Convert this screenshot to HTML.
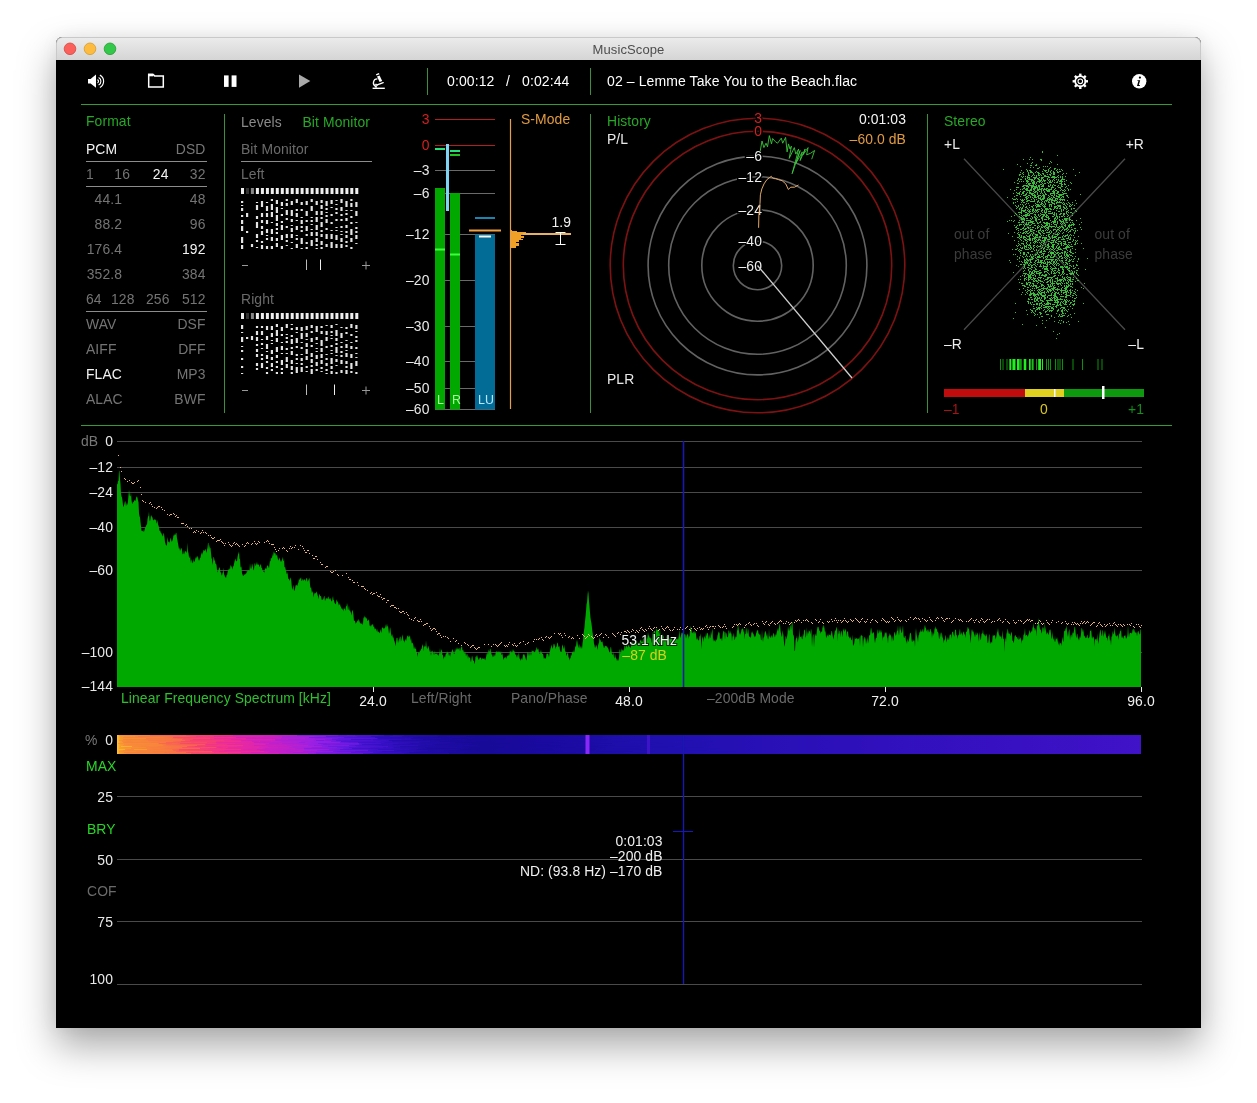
<!DOCTYPE html>
<html><head><meta charset="utf-8"><title>MusicScope</title>
<style>
html,body{margin:0;padding:0;width:1257px;height:1103px;overflow:hidden;background:#fff;}
#win{position:absolute;left:56px;top:37px;width:1145px;height:991px;background:#000;border-radius:6px 6px 0 0;box-shadow:0 18px 38px rgba(0,0,0,0.34), 0 0 18px rgba(0,0,0,0.05);}
#tb{position:absolute;left:0;top:0;width:1143px;height:22px;border:1px solid #c9c9c9;border-bottom:0;border-radius:6px 6px 0 0;background:linear-gradient(#ebebeb,#d5d5d5);}
svg{position:absolute;left:0;top:0;font-family:"Liberation Sans", sans-serif;will-change:transform;}
text{letter-spacing:0.1px;}
</style></head><body>
<div id="win"><div id="tb"></div></div>
<svg width="1257" height="1103" viewBox="0 0 1257 1103">
<text x="628.5" y="54" fill="#4d4d4d" font-size="13" text-anchor="middle" >MusicScope</text>
<circle cx="70" cy="48.8" r="5.8" fill="#fc605b" stroke="#d2463f" stroke-width="0.8"/>
<circle cx="90" cy="48.8" r="5.8" fill="#fdbc40" stroke="#d49a2c" stroke-width="0.8"/>
<circle cx="110" cy="48.8" r="5.8" fill="#34c84a" stroke="#249a30" stroke-width="0.8"/>
<path d="M88 79h2.6l5.4-4.4v13.2l-5.4-4.4h-2.6z" fill="#fff"/>
<path d="M97.49 79.62A1.9 1.9 0 0 1 97.49 82.98M98.62 77.50A4.3 4.3 0 0 1 98.62 85.10M99.89 75.12A7.0 7.0 0 0 1 99.89 87.48" fill="none" stroke="#fff" stroke-width="1.15"/>
<path d="M148.7 87.1V74.4h4.4l1.5 1.5h8.7v11.2z" fill="none" stroke="#fff" stroke-width="1.5"/>
<rect x="148" y="73.7" width="5.2" height="2.6" fill="#fff" />
<rect x="224" y="75.4" width="4.6" height="11.5" fill="#fff" />
<rect x="231.6" y="75.4" width="4.9" height="11.5" fill="#fff" />
<path d="M299 74.4L310.3 81.1L299 87.8z" fill="#a9a9a9"/>
<rect x="372.6" y="87.6" width="12.2" height="1.4" fill="#fff" />
<path d="M377.4 78.9A3.9 3.9 0 0 0 375.6 86.3L376.3 87.8" fill="none" stroke="#fff" stroke-width="1.3"/>
<circle cx="376" cy="85.3" r="1.15" fill="none" stroke="#fff" stroke-width="1"/>
<path d="M376.6 85.1L383.2 82.6" fill="none" stroke="#fff" stroke-width="1.3" stroke-linecap="round"/>
<path d="M377 76.6L379.6 75.4L382.2 80.9L379.6 82z" fill="#fff"/>
<path d="M375.9 74.3L378.9 73L379.5 74.3L376.5 75.6z" fill="#fff"/>
<line x1="427.5" y1="68" x2="427.5" y2="95" stroke="#3d8f3d" stroke-width="1" />
<line x1="590.5" y1="68" x2="590.5" y2="95" stroke="#3d8f3d" stroke-width="1" />
<text x="447" y="86" fill="#fff" font-size="14" text-anchor="start" >0:00:12</text>
<text x="506" y="86" fill="#fff" font-size="14" text-anchor="start" >/</text>
<text x="522" y="86" fill="#fff" font-size="14" text-anchor="start" >0:02:44</text>
<text x="607" y="86" fill="#fff" font-size="14" text-anchor="start" >02 – Lemme Take You to the Beach.flac</text>
<g><rect x="1079.1" y="73.6" width="2.4" height="3.4" fill="#fff" transform="rotate(0 1080.3 81.3)"/><rect x="1079.1" y="73.6" width="2.4" height="3.4" fill="#fff" transform="rotate(45 1080.3 81.3)"/><rect x="1079.1" y="73.6" width="2.4" height="3.4" fill="#fff" transform="rotate(90 1080.3 81.3)"/><rect x="1079.1" y="73.6" width="2.4" height="3.4" fill="#fff" transform="rotate(135 1080.3 81.3)"/><rect x="1079.1" y="73.6" width="2.4" height="3.4" fill="#fff" transform="rotate(180 1080.3 81.3)"/><rect x="1079.1" y="73.6" width="2.4" height="3.4" fill="#fff" transform="rotate(225 1080.3 81.3)"/><rect x="1079.1" y="73.6" width="2.4" height="3.4" fill="#fff" transform="rotate(270 1080.3 81.3)"/><rect x="1079.1" y="73.6" width="2.4" height="3.4" fill="#fff" transform="rotate(315 1080.3 81.3)"/><circle cx="1080.3" cy="81.3" r="5.1" fill="none" stroke="#fff" stroke-width="1.7"/><circle cx="1080.3" cy="81.3" r="2.3" fill="none" stroke="#fff" stroke-width="1.1"/></g>
<circle cx="1139.2" cy="81.3" r="7.2" fill="#fff"/>
<circle cx="1139.9" cy="77.6" r="1.1" fill="#000"/>
<path d="M1137.6 80.2h2.6l-1.4 4.8h1.2l-0.3 0.9h-2.7l1.4-4.8h-1.1z" fill="#000"/>
<line x1="81" y1="104.5" x2="1172" y2="104.5" stroke="#369a36" stroke-width="1.2" />
<line x1="81" y1="425.5" x2="1172" y2="425.5" stroke="#369a36" stroke-width="1.2" />
<text x="86" y="126" fill="#27a827" font-size="13.9" text-anchor="start" >Format</text>
<text x="86" y="154" fill="#f2f2f2" font-size="13.9" text-anchor="start" >PCM</text>
<text x="205.5" y="154" fill="#777" font-size="13.9" text-anchor="end" >DSD</text>
<line x1="86" y1="161.5" x2="207" y2="161.5" stroke="#8c8c8c" stroke-width="1" />
<text x="86" y="179" fill="#747474" font-size="13.9" text-anchor="start" >1</text>
<text x="130" y="179" fill="#747474" font-size="13.9" text-anchor="end" >16</text>
<text x="168.5" y="179" fill="#f2f2f2" font-size="13.9" text-anchor="end" >24</text>
<text x="205.5" y="179" fill="#747474" font-size="13.9" text-anchor="end" >32</text>
<line x1="86" y1="186.5" x2="207" y2="186.5" stroke="#8c8c8c" stroke-width="1" />
<text x="122" y="204" fill="#747474" font-size="13.9" text-anchor="end" >44.1</text>
<text x="205.5" y="204" fill="#747474" font-size="13.9" text-anchor="end" >48</text>
<text x="122" y="229" fill="#747474" font-size="13.9" text-anchor="end" >88.2</text>
<text x="205.5" y="229" fill="#747474" font-size="13.9" text-anchor="end" >96</text>
<text x="122" y="254" fill="#747474" font-size="13.9" text-anchor="end" >176.4</text>
<text x="205.5" y="254" fill="#f2f2f2" font-size="13.9" text-anchor="end" >192</text>
<text x="122" y="279" fill="#747474" font-size="13.9" text-anchor="end" >352.8</text>
<text x="205.5" y="279" fill="#747474" font-size="13.9" text-anchor="end" >384</text>
<text x="86" y="304" fill="#747474" font-size="13.9" text-anchor="start" >64</text>
<text x="134.5" y="304" fill="#747474" font-size="13.9" text-anchor="end" >128</text>
<text x="169.5" y="304" fill="#747474" font-size="13.9" text-anchor="end" >256</text>
<text x="205.5" y="304" fill="#747474" font-size="13.9" text-anchor="end" >512</text>
<line x1="86" y1="311.5" x2="207" y2="311.5" stroke="#8c8c8c" stroke-width="1" />
<text x="86" y="329" fill="#747474" font-size="13.9" text-anchor="start" >WAV</text>
<text x="205.5" y="329" fill="#747474" font-size="13.9" text-anchor="end" >DSF</text>
<text x="86" y="354" fill="#747474" font-size="13.9" text-anchor="start" >AIFF</text>
<text x="205.5" y="354" fill="#747474" font-size="13.9" text-anchor="end" >DFF</text>
<text x="86" y="379" fill="#f2f2f2" font-size="13.9" text-anchor="start" >FLAC</text>
<text x="205.5" y="379" fill="#747474" font-size="13.9" text-anchor="end" >MP3</text>
<text x="86" y="404" fill="#747474" font-size="13.9" text-anchor="start" >ALAC</text>
<text x="205.5" y="404" fill="#747474" font-size="13.9" text-anchor="end" >BWF</text>
<line x1="224.5" y1="114" x2="224.5" y2="413" stroke="#3d8f3d" stroke-width="1" />
<line x1="590.5" y1="114" x2="590.5" y2="413" stroke="#3d8f3d" stroke-width="1" />
<line x1="927.5" y1="114" x2="927.5" y2="413" stroke="#3d8f3d" stroke-width="1" />
<text x="241" y="127" fill="#8a8a8a" font-size="13.9" text-anchor="start" >Levels</text>
<text x="302.5" y="127" fill="#27a827" font-size="13.9" text-anchor="start" >Bit Monitor</text>
<text x="241" y="154" fill="#6a6a6a" font-size="13.9" text-anchor="start" >Bit Monitor</text>
<line x1="241" y1="161.5" x2="372" y2="161.5" stroke="#8c8c8c" stroke-width="1" />
<text x="241" y="179" fill="#6a6a6a" font-size="13.9" text-anchor="start" >Left</text>
<text x="241" y="304" fill="#6a6a6a" font-size="13.9" text-anchor="start" >Right</text>
<rect x="246.0" y="188" width="3" height="6" fill="#333"/>
<rect x="250.9" y="188" width="3" height="6" fill="#888"/>
<path d="M241.0 188h3v6h-3zM255.9 188h3v6h-3zM260.9 188h3v6h-3zM265.9 188h3v6h-3zM270.8 188h3v6h-3zM275.8 188h3v6h-3zM280.8 188h3v6h-3zM285.7 188h3v6h-3zM290.7 188h3v6h-3zM295.7 188h3v6h-3zM300.6 188h3v6h-3zM305.6 188h3v6h-3zM310.6 188h3v6h-3zM315.6 188h3v6h-3zM320.5 188h3v6h-3zM325.5 188h3v6h-3zM330.5 188h3v6h-3zM335.4 188h3v6h-3zM340.4 188h3v6h-3zM345.4 188h3v6h-3zM350.3 188h3v6h-3zM355.3 188h3v6h-3z" fill="#eee"/>
<path d="M241.0 201h2.2v2h-2.2zM241.0 205h2.2v1h-2.2zM241.0 208h2.2v3h-2.2zM241.0 215h2.2v2h-2.2zM241.0 220h2.2v4h-2.2zM241.0 226h2.2v5h-2.2zM241.0 237h2.2v6h-2.2zM241.0 245h2.2v4h-2.2zM246.0 213h2.2v4h-2.2zM246.0 231h2.2v2h-2.2zM250.9 244h2.2v3h-2.2zM255.9 202h2.2v1h-2.2zM255.9 205h2.2v5h-2.2zM255.9 216h2.2v3h-2.2zM255.9 222h2.2v6h-2.2zM255.9 234h2.2v4h-2.2zM255.9 240h2.2v2h-2.2zM255.9 247h2.2v1h-2.2zM260.9 201h2.2v6h-2.2zM260.9 213h2.2v4h-2.2zM260.9 220h2.2v3h-2.2zM260.9 226h2.2v3h-2.2zM260.9 231h2.2v4h-2.2zM260.9 241h2.2v2h-2.2zM260.9 245h2.2v4h-2.2zM265.9 202h2.2v1h-2.2zM265.9 206h2.2v5h-2.2zM265.9 213h2.2v4h-2.2zM265.9 220h2.2v4h-2.2zM265.9 229h2.2v4h-2.2zM265.9 235h2.2v1h-2.2zM265.9 238h2.2v2h-2.2zM265.9 246h2.2v3h-2.2zM270.8 199h2.2v2h-2.2zM270.8 204h2.2v6h-2.2zM270.8 212h2.2v5h-2.2zM270.8 222h2.2v1h-2.2zM270.8 229h2.2v5h-2.2zM270.8 237h2.2v4h-2.2zM270.8 246h2.2v3h-2.2zM275.8 200h2.2v4h-2.2zM275.8 207h2.2v6h-2.2zM275.8 215h2.2v6h-2.2zM275.8 223h2.2v3h-2.2zM275.8 228h2.2v2h-2.2zM275.8 232h2.2v2h-2.2zM275.8 238h2.2v3h-2.2zM275.8 243h2.2v4h-2.2zM280.8 202h2.2v4h-2.2zM280.8 208h2.2v1h-2.2zM280.8 214h2.2v2h-2.2zM280.8 221h2.2v2h-2.2zM280.8 225h2.2v5h-2.2zM280.8 235h2.2v5h-2.2zM280.8 246h2.2v3h-2.2zM285.7 199h2.2v2h-2.2zM285.7 203h2.2v3h-2.2zM285.7 210h2.2v5h-2.2zM285.7 218h2.2v2h-2.2zM285.7 226h2.2v2h-2.2zM285.7 234h2.2v4h-2.2zM285.7 240h2.2v2h-2.2zM285.7 245h2.2v1h-2.2zM290.7 201h2.2v4h-2.2zM290.7 210h2.2v6h-2.2zM290.7 219h2.2v3h-2.2zM290.7 225h2.2v1h-2.2zM290.7 228h2.2v4h-2.2zM290.7 234h2.2v4h-2.2zM290.7 242h2.2v1h-2.2zM290.7 248h2.2v1h-2.2zM295.7 199h2.2v4h-2.2zM295.7 209h2.2v2h-2.2zM295.7 213h2.2v4h-2.2zM295.7 220h2.2v1h-2.2zM295.7 226h2.2v4h-2.2zM295.7 235h2.2v1h-2.2zM295.7 238h2.2v2h-2.2zM295.7 244h2.2v4h-2.2zM300.6 202h2.2v3h-2.2zM300.6 209h2.2v2h-2.2zM300.6 217h2.2v1h-2.2zM300.6 220h2.2v4h-2.2zM300.6 226h2.2v2h-2.2zM300.6 230h2.2v2h-2.2zM300.6 238h2.2v6h-2.2zM300.6 248h2.2v1h-2.2zM305.6 201h2.2v4h-2.2zM305.6 211h2.2v5h-2.2zM305.6 220h2.2v2h-2.2zM305.6 226h2.2v5h-2.2zM305.6 234h2.2v2h-2.2zM305.6 242h2.2v2h-2.2zM305.6 247h2.2v2h-2.2zM310.6 199h2.2v3h-2.2zM310.6 206h2.2v5h-2.2zM310.6 217h2.2v1h-2.2zM310.6 220h2.2v2h-2.2zM310.6 224h2.2v1h-2.2zM310.6 229h2.2v1h-2.2zM310.6 232h2.2v4h-2.2zM310.6 240h2.2v6h-2.2zM315.6 201h2.2v4h-2.2zM315.6 211h2.2v4h-2.2zM315.6 217h2.2v5h-2.2zM315.6 225h2.2v5h-2.2zM315.6 232h2.2v4h-2.2zM315.6 238h2.2v4h-2.2zM315.6 244h2.2v2h-2.2zM315.6 248h2.2v1h-2.2zM320.5 200h2.2v3h-2.2zM320.5 205h2.2v4h-2.2zM320.5 211h2.2v4h-2.2zM320.5 217h2.2v2h-2.2zM320.5 222h2.2v5h-2.2zM320.5 230h2.2v2h-2.2zM320.5 234h2.2v3h-2.2zM320.5 241h2.2v4h-2.2zM320.5 247h2.2v2h-2.2zM325.5 201h2.2v5h-2.2zM325.5 208h2.2v2h-2.2zM325.5 212h2.2v1h-2.2zM325.5 215h2.2v2h-2.2zM325.5 219h2.2v4h-2.2zM325.5 228h2.2v2h-2.2zM325.5 234h2.2v5h-2.2zM325.5 244h2.2v3h-2.2zM330.5 200h2.2v4h-2.2zM330.5 207h2.2v1h-2.2zM330.5 214h2.2v2h-2.2zM330.5 222h2.2v2h-2.2zM330.5 230h2.2v1h-2.2zM330.5 234h2.2v5h-2.2zM330.5 242h2.2v6h-2.2zM335.4 200h2.2v1h-2.2zM335.4 204h2.2v1h-2.2zM335.4 208h2.2v2h-2.2zM335.4 212h2.2v2h-2.2zM335.4 219h2.2v2h-2.2zM335.4 227h2.2v1h-2.2zM335.4 230h2.2v1h-2.2zM335.4 235h2.2v5h-2.2zM335.4 244h2.2v4h-2.2zM340.4 199h2.2v4h-2.2zM340.4 207h2.2v4h-2.2zM340.4 214h2.2v2h-2.2zM340.4 219h2.2v2h-2.2zM340.4 226h2.2v2h-2.2zM340.4 231h2.2v1h-2.2zM340.4 234h2.2v1h-2.2zM340.4 238h2.2v4h-2.2zM340.4 244h2.2v4h-2.2zM345.4 201h2.2v6h-2.2zM345.4 210h2.2v1h-2.2zM345.4 213h2.2v2h-2.2zM345.4 218h2.2v3h-2.2zM345.4 225h2.2v3h-2.2zM345.4 231h2.2v2h-2.2zM345.4 235h2.2v3h-2.2zM345.4 241h2.2v2h-2.2zM345.4 245h2.2v2h-2.2zM350.3 199h2.2v2h-2.2zM350.3 203h2.2v4h-2.2zM350.3 210h2.2v1h-2.2zM350.3 216h2.2v2h-2.2zM350.3 222h2.2v2h-2.2zM350.3 229h2.2v6h-2.2zM350.3 238h2.2v4h-2.2zM350.3 247h2.2v2h-2.2zM355.3 202h2.2v5h-2.2zM355.3 211h2.2v5h-2.2zM355.3 222h2.2v1h-2.2zM355.3 227h2.2v2h-2.2zM355.3 231h2.2v2h-2.2zM355.3 235h2.2v4h-2.2zM355.3 243h2.2v1h-2.2z" fill="#e4e4e4"/>
<rect x="246.0" y="313" width="3" height="6" fill="#333"/>
<rect x="250.9" y="313" width="3" height="6" fill="#888"/>
<path d="M241.0 313h3v6h-3zM255.9 313h3v6h-3zM260.9 313h3v6h-3zM265.9 313h3v6h-3zM270.8 313h3v6h-3zM275.8 313h3v6h-3zM280.8 313h3v6h-3zM285.7 313h3v6h-3zM290.7 313h3v6h-3zM295.7 313h3v6h-3zM300.6 313h3v6h-3zM305.6 313h3v6h-3zM310.6 313h3v6h-3zM315.6 313h3v6h-3zM320.5 313h3v6h-3zM325.5 313h3v6h-3zM330.5 313h3v6h-3zM335.4 313h3v6h-3zM340.4 313h3v6h-3zM345.4 313h3v6h-3zM350.3 313h3v6h-3zM355.3 313h3v6h-3z" fill="#eee"/>
<path d="M241.0 325h2.2v4h-2.2zM241.0 332h2.2v1h-2.2zM241.0 337h2.2v5h-2.2zM241.0 346h2.2v1h-2.2zM241.0 350h2.2v2h-2.2zM241.0 358h2.2v2h-2.2zM241.0 366h2.2v2h-2.2zM241.0 373h2.2v1h-2.2zM246.0 337h2.2v2h-2.2zM250.9 336h2.2v4h-2.2zM255.9 326h2.2v2h-2.2zM255.9 331h2.2v4h-2.2zM255.9 337h2.2v4h-2.2zM255.9 344h2.2v2h-2.2zM255.9 349h2.2v3h-2.2zM255.9 354h2.2v3h-2.2zM255.9 363h2.2v3h-2.2zM255.9 368h2.2v2h-2.2zM260.9 326h2.2v2h-2.2zM260.9 331h2.2v4h-2.2zM260.9 339h2.2v1h-2.2zM260.9 343h2.2v2h-2.2zM260.9 348h2.2v1h-2.2zM260.9 354h2.2v2h-2.2zM260.9 358h2.2v2h-2.2zM260.9 363h2.2v5h-2.2zM265.9 326h2.2v4h-2.2zM265.9 336h2.2v4h-2.2zM265.9 344h2.2v5h-2.2zM265.9 351h2.2v1h-2.2zM265.9 355h2.2v4h-2.2zM265.9 361h2.2v2h-2.2zM265.9 367h2.2v2h-2.2zM265.9 372h2.2v2h-2.2zM270.8 326h2.2v4h-2.2zM270.8 333h2.2v4h-2.2zM270.8 340h2.2v1h-2.2zM270.8 343h2.2v1h-2.2zM270.8 350h2.2v4h-2.2zM270.8 357h2.2v3h-2.2zM270.8 363h2.2v4h-2.2zM270.8 369h2.2v2h-2.2zM275.8 324h2.2v3h-2.2zM275.8 330h2.2v6h-2.2zM275.8 338h2.2v4h-2.2zM275.8 347h2.2v5h-2.2zM275.8 355h2.2v3h-2.2zM275.8 361h2.2v2h-2.2zM275.8 366h2.2v2h-2.2zM275.8 372h2.2v2h-2.2zM280.8 327h2.2v4h-2.2zM280.8 334h2.2v2h-2.2zM280.8 342h2.2v1h-2.2zM280.8 346h2.2v4h-2.2zM280.8 353h2.2v1h-2.2zM280.8 360h2.2v5h-2.2zM280.8 368h2.2v2h-2.2zM280.8 372h2.2v2h-2.2zM285.7 324h2.2v4h-2.2zM285.7 334h2.2v1h-2.2zM285.7 337h2.2v2h-2.2zM285.7 341h2.2v2h-2.2zM285.7 348h2.2v2h-2.2zM285.7 353h2.2v1h-2.2zM285.7 357h2.2v5h-2.2zM285.7 364h2.2v4h-2.2zM290.7 324h2.2v1h-2.2zM290.7 328h2.2v2h-2.2zM290.7 335h2.2v2h-2.2zM290.7 339h2.2v5h-2.2zM290.7 347h2.2v2h-2.2zM290.7 351h2.2v4h-2.2zM290.7 360h2.2v4h-2.2zM290.7 366h2.2v4h-2.2zM290.7 372h2.2v2h-2.2zM295.7 327h2.2v3h-2.2zM295.7 332h2.2v1h-2.2zM295.7 338h2.2v5h-2.2zM295.7 346h2.2v2h-2.2zM295.7 354h2.2v2h-2.2zM295.7 358h2.2v2h-2.2zM295.7 363h2.2v1h-2.2zM295.7 367h2.2v6h-2.2zM300.6 327h2.2v4h-2.2zM300.6 333h2.2v6h-2.2zM300.6 342h2.2v1h-2.2zM300.6 347h2.2v2h-2.2zM300.6 354h2.2v1h-2.2zM300.6 358h2.2v3h-2.2zM300.6 363h2.2v2h-2.2zM300.6 367h2.2v5h-2.2zM305.6 326h2.2v4h-2.2zM305.6 333h2.2v4h-2.2zM305.6 339h2.2v1h-2.2zM305.6 343h2.2v4h-2.2zM305.6 349h2.2v5h-2.2zM305.6 356h2.2v4h-2.2zM305.6 366h2.2v2h-2.2zM305.6 371h2.2v1h-2.2zM310.6 325h2.2v3h-2.2zM310.6 331h2.2v2h-2.2zM310.6 338h2.2v4h-2.2zM310.6 345h2.2v2h-2.2zM310.6 353h2.2v4h-2.2zM310.6 359h2.2v4h-2.2zM310.6 365h2.2v2h-2.2zM310.6 369h2.2v5h-2.2zM315.6 326h2.2v6h-2.2zM315.6 337h2.2v3h-2.2zM315.6 343h2.2v1h-2.2zM315.6 348h2.2v1h-2.2zM315.6 351h2.2v1h-2.2zM315.6 355h2.2v4h-2.2zM315.6 362h2.2v4h-2.2zM315.6 369h2.2v2h-2.2zM320.5 326h2.2v2h-2.2zM320.5 331h2.2v3h-2.2zM320.5 340h2.2v6h-2.2zM320.5 348h2.2v4h-2.2zM320.5 354h2.2v4h-2.2zM320.5 360h2.2v4h-2.2zM320.5 367h2.2v2h-2.2zM320.5 371h2.2v1h-2.2zM325.5 325h2.2v1h-2.2zM325.5 331h2.2v4h-2.2zM325.5 337h2.2v4h-2.2zM325.5 346h2.2v2h-2.2zM325.5 354h2.2v1h-2.2zM325.5 358h2.2v2h-2.2zM325.5 363h2.2v3h-2.2zM325.5 369h2.2v2h-2.2zM325.5 373h2.2v1h-2.2zM330.5 325h2.2v3h-2.2zM330.5 331h2.2v2h-2.2zM330.5 335h2.2v1h-2.2zM330.5 338h2.2v1h-2.2zM330.5 345h2.2v2h-2.2zM330.5 350h2.2v1h-2.2zM330.5 353h2.2v1h-2.2zM330.5 358h2.2v6h-2.2zM330.5 366h2.2v3h-2.2zM330.5 371h2.2v3h-2.2zM335.4 324h2.2v1h-2.2zM335.4 330h2.2v6h-2.2zM335.4 338h2.2v3h-2.2zM335.4 343h2.2v2h-2.2zM335.4 347h2.2v6h-2.2zM335.4 355h2.2v1h-2.2zM335.4 359h2.2v3h-2.2zM335.4 365h2.2v1h-2.2zM335.4 372h2.2v2h-2.2zM340.4 327h2.2v1h-2.2zM340.4 333h2.2v5h-2.2zM340.4 342h2.2v1h-2.2zM340.4 346h2.2v2h-2.2zM340.4 351h2.2v2h-2.2zM340.4 355h2.2v2h-2.2zM340.4 360h2.2v4h-2.2zM340.4 370h2.2v3h-2.2zM345.4 327h2.2v2h-2.2zM345.4 332h2.2v2h-2.2zM345.4 340h2.2v1h-2.2zM345.4 344h2.2v4h-2.2zM345.4 350h2.2v1h-2.2zM345.4 353h2.2v4h-2.2zM345.4 361h2.2v3h-2.2zM345.4 366h2.2v2h-2.2zM345.4 370h2.2v4h-2.2zM350.3 324h2.2v4h-2.2zM350.3 334h2.2v2h-2.2zM350.3 342h2.2v1h-2.2zM350.3 346h2.2v3h-2.2zM350.3 354h2.2v4h-2.2zM350.3 363h2.2v6h-2.2zM350.3 371h2.2v2h-2.2zM355.3 325h2.2v4h-2.2zM355.3 331h2.2v1h-2.2zM355.3 336h2.2v2h-2.2zM355.3 340h2.2v2h-2.2zM355.3 347h2.2v2h-2.2zM355.3 353h2.2v1h-2.2zM355.3 357h2.2v1h-2.2zM355.3 361h2.2v5h-2.2zM355.3 372h2.2v2h-2.2z" fill="#e4e4e4"/>
<line x1="242" y1="265.5" x2="248" y2="265.5" stroke="#999" stroke-width="1" />
<line x1="362" y1="265.5" x2="370" y2="265.5" stroke="#999" stroke-width="1" />
<line x1="366" y1="261.5" x2="366" y2="269.5" stroke="#999" stroke-width="1" />
<line x1="306.5" y1="259.5" x2="306.5" y2="270" stroke="#bbb" stroke-width="1" />
<line x1="320.5" y1="259.5" x2="320.5" y2="270" stroke="#eee" stroke-width="1" />
<line x1="242" y1="390.5" x2="248" y2="390.5" stroke="#999" stroke-width="1" />
<line x1="362" y1="390.5" x2="370" y2="390.5" stroke="#999" stroke-width="1" />
<line x1="366" y1="386.5" x2="366" y2="394.5" stroke="#999" stroke-width="1" />
<line x1="306.5" y1="384.5" x2="306.5" y2="395" stroke="#bbb" stroke-width="1" />
<line x1="334.5" y1="384.5" x2="334.5" y2="395" stroke="#eee" stroke-width="1" />
<text x="429.5" y="124" fill="#d42020" font-size="13.9" text-anchor="end" >3</text>
<line x1="435" y1="119.5" x2="495" y2="119.5" stroke="#b02020" stroke-width="1" />
<text x="429.5" y="150" fill="#d42020" font-size="13.9" text-anchor="end" >0</text>
<line x1="435" y1="145.5" x2="495" y2="145.5" stroke="#b02020" stroke-width="1" />
<line x1="435" y1="170.5" x2="495" y2="170.5" stroke="#6a6a6a" stroke-width="1" />
<text x="429.5" y="175.0" fill="#e8e8e8" font-size="13.9" text-anchor="end" >–3</text>
<line x1="435" y1="193.5" x2="495" y2="193.5" stroke="#6a6a6a" stroke-width="1" />
<text x="429.5" y="198.0" fill="#e8e8e8" font-size="13.9" text-anchor="end" >–6</text>
<line x1="435" y1="234.5" x2="495" y2="234.5" stroke="#6a6a6a" stroke-width="1" />
<text x="429.5" y="239.0" fill="#e8e8e8" font-size="13.9" text-anchor="end" >–12</text>
<line x1="435" y1="280.5" x2="495" y2="280.5" stroke="#6a6a6a" stroke-width="1" />
<text x="429.5" y="285.0" fill="#e8e8e8" font-size="13.9" text-anchor="end" >–20</text>
<line x1="435" y1="326.5" x2="495" y2="326.5" stroke="#6a6a6a" stroke-width="1" />
<text x="429.5" y="331.0" fill="#e8e8e8" font-size="13.9" text-anchor="end" >–30</text>
<line x1="435" y1="361.5" x2="495" y2="361.5" stroke="#6a6a6a" stroke-width="1" />
<text x="429.5" y="366.0" fill="#e8e8e8" font-size="13.9" text-anchor="end" >–40</text>
<line x1="435" y1="388.5" x2="495" y2="388.5" stroke="#6a6a6a" stroke-width="1" />
<text x="429.5" y="393.0" fill="#e8e8e8" font-size="13.9" text-anchor="end" >–50</text>
<line x1="435" y1="409.5" x2="495" y2="409.5" stroke="#6a6a6a" stroke-width="1" />
<text x="429.5" y="414.0" fill="#e8e8e8" font-size="13.9" text-anchor="end" >–60</text>
<rect x="435" y="188" width="10" height="221.5" fill="#00a800" />
<rect x="450" y="193" width="10" height="216.5" fill="#00a800" />
<rect x="475" y="234.5" width="20" height="175" fill="#036c96" />
<rect x="446" y="144" width="3" height="67" fill="#7fd4f4" />
<rect x="435" y="148" width="10" height="2" fill="#26e07a" />
<rect x="450" y="150" width="10" height="2" fill="#26e07a" />
<rect x="450" y="154" width="10" height="2" fill="#1fc21f" />
<rect x="435" y="248.5" width="10" height="2" fill="#3cff3c" />
<rect x="450" y="253.5" width="10" height="2" fill="#3cff3c" />
<rect x="475" y="217" width="20" height="2" fill="#1a85b0" />
<rect x="469" y="229.5" width="32" height="2" fill="#f0a040" />
<rect x="479" y="235.5" width="12" height="2" fill="#f4f4f4" />
<text x="437" y="404" fill="#a6ff9a" font-size="12.4" text-anchor="start" >L</text>
<text x="452" y="404" fill="#a6ff9a" font-size="12.4" text-anchor="start" >R</text>
<text x="478" y="404" fill="#b8e8ff" font-size="12.4" text-anchor="start" >LU</text>
<line x1="510.5" y1="119" x2="510.5" y2="409" stroke="#e0a050" stroke-width="1.2" />
<text x="521" y="124" fill="#e09a40" font-size="13.9" text-anchor="start" >S-Mode</text>
<rect x="511" y="233" width="60" height="2" fill="#e8b064" />
<path d="M511 230h1v1h-1zM511 231h6v1h-6zM511 232h15v1h-15zM511 233h12v1h-12zM511 234h12v1h-12zM511 235h10v1h-10zM511 236h13v1h-13zM511 237h13v1h-13zM511 238h10v1h-10zM511 239h12v1h-12zM511 240h8v1h-8zM511 241h8v1h-8zM511 242h5v1h-5zM511 243h8v1h-8zM511 244h8v1h-8zM511 245h8v1h-8zM511 246h5v1h-5zM511 247h5v1h-5z" fill="#f0a026"/>
<text x="571" y="227" fill="#f0f0f0" font-size="13.9" text-anchor="end" >1.9</text>
<path d="M555.5 232.5h10M555.5 244.5h10M560.5 232.5v12" stroke="#fff" stroke-width="1" fill="none"/>
<circle cx="757.5" cy="265.5" r="24.2" fill="none" stroke="#626262" stroke-width="1.6"/>
<circle cx="757.5" cy="265.5" r="55.7" fill="none" stroke="#626262" stroke-width="1.6"/>
<circle cx="757.5" cy="265.5" r="88.8" fill="none" stroke="#626262" stroke-width="1.6"/>
<circle cx="757.5" cy="265.5" r="109.4" fill="none" stroke="#626262" stroke-width="1.6"/>
<circle cx="757.5" cy="265.5" r="134.2" fill="none" stroke="#7e1212" stroke-width="1.6"/>
<circle cx="757.5" cy="265.5" r="147.3" fill="none" stroke="#7e1212" stroke-width="1.6"/>
<text x="762" y="123.19999999999999" fill="#d42020" font-size="13.9" text-anchor="end" stroke="#000" stroke-width="3" paint-order="stroke">3</text>
<text x="762" y="136.3" fill="#d42020" font-size="13.9" text-anchor="end" stroke="#000" stroke-width="3" paint-order="stroke">0</text>
<text x="762" y="161.1" fill="#eee" font-size="13.9" text-anchor="end" stroke="#000" stroke-width="3" paint-order="stroke">–6</text>
<text x="762" y="181.7" fill="#eee" font-size="13.9" text-anchor="end" stroke="#000" stroke-width="3" paint-order="stroke">–12</text>
<text x="762" y="214.8" fill="#eee" font-size="13.9" text-anchor="end" stroke="#000" stroke-width="3" paint-order="stroke">–24</text>
<text x="762" y="246.3" fill="#eee" font-size="13.9" text-anchor="end" stroke="#000" stroke-width="3" paint-order="stroke">–40</text>
<text x="762" y="270.5" fill="#eee" font-size="13.9" text-anchor="end" stroke="#000" stroke-width="3" paint-order="stroke">–60</text>
<line x1="757.5" y1="265.5" x2="852" y2="378" stroke="#d0d0d0" stroke-width="1.3" />
<text x="607" y="126" fill="#27a827" font-size="13.9" text-anchor="start" >History</text>
<text x="607" y="144" fill="#e8e8e8" font-size="13.9" text-anchor="start" >P/L</text>
<text x="607" y="384" fill="#e8e8e8" font-size="13.9" text-anchor="start" >PLR</text>
<text x="906" y="124" fill="#f4f4f4" font-size="13.9" text-anchor="end" >0:01:03</text>
<text x="906" y="144" fill="#e09a40" font-size="13.9" text-anchor="end" >–60.0 dB</text>
<polyline points="760.2,151.2 762.0,141.0 763.9,147.6 766.0,143.2 767.5,146.8 769.3,135.6 771.5,143.9 772.6,138.5 775.5,141.8 777.6,143.2 781.3,138.1 782.7,143.2 785.6,137.4 787.1,151.9 788.5,143.9 790.0,149.0 791.4,146.1 789.2,158.4 794.3,147.6 795.8,154.1 798.7,149.0 792.1,173.7 800.1,150.5 795.8,163.5 802.3,151.9 800.1,160.6 805.2,149.0 803.0,154.8 808.1,147.6 806.6,154.8 810.3,153.4 814.6,150.5 811.7,159.2" fill="none" stroke="#3cc63c" stroke-width="0.9"/>
<polyline points="758.6,227.8 758.9,215.1 760,203.5 760.4,194.8 761.8,189 764,183.9 766.9,179.6 771.3,176.3 772.7,178.1 775.6,178.5 778.5,179.6 782.1,180.7 785.8,183.9 788.3,189.4 790.8,187.2 794.5,187.2 798.5,185" fill="none" stroke="#e4a868" stroke-width="1"/>
<text x="944" y="126" fill="#27a827" font-size="13.9" text-anchor="start" >Stereo</text>
<text x="944" y="149" fill="#eee" font-size="13.9" text-anchor="start" >+L</text>
<text x="1144" y="149" fill="#eee" font-size="13.9" text-anchor="end" >+R</text>
<text x="944" y="349" fill="#eee" font-size="13.9" text-anchor="start" >–R</text>
<text x="1144" y="349" fill="#eee" font-size="13.9" text-anchor="end" >–L</text>
<line x1="964" y1="158.7" x2="1125" y2="329.8" stroke="#4a4a4a" stroke-width="1.3" />
<line x1="1125" y1="158.7" x2="964" y2="329.8" stroke="#4a4a4a" stroke-width="1.3" />
<text x="954" y="239" fill="#3c3c3c" font-size="13.9" text-anchor="start" >out of</text>
<text x="954" y="259" fill="#3c3c3c" font-size="13.9" text-anchor="start" >phase</text>
<text x="1094.5" y="239" fill="#3c3c3c" font-size="13.9" text-anchor="start" >out of</text>
<text x="1094.5" y="259" fill="#3c3c3c" font-size="13.9" text-anchor="start" >phase</text>
<path d="M1039 222h1v1h-1zM1045 239h1v1h-1zM1035 260h1v1h-1zM1016 187h1v1h-1zM1054 317h1v1h-1zM1022 200h1v1h-1zM1042 198h1v1h-1zM1049 237h1v1h-1zM1030 238h1v1h-1zM1058 322h1v1h-1zM1025 216h1v1h-1zM1046 269h1v1h-1zM1039 305h1v1h-1zM1046 282h1v1h-1zM1028 174h1v1h-1zM1060 176h1v1h-1zM1024 188h1v1h-1zM1051 286h1v1h-1zM1048 197h1v1h-1zM1033 184h1v1h-1zM1062 309h1v1h-1zM1054 191h1v1h-1zM1031 189h1v1h-1zM1030 277h1v1h-1zM1044 180h1v1h-1zM1046 209h1v1h-1zM1026 254h1v1h-1zM1034 300h1v1h-1zM1070 278h1v1h-1zM1028 290h1v1h-1zM1050 181h1v1h-1zM1028 211h1v1h-1zM1028 195h1v1h-1zM1030 254h1v1h-1zM1041 300h1v1h-1zM1039 237h1v1h-1zM1071 255h1v1h-1zM1049 303h1v1h-1zM1062 192h1v1h-1zM1055 270h1v1h-1zM1070 238h1v1h-1zM1054 172h1v1h-1zM1063 271h1v1h-1zM1056 215h1v1h-1zM1042 232h1v1h-1zM1056 253h1v1h-1zM1045 170h1v1h-1zM1056 265h1v1h-1zM1058 234h1v1h-1zM1029 170h1v1h-1zM1070 260h1v1h-1zM1054 212h1v1h-1zM1059 206h1v1h-1zM1053 237h1v1h-1zM1064 189h1v1h-1zM1044 288h1v1h-1zM1056 179h1v1h-1zM1030 275h1v1h-1zM1043 233h1v1h-1zM1066 253h1v1h-1zM1033 306h1v1h-1zM1055 302h1v1h-1zM1024 215h1v1h-1zM1033 246h1v1h-1zM1042 199h1v1h-1zM1066 253h1v1h-1zM1035 269h1v1h-1zM1031 163h1v1h-1zM1050 204h1v1h-1zM1059 257h1v1h-1zM1064 310h1v1h-1zM1061 181h1v1h-1zM1056 213h1v1h-1zM1038 295h1v1h-1zM1054 276h1v1h-1zM1063 214h1v1h-1zM1066 248h1v1h-1zM1048 289h1v1h-1zM1016 249h1v1h-1zM1038 294h1v1h-1zM1023 219h1v1h-1zM1049 241h1v1h-1zM1030 289h1v1h-1zM1053 197h1v1h-1zM1049 249h1v1h-1zM1069 206h1v1h-1zM1037 209h1v1h-1zM1052 253h1v1h-1zM1051 271h1v1h-1zM1040 230h1v1h-1zM1046 275h1v1h-1zM1048 309h1v1h-1zM1061 179h1v1h-1zM1055 236h1v1h-1zM1037 308h1v1h-1zM1040 199h1v1h-1zM1056 219h1v1h-1zM1029 184h1v1h-1zM1043 240h1v1h-1zM1056 247h1v1h-1zM1051 249h1v1h-1zM1070 292h1v1h-1zM1072 295h1v1h-1zM1025 214h1v1h-1zM1020 204h1v1h-1zM1033 278h1v1h-1zM1028 227h1v1h-1zM1024 280h1v1h-1zM1052 242h1v1h-1zM1021 200h1v1h-1zM1026 240h1v1h-1zM1075 200h1v1h-1zM1070 303h1v1h-1zM1040 236h1v1h-1zM1021 236h1v1h-1zM1044 271h1v1h-1zM1032 271h1v1h-1zM1064 255h1v1h-1zM1039 275h1v1h-1zM1063 238h1v1h-1zM1056 216h1v1h-1zM1073 274h1v1h-1zM1036 269h1v1h-1zM1049 277h1v1h-1zM1050 167h1v1h-1zM1033 212h1v1h-1zM1039 257h1v1h-1zM1056 305h1v1h-1zM1060 316h1v1h-1zM1029 205h1v1h-1zM1069 227h1v1h-1zM1049 232h1v1h-1zM1028 303h1v1h-1zM1070 255h1v1h-1zM1043 190h1v1h-1zM1047 270h1v1h-1zM1032 240h1v1h-1zM1058 258h1v1h-1zM1020 217h1v1h-1zM1057 193h1v1h-1zM1073 293h1v1h-1zM1039 187h1v1h-1zM1072 308h1v1h-1zM1067 256h1v1h-1zM1049 262h1v1h-1zM1026 206h1v1h-1zM1028 230h1v1h-1zM1051 243h1v1h-1zM1042 320h1v1h-1zM1044 195h1v1h-1zM1054 220h1v1h-1zM1024 247h1v1h-1zM1064 219h1v1h-1zM1040 181h1v1h-1zM1028 264h1v1h-1zM1043 180h1v1h-1zM1036 219h1v1h-1zM1028 277h1v1h-1zM1029 277h1v1h-1zM1045 230h1v1h-1zM1050 268h1v1h-1zM1040 281h1v1h-1zM1023 186h1v1h-1zM1035 241h1v1h-1zM1058 283h1v1h-1zM1056 179h1v1h-1zM1059 214h1v1h-1zM1053 229h1v1h-1zM1045 312h1v1h-1zM1047 282h1v1h-1zM1043 305h1v1h-1zM1041 218h1v1h-1zM1041 188h1v1h-1zM1061 285h1v1h-1zM1051 294h1v1h-1zM1050 233h1v1h-1zM1065 291h1v1h-1zM1064 191h1v1h-1zM1050 181h1v1h-1zM1065 262h1v1h-1zM1033 245h1v1h-1zM1048 303h1v1h-1zM1035 268h1v1h-1zM1057 281h1v1h-1zM1050 299h1v1h-1zM1035 242h1v1h-1zM1078 236h1v1h-1zM1043 226h1v1h-1zM1034 214h1v1h-1zM1023 181h1v1h-1zM1058 172h1v1h-1zM1032 179h1v1h-1zM1024 202h1v1h-1zM1058 196h1v1h-1zM1040 204h1v1h-1zM1030 218h1v1h-1zM1030 254h1v1h-1zM1035 188h1v1h-1zM1073 240h1v1h-1zM1047 263h1v1h-1zM1045 226h1v1h-1zM1034 196h1v1h-1zM1072 284h1v1h-1zM1057 205h1v1h-1zM1047 176h1v1h-1zM1031 181h1v1h-1zM1051 224h1v1h-1zM1052 288h1v1h-1zM1044 309h1v1h-1zM1064 244h1v1h-1zM1035 214h1v1h-1zM1052 235h1v1h-1zM1064 181h1v1h-1zM1043 287h1v1h-1zM1051 271h1v1h-1zM1029 183h1v1h-1zM1053 256h1v1h-1zM1056 210h1v1h-1zM1041 210h1v1h-1zM1040 294h1v1h-1zM1032 290h1v1h-1zM1040 265h1v1h-1zM1035 286h1v1h-1zM1025 197h1v1h-1zM1058 293h1v1h-1zM1037 281h1v1h-1zM1057 235h1v1h-1zM1049 311h1v1h-1zM1050 171h1v1h-1zM1057 181h1v1h-1zM1060 284h1v1h-1zM1048 292h1v1h-1zM1031 187h1v1h-1zM1069 273h1v1h-1zM1035 260h1v1h-1zM1067 250h1v1h-1zM1070 219h1v1h-1zM1043 196h1v1h-1zM1083 248h1v1h-1zM1064 283h1v1h-1zM1046 215h1v1h-1zM1034 290h1v1h-1zM1071 183h1v1h-1zM1066 260h1v1h-1zM1014 215h1v1h-1zM1038 196h1v1h-1zM1038 254h1v1h-1zM1026 246h1v1h-1zM1061 274h1v1h-1zM1059 230h1v1h-1zM1069 277h1v1h-1zM1043 292h1v1h-1zM1046 256h1v1h-1zM1019 236h1v1h-1zM1050 280h1v1h-1zM1031 274h1v1h-1zM1039 182h1v1h-1zM1027 176h1v1h-1zM1023 210h1v1h-1zM1063 307h1v1h-1zM1056 231h1v1h-1zM1062 253h1v1h-1zM1020 174h1v1h-1zM1025 204h1v1h-1zM1040 299h1v1h-1zM1069 254h1v1h-1zM1067 200h1v1h-1zM1073 239h1v1h-1zM1051 300h1v1h-1zM1081 243h1v1h-1zM1059 197h1v1h-1zM1038 186h1v1h-1zM1031 304h1v1h-1zM1025 274h1v1h-1zM1034 199h1v1h-1zM1063 197h1v1h-1zM1042 217h1v1h-1zM1060 199h1v1h-1zM1067 208h1v1h-1zM1019 225h1v1h-1zM1067 254h1v1h-1zM1038 181h1v1h-1zM1063 206h1v1h-1zM1061 316h1v1h-1zM1025 231h1v1h-1zM1052 245h1v1h-1zM1066 274h1v1h-1zM1027 252h1v1h-1zM1041 284h1v1h-1zM1055 234h1v1h-1zM1047 200h1v1h-1zM1060 249h1v1h-1zM1026 254h1v1h-1zM1039 167h1v1h-1zM1063 209h1v1h-1zM1029 240h1v1h-1zM1035 191h1v1h-1zM1051 253h1v1h-1zM1029 185h1v1h-1zM1048 189h1v1h-1zM1032 175h1v1h-1zM1061 314h1v1h-1zM1063 313h1v1h-1zM1036 177h1v1h-1zM1026 224h1v1h-1zM1052 186h1v1h-1zM1035 203h1v1h-1zM1035 241h1v1h-1zM1046 307h1v1h-1zM1060 267h1v1h-1zM1042 281h1v1h-1zM1058 229h1v1h-1zM1048 199h1v1h-1zM1044 195h1v1h-1zM1056 196h1v1h-1zM1034 293h1v1h-1zM1024 265h1v1h-1zM1067 196h1v1h-1zM1034 270h1v1h-1zM1065 296h1v1h-1zM1046 303h1v1h-1zM1052 187h1v1h-1zM1033 249h1v1h-1zM1027 181h1v1h-1zM1027 208h1v1h-1zM1063 269h1v1h-1zM1056 193h1v1h-1zM1035 219h1v1h-1zM1022 210h1v1h-1zM1048 169h1v1h-1zM1073 305h1v1h-1zM1060 198h1v1h-1zM1037 293h1v1h-1zM1040 229h1v1h-1zM1026 212h1v1h-1zM1054 224h1v1h-1zM1042 209h1v1h-1zM1041 184h1v1h-1zM1042 275h1v1h-1zM1042 178h1v1h-1zM1033 248h1v1h-1zM1050 167h1v1h-1zM1040 206h1v1h-1zM1051 263h1v1h-1zM1050 304h1v1h-1zM1065 224h1v1h-1zM1033 284h1v1h-1zM1036 185h1v1h-1zM1043 310h1v1h-1zM1050 266h1v1h-1zM1058 227h1v1h-1zM1061 242h1v1h-1zM1069 304h1v1h-1zM1048 213h1v1h-1zM1053 308h1v1h-1zM1032 234h1v1h-1zM1034 272h1v1h-1zM1029 220h1v1h-1zM1051 182h1v1h-1zM1043 177h1v1h-1zM1015 202h1v1h-1zM1037 196h1v1h-1zM1045 271h1v1h-1zM1054 218h1v1h-1zM1056 242h1v1h-1zM1042 288h1v1h-1zM1024 265h1v1h-1zM1025 268h1v1h-1zM1044 260h1v1h-1zM1059 304h1v1h-1zM1054 192h1v1h-1zM1037 314h1v1h-1zM1036 241h1v1h-1zM1041 286h1v1h-1zM1030 259h1v1h-1zM1026 258h1v1h-1zM1037 206h1v1h-1zM1022 243h1v1h-1zM1039 255h1v1h-1zM1032 197h1v1h-1zM1037 190h1v1h-1zM1068 185h1v1h-1zM1036 204h1v1h-1zM1052 282h1v1h-1zM1069 260h1v1h-1zM1064 299h1v1h-1zM1032 273h1v1h-1zM1056 193h1v1h-1zM1029 214h1v1h-1zM1062 313h1v1h-1zM1060 281h1v1h-1zM1019 289h1v1h-1zM1043 296h1v1h-1zM1041 306h1v1h-1zM1066 219h1v1h-1zM1030 218h1v1h-1zM1044 297h1v1h-1zM1057 277h1v1h-1zM1031 267h1v1h-1zM1045 219h1v1h-1zM1074 224h1v1h-1zM1054 204h1v1h-1zM1064 193h1v1h-1zM1031 194h1v1h-1zM1026 203h1v1h-1zM1036 185h1v1h-1zM1035 254h1v1h-1zM1050 266h1v1h-1zM1064 239h1v1h-1zM1045 259h1v1h-1zM1054 226h1v1h-1zM1045 251h1v1h-1zM1021 243h1v1h-1zM1036 246h1v1h-1zM1067 280h1v1h-1zM1030 196h1v1h-1zM1058 280h1v1h-1zM1023 264h1v1h-1zM1061 292h1v1h-1zM1026 223h1v1h-1zM1045 209h1v1h-1zM1064 277h1v1h-1zM1063 292h1v1h-1zM1033 286h1v1h-1zM1059 169h1v1h-1zM1062 190h1v1h-1zM1073 259h1v1h-1zM1047 191h1v1h-1zM1016 195h1v1h-1zM1038 215h1v1h-1zM1024 254h1v1h-1zM1028 265h1v1h-1zM1035 298h1v1h-1zM1039 307h1v1h-1zM1052 212h1v1h-1zM1039 233h1v1h-1zM1056 247h1v1h-1zM1060 200h1v1h-1zM1037 217h1v1h-1zM1059 294h1v1h-1zM1035 240h1v1h-1zM1056 238h1v1h-1zM1032 265h1v1h-1zM1047 296h1v1h-1zM1047 291h1v1h-1zM1035 187h1v1h-1zM1030 222h1v1h-1zM1055 298h1v1h-1zM1039 232h1v1h-1zM1067 252h1v1h-1zM1061 301h1v1h-1zM1046 271h1v1h-1zM1069 225h1v1h-1zM1039 198h1v1h-1zM1057 278h1v1h-1zM1061 258h1v1h-1zM1045 274h1v1h-1zM1051 182h1v1h-1zM1046 170h1v1h-1zM1039 188h1v1h-1zM1023 186h1v1h-1zM1038 240h1v1h-1zM1044 233h1v1h-1zM1026 238h1v1h-1zM1060 299h1v1h-1zM1064 219h1v1h-1zM1063 232h1v1h-1zM1048 273h1v1h-1zM1063 179h1v1h-1zM1042 262h1v1h-1zM1061 182h1v1h-1zM1064 208h1v1h-1zM1066 297h1v1h-1zM1038 223h1v1h-1zM1039 216h1v1h-1zM1064 229h1v1h-1zM1037 172h1v1h-1zM1036 207h1v1h-1zM1052 240h1v1h-1zM1032 159h1v1h-1zM1052 260h1v1h-1zM1055 220h1v1h-1zM1057 208h1v1h-1zM1034 182h1v1h-1zM1047 272h1v1h-1zM1068 210h1v1h-1zM1068 285h1v1h-1zM1061 280h1v1h-1zM1053 172h1v1h-1zM1063 274h1v1h-1zM1043 262h1v1h-1zM1026 279h1v1h-1zM1044 271h1v1h-1zM1036 231h1v1h-1zM1066 277h1v1h-1zM1026 261h1v1h-1zM1066 222h1v1h-1zM1061 194h1v1h-1zM1017 193h1v1h-1zM1073 225h1v1h-1zM1058 238h1v1h-1zM1043 186h1v1h-1zM1038 197h1v1h-1zM1050 248h1v1h-1zM1052 284h1v1h-1zM1045 304h1v1h-1zM1026 207h1v1h-1zM1048 183h1v1h-1zM1068 226h1v1h-1zM1039 292h1v1h-1zM1068 281h1v1h-1zM1038 173h1v1h-1zM1068 226h1v1h-1zM1041 292h1v1h-1zM1024 191h1v1h-1zM1066 267h1v1h-1zM1067 258h1v1h-1zM1027 218h1v1h-1zM1032 213h1v1h-1zM1045 212h1v1h-1zM1047 208h1v1h-1zM1072 300h1v1h-1zM1047 247h1v1h-1zM1032 272h1v1h-1zM1053 184h1v1h-1zM1055 198h1v1h-1zM1043 295h1v1h-1zM1066 206h1v1h-1zM1032 275h1v1h-1zM1045 263h1v1h-1zM1035 301h1v1h-1zM1041 160h1v1h-1zM1026 292h1v1h-1zM1043 248h1v1h-1zM1047 244h1v1h-1zM1052 245h1v1h-1zM1042 304h1v1h-1zM1060 214h1v1h-1zM1063 315h1v1h-1zM1047 166h1v1h-1zM1017 246h1v1h-1zM1024 245h1v1h-1zM1029 294h1v1h-1zM1048 284h1v1h-1zM1026 277h1v1h-1zM1044 293h1v1h-1zM1059 217h1v1h-1zM1033 201h1v1h-1zM1069 261h1v1h-1zM1044 198h1v1h-1zM1059 279h1v1h-1zM1062 203h1v1h-1zM1038 197h1v1h-1zM1044 268h1v1h-1zM1027 182h1v1h-1zM1037 235h1v1h-1zM1036 304h1v1h-1zM1060 283h1v1h-1zM1063 222h1v1h-1zM1045 238h1v1h-1zM1029 236h1v1h-1zM1059 211h1v1h-1zM1055 222h1v1h-1zM1060 305h1v1h-1zM1038 292h1v1h-1zM1071 227h1v1h-1zM1026 183h1v1h-1zM1047 215h1v1h-1zM1044 237h1v1h-1zM1036 307h1v1h-1zM1035 215h1v1h-1zM1038 190h1v1h-1zM1053 289h1v1h-1zM1071 286h1v1h-1zM1049 318h1v1h-1zM1054 180h1v1h-1zM1059 205h1v1h-1zM1024 237h1v1h-1zM1033 173h1v1h-1zM1057 253h1v1h-1zM1054 208h1v1h-1zM1034 223h1v1h-1zM1074 300h1v1h-1zM1075 298h1v1h-1zM1036 216h1v1h-1zM1044 261h1v1h-1zM1041 182h1v1h-1zM1037 247h1v1h-1zM1043 166h1v1h-1zM1047 257h1v1h-1zM1025 228h1v1h-1zM1035 242h1v1h-1zM1065 288h1v1h-1zM1073 235h1v1h-1zM1065 235h1v1h-1zM1032 239h1v1h-1zM1058 293h1v1h-1zM1058 270h1v1h-1zM1047 288h1v1h-1zM1044 206h1v1h-1zM1062 221h1v1h-1zM1056 300h1v1h-1zM1033 198h1v1h-1zM1059 194h1v1h-1zM1029 265h1v1h-1zM1059 294h1v1h-1zM1045 259h1v1h-1zM1027 224h1v1h-1zM1068 284h1v1h-1zM1035 263h1v1h-1zM1058 192h1v1h-1zM1030 229h1v1h-1zM1055 293h1v1h-1zM1048 216h1v1h-1zM1037 181h1v1h-1zM1055 275h1v1h-1zM1022 204h1v1h-1zM1049 206h1v1h-1zM1045 225h1v1h-1zM1061 310h1v1h-1zM1069 270h1v1h-1zM1076 297h1v1h-1zM1028 249h1v1h-1zM1051 188h1v1h-1zM1062 268h1v1h-1zM1028 264h1v1h-1zM1020 250h1v1h-1zM1045 180h1v1h-1zM1054 182h1v1h-1zM1046 222h1v1h-1zM1022 177h1v1h-1zM1040 240h1v1h-1zM1072 248h1v1h-1zM1071 235h1v1h-1zM1061 186h1v1h-1zM1070 237h1v1h-1zM1035 209h1v1h-1zM1036 216h1v1h-1zM1064 254h1v1h-1zM1044 223h1v1h-1zM1055 237h1v1h-1zM1028 223h1v1h-1zM1055 281h1v1h-1zM1058 229h1v1h-1zM1058 252h1v1h-1zM1036 164h1v1h-1zM1078 258h1v1h-1zM1047 200h1v1h-1zM1050 289h1v1h-1zM1046 271h1v1h-1zM1041 204h1v1h-1zM1051 316h1v1h-1zM1051 277h1v1h-1zM1053 241h1v1h-1zM1061 294h1v1h-1zM1048 235h1v1h-1zM1072 253h1v1h-1zM1032 221h1v1h-1zM1034 264h1v1h-1zM1023 205h1v1h-1zM1032 222h1v1h-1zM1035 297h1v1h-1zM1058 197h1v1h-1zM1020 199h1v1h-1zM1057 288h1v1h-1zM1039 262h1v1h-1zM1067 235h1v1h-1zM1023 237h1v1h-1zM1064 200h1v1h-1zM1063 213h1v1h-1zM1041 298h1v1h-1zM1076 273h1v1h-1zM1056 200h1v1h-1zM1054 177h1v1h-1zM1020 245h1v1h-1zM1065 229h1v1h-1zM1050 181h1v1h-1zM1058 194h1v1h-1zM1048 211h1v1h-1zM1036 218h1v1h-1zM1049 213h1v1h-1zM1048 217h1v1h-1zM1068 238h1v1h-1zM1042 253h1v1h-1zM1046 223h1v1h-1zM1066 235h1v1h-1zM1020 207h1v1h-1zM1031 279h1v1h-1zM1053 297h1v1h-1zM1052 269h1v1h-1zM1063 308h1v1h-1zM1054 182h1v1h-1zM1054 239h1v1h-1zM1045 327h1v1h-1zM1029 185h1v1h-1zM1060 256h1v1h-1zM1043 251h1v1h-1zM1045 295h1v1h-1zM1058 243h1v1h-1zM1036 175h1v1h-1zM1057 182h1v1h-1zM1037 256h1v1h-1zM1021 283h1v1h-1zM1028 177h1v1h-1zM1064 179h1v1h-1zM1035 215h1v1h-1zM1015 249h1v1h-1zM1037 242h1v1h-1zM1077 274h1v1h-1zM1061 202h1v1h-1zM1036 182h1v1h-1zM1047 284h1v1h-1zM1051 252h1v1h-1zM1043 173h1v1h-1zM1039 195h1v1h-1zM1072 222h1v1h-1zM1054 189h1v1h-1zM1062 250h1v1h-1zM1028 183h1v1h-1zM1055 241h1v1h-1zM1064 277h1v1h-1zM1022 193h1v1h-1zM1030 292h1v1h-1zM1020 279h1v1h-1zM1028 186h1v1h-1zM1025 197h1v1h-1zM1052 244h1v1h-1zM1023 237h1v1h-1zM1024 259h1v1h-1zM1049 290h1v1h-1zM1062 307h1v1h-1zM1011 220h1v1h-1zM1065 208h1v1h-1zM1041 272h1v1h-1zM1070 291h1v1h-1zM1051 278h1v1h-1zM1062 312h1v1h-1zM1062 316h1v1h-1zM1029 185h1v1h-1zM1041 288h1v1h-1zM1040 213h1v1h-1zM1044 296h1v1h-1zM1040 272h1v1h-1zM1019 249h1v1h-1zM1061 169h1v1h-1zM1036 269h1v1h-1zM1062 236h1v1h-1zM1038 227h1v1h-1zM1031 266h1v1h-1zM1054 285h1v1h-1zM1028 200h1v1h-1zM1070 265h1v1h-1zM1041 180h1v1h-1zM1062 283h1v1h-1zM1023 230h1v1h-1zM1022 207h1v1h-1zM1069 251h1v1h-1zM1062 226h1v1h-1zM1065 287h1v1h-1zM1062 271h1v1h-1zM1046 259h1v1h-1zM1041 202h1v1h-1zM1054 185h1v1h-1zM1046 311h1v1h-1zM1066 244h1v1h-1zM1040 233h1v1h-1zM1039 317h1v1h-1zM1046 268h1v1h-1zM1031 256h1v1h-1zM1016 226h1v1h-1zM1033 292h1v1h-1zM1056 296h1v1h-1zM1023 193h1v1h-1zM1064 300h1v1h-1zM1043 195h1v1h-1zM1028 298h1v1h-1zM1070 250h1v1h-1zM1063 199h1v1h-1zM1057 300h1v1h-1zM1049 298h1v1h-1zM1053 177h1v1h-1zM1026 201h1v1h-1zM1041 275h1v1h-1zM1023 268h1v1h-1zM1049 190h1v1h-1zM1032 257h1v1h-1zM1057 305h1v1h-1zM1048 247h1v1h-1zM1056 300h1v1h-1zM1054 219h1v1h-1zM1066 213h1v1h-1zM1052 269h1v1h-1zM1060 205h1v1h-1zM1037 298h1v1h-1zM1018 183h1v1h-1zM1060 207h1v1h-1zM1034 216h1v1h-1zM1025 229h1v1h-1zM1027 262h1v1h-1zM1051 197h1v1h-1zM1036 165h1v1h-1zM1060 171h1v1h-1zM1046 232h1v1h-1zM1043 190h1v1h-1zM1029 190h1v1h-1zM1066 299h1v1h-1zM1059 273h1v1h-1zM1047 269h1v1h-1zM1044 241h1v1h-1zM1030 283h1v1h-1zM1042 186h1v1h-1zM1034 225h1v1h-1zM1071 274h1v1h-1zM1054 169h1v1h-1zM1052 180h1v1h-1zM1033 258h1v1h-1zM1030 235h1v1h-1zM1051 193h1v1h-1zM1036 183h1v1h-1zM1017 201h1v1h-1zM1026 283h1v1h-1zM1063 190h1v1h-1zM1044 295h1v1h-1zM1051 199h1v1h-1zM1039 226h1v1h-1zM1030 231h1v1h-1zM1041 251h1v1h-1zM1041 224h1v1h-1zM1042 304h1v1h-1zM1052 221h1v1h-1zM1032 286h1v1h-1zM1047 174h1v1h-1zM1041 285h1v1h-1zM1043 278h1v1h-1zM1033 210h1v1h-1zM1068 292h1v1h-1zM1051 311h1v1h-1zM1049 287h1v1h-1zM1066 287h1v1h-1zM1039 290h1v1h-1zM1052 199h1v1h-1zM1061 290h1v1h-1zM1022 219h1v1h-1zM1047 223h1v1h-1zM1036 221h1v1h-1zM1023 236h1v1h-1zM1021 212h1v1h-1zM1040 251h1v1h-1zM1023 232h1v1h-1zM1039 274h1v1h-1zM1066 266h1v1h-1zM1042 295h1v1h-1zM1061 239h1v1h-1zM1057 301h1v1h-1zM1045 256h1v1h-1zM1048 227h1v1h-1zM1049 191h1v1h-1zM1029 215h1v1h-1zM1033 281h1v1h-1zM1017 180h1v1h-1zM1049 300h1v1h-1zM1074 228h1v1h-1zM1050 184h1v1h-1zM1044 183h1v1h-1zM1063 220h1v1h-1zM1037 300h1v1h-1zM1033 230h1v1h-1zM1036 309h1v1h-1zM1013 199h1v1h-1zM1071 205h1v1h-1zM1076 220h1v1h-1zM1063 262h1v1h-1zM1060 241h1v1h-1zM1067 214h1v1h-1zM1076 203h1v1h-1zM1056 307h1v1h-1zM1069 259h1v1h-1zM1061 290h1v1h-1zM1036 254h1v1h-1zM1035 261h1v1h-1zM1063 272h1v1h-1zM1047 279h1v1h-1zM1020 264h1v1h-1zM1033 227h1v1h-1zM1046 225h1v1h-1zM1047 179h1v1h-1zM1026 254h1v1h-1zM1072 273h1v1h-1zM1068 256h1v1h-1zM1027 291h1v1h-1zM1047 249h1v1h-1zM1053 233h1v1h-1zM1057 299h1v1h-1zM1047 297h1v1h-1zM1062 170h1v1h-1zM1029 225h1v1h-1zM1050 211h1v1h-1zM1068 232h1v1h-1zM1019 194h1v1h-1zM1042 217h1v1h-1zM1027 244h1v1h-1zM1066 218h1v1h-1zM1056 259h1v1h-1zM1062 186h1v1h-1zM1051 310h1v1h-1zM1072 256h1v1h-1zM1051 240h1v1h-1zM1028 179h1v1h-1zM1050 209h1v1h-1zM1066 310h1v1h-1zM1046 208h1v1h-1zM1031 193h1v1h-1zM1063 271h1v1h-1zM1037 188h1v1h-1zM1021 243h1v1h-1zM1023 253h1v1h-1zM1059 270h1v1h-1zM1036 246h1v1h-1zM1056 215h1v1h-1zM1070 222h1v1h-1zM1027 284h1v1h-1zM1051 202h1v1h-1zM1042 304h1v1h-1zM1040 198h1v1h-1zM1062 227h1v1h-1zM1053 247h1v1h-1zM1041 302h1v1h-1zM1029 272h1v1h-1zM1063 206h1v1h-1zM1071 252h1v1h-1zM1058 180h1v1h-1zM1030 225h1v1h-1zM1019 225h1v1h-1zM1065 252h1v1h-1zM1036 210h1v1h-1zM1051 290h1v1h-1zM1033 280h1v1h-1zM1046 194h1v1h-1zM1019 181h1v1h-1zM1059 199h1v1h-1zM1057 229h1v1h-1zM1036 303h1v1h-1zM1036 185h1v1h-1zM1024 185h1v1h-1zM1059 247h1v1h-1zM1044 189h1v1h-1zM1050 181h1v1h-1zM1061 249h1v1h-1zM1031 285h1v1h-1zM1038 261h1v1h-1zM1053 242h1v1h-1zM1054 299h1v1h-1zM1033 173h1v1h-1zM1040 189h1v1h-1zM1054 173h1v1h-1zM1029 284h1v1h-1zM1029 276h1v1h-1zM1023 238h1v1h-1zM1058 238h1v1h-1zM1038 289h1v1h-1zM1052 281h1v1h-1zM1060 180h1v1h-1zM1029 299h1v1h-1zM1034 238h1v1h-1zM1059 201h1v1h-1zM1054 294h1v1h-1zM1049 196h1v1h-1zM1055 206h1v1h-1zM1060 213h1v1h-1zM1030 227h1v1h-1zM1024 260h1v1h-1zM1064 257h1v1h-1zM1033 191h1v1h-1zM1062 307h1v1h-1zM1050 263h1v1h-1zM1034 211h1v1h-1zM1028 267h1v1h-1zM1057 171h1v1h-1zM1048 239h1v1h-1zM1031 259h1v1h-1zM1062 177h1v1h-1zM1039 206h1v1h-1zM1028 197h1v1h-1zM1024 211h1v1h-1zM1057 248h1v1h-1zM1036 250h1v1h-1zM1056 234h1v1h-1zM1049 261h1v1h-1zM1049 277h1v1h-1zM1069 273h1v1h-1zM1055 289h1v1h-1zM1050 226h1v1h-1zM1040 264h1v1h-1zM1047 268h1v1h-1zM1056 262h1v1h-1zM1051 255h1v1h-1zM1027 189h1v1h-1zM1042 300h1v1h-1zM1066 246h1v1h-1zM1039 185h1v1h-1zM1040 257h1v1h-1zM1046 235h1v1h-1zM1048 227h1v1h-1zM1031 224h1v1h-1zM1054 249h1v1h-1zM1033 238h1v1h-1zM1035 225h1v1h-1zM1065 247h1v1h-1zM1035 212h1v1h-1zM1049 205h1v1h-1zM1061 210h1v1h-1zM1049 226h1v1h-1zM1055 234h1v1h-1zM1023 185h1v1h-1zM1034 285h1v1h-1zM1027 241h1v1h-1zM1042 178h1v1h-1zM1048 300h1v1h-1zM1042 296h1v1h-1zM1051 249h1v1h-1zM1033 188h1v1h-1zM1032 257h1v1h-1zM1054 240h1v1h-1zM1024 253h1v1h-1zM1039 304h1v1h-1zM1021 181h1v1h-1zM1031 179h1v1h-1zM1058 275h1v1h-1zM1049 306h1v1h-1zM1029 275h1v1h-1zM1051 283h1v1h-1zM1062 192h1v1h-1zM1034 237h1v1h-1zM1029 273h1v1h-1zM1036 271h1v1h-1zM1064 241h1v1h-1zM1030 165h1v1h-1zM1039 273h1v1h-1zM1045 246h1v1h-1zM1048 278h1v1h-1zM1052 202h1v1h-1zM1034 279h1v1h-1zM1064 203h1v1h-1zM1060 305h1v1h-1zM1028 274h1v1h-1zM1023 205h1v1h-1zM1042 245h1v1h-1zM1045 200h1v1h-1zM1051 246h1v1h-1zM1053 252h1v1h-1zM1061 305h1v1h-1zM1025 263h1v1h-1zM1056 264h1v1h-1zM1037 252h1v1h-1zM1036 273h1v1h-1zM1061 226h1v1h-1zM1066 282h1v1h-1zM1037 226h1v1h-1zM1052 280h1v1h-1zM1044 227h1v1h-1zM1074 313h1v1h-1zM1068 282h1v1h-1zM1057 176h1v1h-1zM1047 288h1v1h-1zM1058 179h1v1h-1zM1029 210h1v1h-1zM1047 172h1v1h-1zM1047 239h1v1h-1zM1055 295h1v1h-1zM1021 264h1v1h-1zM1062 299h1v1h-1zM1030 264h1v1h-1zM1051 231h1v1h-1zM1023 192h1v1h-1zM1065 244h1v1h-1zM1066 253h1v1h-1zM1067 222h1v1h-1zM1036 271h1v1h-1zM1040 221h1v1h-1zM1057 191h1v1h-1zM1066 219h1v1h-1zM1061 291h1v1h-1zM1033 294h1v1h-1zM1023 218h1v1h-1zM1050 282h1v1h-1zM1055 287h1v1h-1zM1063 199h1v1h-1zM1074 233h1v1h-1zM1059 220h1v1h-1zM1061 307h1v1h-1zM1017 237h1v1h-1zM1032 180h1v1h-1zM1046 212h1v1h-1zM1062 279h1v1h-1zM1037 187h1v1h-1zM1042 274h1v1h-1zM1051 177h1v1h-1zM1030 179h1v1h-1zM1063 194h1v1h-1zM1040 246h1v1h-1zM1047 191h1v1h-1zM1054 176h1v1h-1zM1054 236h1v1h-1zM1021 211h1v1h-1zM1042 188h1v1h-1zM1031 294h1v1h-1zM1051 227h1v1h-1zM1041 217h1v1h-1zM1031 229h1v1h-1zM1078 275h1v1h-1zM1066 255h1v1h-1zM1023 217h1v1h-1zM1064 236h1v1h-1zM1028 282h1v1h-1zM1045 271h1v1h-1zM1030 239h1v1h-1zM1054 281h1v1h-1zM1069 285h1v1h-1zM1027 190h1v1h-1zM1022 210h1v1h-1zM1069 259h1v1h-1zM1055 217h1v1h-1zM1028 236h1v1h-1zM1039 180h1v1h-1zM1053 187h1v1h-1zM1038 257h1v1h-1zM1045 275h1v1h-1zM1027 287h1v1h-1zM1031 293h1v1h-1zM1040 280h1v1h-1zM1060 308h1v1h-1zM1068 277h1v1h-1zM1034 313h1v1h-1zM1056 268h1v1h-1zM1043 248h1v1h-1zM1066 262h1v1h-1zM1031 219h1v1h-1zM1054 168h1v1h-1zM1021 248h1v1h-1zM1036 260h1v1h-1zM1030 221h1v1h-1zM1049 181h1v1h-1zM1049 286h1v1h-1zM1016 214h1v1h-1zM1052 236h1v1h-1zM1050 253h1v1h-1zM1030 243h1v1h-1zM1059 233h1v1h-1zM1054 206h1v1h-1zM1053 191h1v1h-1zM1057 260h1v1h-1zM1030 220h1v1h-1zM1041 203h1v1h-1zM1039 303h1v1h-1zM1065 219h1v1h-1zM1039 230h1v1h-1zM1028 264h1v1h-1zM1068 236h1v1h-1zM1020 217h1v1h-1zM1051 187h1v1h-1zM1051 254h1v1h-1zM1028 275h1v1h-1zM1035 197h1v1h-1zM1040 314h1v1h-1zM1045 189h1v1h-1zM1029 248h1v1h-1zM1069 263h1v1h-1zM1060 177h1v1h-1zM1025 260h1v1h-1zM1048 246h1v1h-1zM1041 248h1v1h-1zM1049 280h1v1h-1zM1029 193h1v1h-1zM1036 300h1v1h-1zM1027 239h1v1h-1zM1029 245h1v1h-1zM1059 256h1v1h-1zM1030 297h1v1h-1zM1047 208h1v1h-1zM1026 249h1v1h-1zM1056 177h1v1h-1zM1064 315h1v1h-1zM1037 168h1v1h-1zM1040 180h1v1h-1zM1077 240h1v1h-1zM1057 243h1v1h-1zM1046 274h1v1h-1zM1054 193h1v1h-1zM1048 195h1v1h-1zM1054 297h1v1h-1zM1054 275h1v1h-1zM1032 234h1v1h-1zM1053 192h1v1h-1zM1054 264h1v1h-1zM1019 224h1v1h-1zM1054 270h1v1h-1zM1044 251h1v1h-1zM1059 314h1v1h-1zM1013 272h1v1h-1zM1072 202h1v1h-1zM1053 190h1v1h-1zM1020 264h1v1h-1zM1066 304h1v1h-1zM1067 208h1v1h-1zM1062 315h1v1h-1zM1031 304h1v1h-1zM1040 195h1v1h-1zM1062 200h1v1h-1zM1035 172h1v1h-1zM1066 246h1v1h-1zM1045 279h1v1h-1zM1057 305h1v1h-1zM1051 307h1v1h-1zM1023 273h1v1h-1zM1020 191h1v1h-1zM1039 181h1v1h-1zM1069 203h1v1h-1zM1053 263h1v1h-1zM1047 227h1v1h-1zM1047 302h1v1h-1zM1049 179h1v1h-1zM1025 233h1v1h-1zM1057 207h1v1h-1zM1033 277h1v1h-1zM1046 249h1v1h-1zM1029 239h1v1h-1zM1044 222h1v1h-1zM1064 203h1v1h-1zM1046 235h1v1h-1zM1026 199h1v1h-1zM1040 234h1v1h-1zM1030 197h1v1h-1zM1061 213h1v1h-1zM1044 298h1v1h-1zM1060 248h1v1h-1zM1039 179h1v1h-1zM1056 170h1v1h-1zM1062 199h1v1h-1zM1032 183h1v1h-1zM1039 308h1v1h-1zM1041 316h1v1h-1zM1053 171h1v1h-1zM1065 313h1v1h-1zM1073 261h1v1h-1zM1019 282h1v1h-1zM1058 299h1v1h-1zM1062 226h1v1h-1zM1035 228h1v1h-1zM1019 222h1v1h-1zM1030 309h1v1h-1zM1019 209h1v1h-1zM1037 228h1v1h-1zM1070 249h1v1h-1zM1063 207h1v1h-1zM1075 252h1v1h-1zM1029 200h1v1h-1zM1038 280h1v1h-1zM1062 219h1v1h-1zM1028 172h1v1h-1zM1047 182h1v1h-1zM1025 207h1v1h-1zM1068 270h1v1h-1zM1041 262h1v1h-1zM1068 202h1v1h-1zM1051 308h1v1h-1zM1050 279h1v1h-1zM1028 190h1v1h-1zM1058 177h1v1h-1zM1023 257h1v1h-1zM1045 262h1v1h-1zM1030 230h1v1h-1zM1049 280h1v1h-1zM1045 213h1v1h-1zM1045 266h1v1h-1zM1053 262h1v1h-1zM1049 255h1v1h-1zM1058 292h1v1h-1zM1051 205h1v1h-1zM1061 296h1v1h-1zM1075 289h1v1h-1zM1039 298h1v1h-1zM1050 182h1v1h-1zM1013 254h1v1h-1zM1067 204h1v1h-1zM1035 238h1v1h-1zM1060 280h1v1h-1zM1074 268h1v1h-1zM1064 219h1v1h-1zM1042 260h1v1h-1zM1057 208h1v1h-1zM1068 189h1v1h-1zM1028 276h1v1h-1zM1021 250h1v1h-1zM1044 191h1v1h-1zM1067 204h1v1h-1zM1039 312h1v1h-1zM1057 297h1v1h-1zM1042 316h1v1h-1zM1068 286h1v1h-1zM1039 280h1v1h-1zM1019 258h1v1h-1zM1040 240h1v1h-1zM1056 302h1v1h-1zM1048 307h1v1h-1zM1041 295h1v1h-1zM1044 196h1v1h-1zM1048 302h1v1h-1zM1055 281h1v1h-1zM1040 245h1v1h-1zM1024 273h1v1h-1zM1023 172h1v1h-1zM1031 290h1v1h-1zM1068 261h1v1h-1zM1016 208h1v1h-1zM1041 256h1v1h-1zM1043 230h1v1h-1zM1035 311h1v1h-1zM1052 277h1v1h-1zM1049 239h1v1h-1zM1037 287h1v1h-1zM1043 287h1v1h-1zM1024 232h1v1h-1zM1062 269h1v1h-1zM1041 175h1v1h-1zM1044 247h1v1h-1zM1029 285h1v1h-1zM1063 215h1v1h-1zM1057 304h1v1h-1zM1053 248h1v1h-1zM1049 264h1v1h-1zM1023 227h1v1h-1zM1054 222h1v1h-1zM1065 244h1v1h-1zM1026 245h1v1h-1zM1072 220h1v1h-1zM1059 247h1v1h-1zM1043 237h1v1h-1zM1047 264h1v1h-1zM1054 200h1v1h-1zM1045 306h1v1h-1zM1034 186h1v1h-1zM1057 252h1v1h-1zM1046 314h1v1h-1zM1067 247h1v1h-1zM1053 226h1v1h-1zM1020 212h1v1h-1zM1060 256h1v1h-1zM1028 252h1v1h-1zM1068 237h1v1h-1zM1043 275h1v1h-1zM1065 300h1v1h-1zM1048 259h1v1h-1zM1070 260h1v1h-1zM1060 290h1v1h-1zM1039 270h1v1h-1zM1037 264h1v1h-1zM1047 199h1v1h-1zM1040 262h1v1h-1zM1077 265h1v1h-1zM1043 307h1v1h-1zM1026 185h1v1h-1zM1046 249h1v1h-1zM1052 259h1v1h-1zM1030 278h1v1h-1zM1033 174h1v1h-1zM1054 304h1v1h-1zM1058 310h1v1h-1zM1069 220h1v1h-1zM1068 229h1v1h-1zM1042 185h1v1h-1zM1062 223h1v1h-1zM1048 177h1v1h-1zM1046 176h1v1h-1zM1047 222h1v1h-1zM1045 189h1v1h-1zM1072 271h1v1h-1zM1042 185h1v1h-1zM1043 204h1v1h-1zM1030 261h1v1h-1zM1063 245h1v1h-1zM1038 178h1v1h-1zM1030 291h1v1h-1zM1037 222h1v1h-1zM1055 292h1v1h-1zM1072 253h1v1h-1zM1037 297h1v1h-1zM1044 239h1v1h-1zM1057 239h1v1h-1zM1038 211h1v1h-1zM1071 220h1v1h-1zM1023 206h1v1h-1zM1054 268h1v1h-1zM1018 230h1v1h-1zM1059 187h1v1h-1zM1028 223h1v1h-1zM1034 241h1v1h-1zM1048 291h1v1h-1zM1017 187h1v1h-1zM1062 216h1v1h-1zM1073 268h1v1h-1zM1060 188h1v1h-1zM1050 242h1v1h-1zM1044 291h1v1h-1zM1036 296h1v1h-1zM1021 222h1v1h-1zM1036 237h1v1h-1zM1039 286h1v1h-1zM1045 288h1v1h-1zM1042 296h1v1h-1zM1037 234h1v1h-1zM1049 181h1v1h-1zM1030 189h1v1h-1zM1042 245h1v1h-1zM1066 302h1v1h-1zM1046 267h1v1h-1zM1059 241h1v1h-1zM1058 289h1v1h-1zM1071 281h1v1h-1zM1054 215h1v1h-1zM1042 247h1v1h-1zM1025 263h1v1h-1zM1067 276h1v1h-1zM1072 281h1v1h-1zM1021 194h1v1h-1zM1014 199h1v1h-1zM1056 250h1v1h-1zM1057 172h1v1h-1zM1069 295h1v1h-1zM1041 202h1v1h-1zM1032 187h1v1h-1zM1024 229h1v1h-1zM1045 256h1v1h-1zM1049 289h1v1h-1zM1043 243h1v1h-1zM1077 270h1v1h-1zM1051 273h1v1h-1zM1067 238h1v1h-1zM1035 255h1v1h-1zM1048 245h1v1h-1zM1032 279h1v1h-1zM1039 177h1v1h-1zM1071 225h1v1h-1zM1028 187h1v1h-1zM1027 256h1v1h-1zM1022 262h1v1h-1zM1041 275h1v1h-1zM1040 233h1v1h-1zM1053 288h1v1h-1zM1032 218h1v1h-1zM1063 321h1v1h-1zM1024 261h1v1h-1zM1058 269h1v1h-1zM1046 258h1v1h-1zM1027 178h1v1h-1zM1065 236h1v1h-1zM1053 214h1v1h-1zM1068 215h1v1h-1zM1052 308h1v1h-1zM1066 301h1v1h-1zM1055 168h1v1h-1zM1047 259h1v1h-1zM1023 241h1v1h-1zM1025 224h1v1h-1zM1036 207h1v1h-1zM1071 209h1v1h-1zM1032 310h1v1h-1zM1051 308h1v1h-1zM1053 174h1v1h-1zM1018 193h1v1h-1zM1064 207h1v1h-1zM1048 304h1v1h-1zM1024 219h1v1h-1zM1038 250h1v1h-1zM1040 245h1v1h-1zM1058 309h1v1h-1zM1055 278h1v1h-1zM1060 227h1v1h-1zM1070 252h1v1h-1zM1046 238h1v1h-1zM1063 238h1v1h-1zM1034 194h1v1h-1zM1048 202h1v1h-1zM1039 256h1v1h-1zM1041 179h1v1h-1zM1052 191h1v1h-1zM1043 198h1v1h-1zM1040 195h1v1h-1zM1047 308h1v1h-1zM1046 266h1v1h-1zM1064 285h1v1h-1zM1033 174h1v1h-1zM1057 196h1v1h-1zM1023 243h1v1h-1zM1029 191h1v1h-1zM1066 286h1v1h-1zM1042 195h1v1h-1zM1054 296h1v1h-1zM1057 233h1v1h-1zM1061 311h1v1h-1zM1029 268h1v1h-1zM1061 288h1v1h-1zM1037 188h1v1h-1zM1050 286h1v1h-1zM1024 246h1v1h-1zM1065 267h1v1h-1zM1047 190h1v1h-1zM1048 185h1v1h-1zM1025 246h1v1h-1zM1030 260h1v1h-1zM1036 272h1v1h-1zM1023 202h1v1h-1zM1048 189h1v1h-1zM1061 197h1v1h-1zM1055 252h1v1h-1zM1044 202h1v1h-1zM1061 258h1v1h-1zM1050 189h1v1h-1zM1028 287h1v1h-1zM1067 290h1v1h-1zM1033 295h1v1h-1zM1047 217h1v1h-1zM1049 181h1v1h-1zM1042 227h1v1h-1zM1029 271h1v1h-1zM1070 278h1v1h-1zM1035 236h1v1h-1zM1087 258h1v1h-1zM1059 260h1v1h-1zM1058 284h1v1h-1zM1046 210h1v1h-1zM1027 263h1v1h-1zM1047 232h1v1h-1zM1048 270h1v1h-1zM1055 248h1v1h-1zM1035 314h1v1h-1zM1026 243h1v1h-1zM1031 265h1v1h-1zM1038 301h1v1h-1zM1030 302h1v1h-1zM1062 236h1v1h-1zM1067 188h1v1h-1zM1024 188h1v1h-1zM1039 255h1v1h-1zM1045 306h1v1h-1zM1057 216h1v1h-1zM1061 221h1v1h-1zM1076 211h1v1h-1zM1065 258h1v1h-1zM1048 171h1v1h-1zM1027 200h1v1h-1zM1024 278h1v1h-1zM1065 176h1v1h-1zM1017 183h1v1h-1zM1066 295h1v1h-1zM1052 246h1v1h-1zM1044 197h1v1h-1zM1058 272h1v1h-1zM1024 248h1v1h-1zM1032 162h1v1h-1zM1037 204h1v1h-1zM1080 218h1v1h-1zM1045 311h1v1h-1zM1061 230h1v1h-1zM1044 205h1v1h-1zM1068 190h1v1h-1zM1055 199h1v1h-1zM1053 191h1v1h-1zM1050 220h1v1h-1zM1068 202h1v1h-1zM1026 198h1v1h-1zM1072 279h1v1h-1zM1061 199h1v1h-1zM1038 232h1v1h-1zM1068 295h1v1h-1zM1078 280h1v1h-1zM1054 219h1v1h-1zM1053 223h1v1h-1zM1057 218h1v1h-1zM1031 201h1v1h-1zM1066 186h1v1h-1zM1052 285h1v1h-1zM1061 224h1v1h-1zM1041 196h1v1h-1zM1035 192h1v1h-1zM1028 247h1v1h-1zM1038 186h1v1h-1zM1055 190h1v1h-1zM1044 175h1v1h-1zM1021 261h1v1h-1zM1044 211h1v1h-1zM1023 188h1v1h-1zM1031 269h1v1h-1zM1064 252h1v1h-1zM1032 207h1v1h-1zM1050 291h1v1h-1zM1038 204h1v1h-1zM1026 249h1v1h-1zM1064 225h1v1h-1zM1067 291h1v1h-1zM1057 186h1v1h-1zM1064 279h1v1h-1zM1063 262h1v1h-1zM1036 250h1v1h-1zM1069 235h1v1h-1zM1056 224h1v1h-1zM1053 259h1v1h-1zM1049 163h1v1h-1zM1081 287h1v1h-1zM1028 260h1v1h-1zM1034 189h1v1h-1zM1030 303h1v1h-1zM1065 300h1v1h-1zM1069 226h1v1h-1zM1069 226h1v1h-1zM1039 266h1v1h-1zM1043 184h1v1h-1zM1034 247h1v1h-1zM1034 199h1v1h-1zM1021 202h1v1h-1zM1023 211h1v1h-1zM1066 248h1v1h-1zM1056 230h1v1h-1zM1060 303h1v1h-1zM1029 178h1v1h-1zM1063 193h1v1h-1zM1048 232h1v1h-1zM1041 178h1v1h-1zM1057 310h1v1h-1zM1051 261h1v1h-1zM1056 313h1v1h-1zM1032 293h1v1h-1zM1041 199h1v1h-1zM1051 300h1v1h-1zM1019 212h1v1h-1zM1042 227h1v1h-1zM1031 188h1v1h-1zM1061 243h1v1h-1zM1054 244h1v1h-1zM1046 189h1v1h-1zM1048 177h1v1h-1zM1046 292h1v1h-1zM1027 263h1v1h-1zM1048 235h1v1h-1zM1062 307h1v1h-1zM1053 304h1v1h-1zM1038 230h1v1h-1zM1048 277h1v1h-1zM1053 276h1v1h-1zM1022 208h1v1h-1zM1063 248h1v1h-1zM1042 237h1v1h-1zM1028 213h1v1h-1zM1070 189h1v1h-1zM1058 202h1v1h-1zM1038 291h1v1h-1zM1068 309h1v1h-1zM1041 263h1v1h-1zM1069 277h1v1h-1zM1030 222h1v1h-1zM1073 253h1v1h-1zM1059 280h1v1h-1zM1038 287h1v1h-1zM1038 201h1v1h-1zM1044 271h1v1h-1zM1027 213h1v1h-1zM1051 294h1v1h-1zM1052 203h1v1h-1zM1052 181h1v1h-1zM1046 200h1v1h-1zM1032 222h1v1h-1zM1051 299h1v1h-1zM1023 215h1v1h-1zM1036 171h1v1h-1zM1055 263h1v1h-1zM1056 278h1v1h-1zM1052 259h1v1h-1zM1054 176h1v1h-1zM1069 217h1v1h-1zM1062 273h1v1h-1zM1054 288h1v1h-1zM1036 249h1v1h-1zM1041 313h1v1h-1zM1027 283h1v1h-1zM1053 265h1v1h-1zM1069 265h1v1h-1zM1070 182h1v1h-1zM1065 287h1v1h-1zM1072 290h1v1h-1zM1035 301h1v1h-1zM1066 286h1v1h-1zM1061 282h1v1h-1zM1038 307h1v1h-1zM1026 190h1v1h-1zM1046 269h1v1h-1zM1055 236h1v1h-1zM1036 304h1v1h-1zM1076 278h1v1h-1zM1050 185h1v1h-1zM1048 236h1v1h-1zM1036 187h1v1h-1zM1049 177h1v1h-1zM1034 294h1v1h-1zM1018 241h1v1h-1zM1029 268h1v1h-1zM1051 242h1v1h-1zM1056 278h1v1h-1zM1036 235h1v1h-1zM1062 268h1v1h-1zM1052 289h1v1h-1zM1024 285h1v1h-1zM1054 298h1v1h-1zM1059 219h1v1h-1zM1051 293h1v1h-1zM1070 296h1v1h-1zM1039 175h1v1h-1zM1061 266h1v1h-1zM1025 214h1v1h-1zM1044 215h1v1h-1zM1039 289h1v1h-1zM1071 246h1v1h-1zM1040 174h1v1h-1zM1048 302h1v1h-1zM1057 263h1v1h-1zM1041 199h1v1h-1zM1072 224h1v1h-1zM1075 292h1v1h-1zM1031 172h1v1h-1zM1026 273h1v1h-1zM1025 215h1v1h-1zM1037 240h1v1h-1zM1031 233h1v1h-1zM1063 173h1v1h-1zM1067 234h1v1h-1zM1039 277h1v1h-1zM1037 237h1v1h-1zM1026 247h1v1h-1zM1058 275h1v1h-1zM1061 209h1v1h-1zM1036 266h1v1h-1zM1039 297h1v1h-1zM1056 250h1v1h-1zM1041 210h1v1h-1zM1027 181h1v1h-1zM1049 189h1v1h-1zM1024 266h1v1h-1zM1047 247h1v1h-1zM1057 298h1v1h-1zM1041 159h1v1h-1zM1065 220h1v1h-1zM1048 284h1v1h-1zM1069 218h1v1h-1zM1036 211h1v1h-1zM1030 268h1v1h-1zM1055 300h1v1h-1zM1054 195h1v1h-1zM1033 283h1v1h-1zM1052 264h1v1h-1zM1048 300h1v1h-1zM1032 182h1v1h-1zM1065 289h1v1h-1zM1034 217h1v1h-1zM1022 228h1v1h-1zM1047 176h1v1h-1zM1032 288h1v1h-1zM1061 183h1v1h-1zM1034 200h1v1h-1zM1042 216h1v1h-1zM1055 185h1v1h-1zM1037 205h1v1h-1zM1063 301h1v1h-1zM1051 204h1v1h-1zM1047 179h1v1h-1zM1055 259h1v1h-1zM1036 239h1v1h-1zM1061 274h1v1h-1zM1044 201h1v1h-1zM1043 173h1v1h-1zM1065 300h1v1h-1zM1067 316h1v1h-1zM1066 212h1v1h-1zM1065 243h1v1h-1zM1035 237h1v1h-1zM1030 302h1v1h-1zM1034 267h1v1h-1zM1044 227h1v1h-1zM1031 188h1v1h-1zM1064 286h1v1h-1zM1027 224h1v1h-1zM1054 296h1v1h-1zM1055 190h1v1h-1zM1039 219h1v1h-1zM1070 284h1v1h-1zM1051 200h1v1h-1zM1033 236h1v1h-1zM1024 226h1v1h-1zM1046 216h1v1h-1zM1074 304h1v1h-1zM1050 238h1v1h-1zM1067 286h1v1h-1zM1040 184h1v1h-1zM1050 208h1v1h-1zM1025 286h1v1h-1zM1058 205h1v1h-1zM1021 235h1v1h-1zM1070 246h1v1h-1zM1054 174h1v1h-1zM1059 208h1v1h-1zM1013 221h1v1h-1zM1046 237h1v1h-1zM1030 213h1v1h-1zM1028 224h1v1h-1zM1037 252h1v1h-1zM1077 261h1v1h-1zM1045 193h1v1h-1zM1053 253h1v1h-1zM1038 282h1v1h-1zM1038 259h1v1h-1zM1024 267h1v1h-1zM1049 239h1v1h-1zM1036 288h1v1h-1zM1030 222h1v1h-1zM1035 188h1v1h-1zM1031 312h1v1h-1zM1051 295h1v1h-1zM1059 228h1v1h-1zM1066 293h1v1h-1zM1074 205h1v1h-1zM1035 310h1v1h-1zM1061 180h1v1h-1zM1030 190h1v1h-1zM1026 181h1v1h-1zM1048 314h1v1h-1zM1067 252h1v1h-1zM1074 304h1v1h-1zM1054 221h1v1h-1zM1033 177h1v1h-1zM1065 301h1v1h-1zM1052 212h1v1h-1zM1046 211h1v1h-1zM1023 228h1v1h-1zM1032 206h1v1h-1zM1065 303h1v1h-1zM1056 214h1v1h-1zM1033 223h1v1h-1zM1026 238h1v1h-1zM1069 242h1v1h-1zM1038 254h1v1h-1zM1054 177h1v1h-1zM1038 195h1v1h-1zM1030 276h1v1h-1zM1028 278h1v1h-1zM1030 249h1v1h-1zM1041 305h1v1h-1zM1072 215h1v1h-1zM1049 168h1v1h-1zM1021 217h1v1h-1zM1074 301h1v1h-1zM1029 195h1v1h-1zM1073 304h1v1h-1zM1052 249h1v1h-1zM1052 237h1v1h-1zM1069 279h1v1h-1zM1029 279h1v1h-1zM1052 304h1v1h-1zM1059 205h1v1h-1zM1047 304h1v1h-1zM1069 205h1v1h-1zM1041 290h1v1h-1zM1009 220h1v1h-1zM1025 278h1v1h-1zM1024 220h1v1h-1zM1029 240h1v1h-1zM1038 206h1v1h-1zM1026 193h1v1h-1zM1026 222h1v1h-1zM1077 243h1v1h-1zM1032 273h1v1h-1zM1065 304h1v1h-1zM1043 282h1v1h-1zM1044 253h1v1h-1zM1043 285h1v1h-1zM1038 205h1v1h-1zM1054 229h1v1h-1zM1027 189h1v1h-1zM1060 323h1v1h-1zM1045 295h1v1h-1zM1053 246h1v1h-1zM1053 295h1v1h-1zM1059 196h1v1h-1zM1071 273h1v1h-1zM1044 240h1v1h-1zM1026 190h1v1h-1zM1047 245h1v1h-1zM1062 296h1v1h-1zM1062 302h1v1h-1zM1050 277h1v1h-1zM1027 210h1v1h-1zM1056 247h1v1h-1zM1049 199h1v1h-1zM1036 303h1v1h-1zM1047 300h1v1h-1zM1047 262h1v1h-1zM1045 204h1v1h-1zM1017 195h1v1h-1zM1038 256h1v1h-1zM1055 293h1v1h-1zM1051 206h1v1h-1zM1028 220h1v1h-1zM1023 253h1v1h-1zM1061 252h1v1h-1zM1063 303h1v1h-1zM1036 246h1v1h-1zM1031 221h1v1h-1zM1053 179h1v1h-1zM1026 284h1v1h-1zM1028 265h1v1h-1zM1066 180h1v1h-1zM1060 194h1v1h-1zM1038 211h1v1h-1zM1043 262h1v1h-1zM1031 273h1v1h-1zM1062 176h1v1h-1zM1058 249h1v1h-1zM1052 298h1v1h-1zM1039 209h1v1h-1zM1035 295h1v1h-1zM1045 223h1v1h-1zM1058 301h1v1h-1zM1057 298h1v1h-1zM1045 171h1v1h-1zM1040 283h1v1h-1zM1040 197h1v1h-1zM1024 247h1v1h-1zM1048 306h1v1h-1zM1053 200h1v1h-1zM1048 285h1v1h-1zM1028 211h1v1h-1zM1019 234h1v1h-1zM1052 199h1v1h-1zM1029 192h1v1h-1zM1034 278h1v1h-1zM1052 281h1v1h-1zM1052 270h1v1h-1zM1045 244h1v1h-1zM1031 262h1v1h-1zM1028 267h1v1h-1zM1039 236h1v1h-1zM1044 212h1v1h-1zM1057 186h1v1h-1zM1052 213h1v1h-1zM1028 177h1v1h-1zM1068 261h1v1h-1zM1035 298h1v1h-1zM1052 177h1v1h-1zM1033 186h1v1h-1zM1060 266h1v1h-1zM1020 253h1v1h-1zM1031 193h1v1h-1zM1042 151h1v1h-1zM1024 195h1v1h-1zM1051 189h1v1h-1zM1059 201h1v1h-1zM1026 258h1v1h-1zM1041 231h1v1h-1zM1036 186h1v1h-1zM1046 289h1v1h-1zM1036 286h1v1h-1zM1066 220h1v1h-1zM1039 290h1v1h-1zM1047 308h1v1h-1zM1061 267h1v1h-1zM1029 263h1v1h-1zM1072 241h1v1h-1zM1048 180h1v1h-1zM1038 189h1v1h-1zM1048 218h1v1h-1zM1050 184h1v1h-1zM1052 176h1v1h-1zM1044 303h1v1h-1zM1050 282h1v1h-1zM1027 190h1v1h-1zM1049 251h1v1h-1zM1052 198h1v1h-1zM1062 260h1v1h-1zM1060 220h1v1h-1zM1028 270h1v1h-1zM1066 211h1v1h-1zM1051 260h1v1h-1zM1066 228h1v1h-1zM1030 246h1v1h-1zM1026 189h1v1h-1zM1038 225h1v1h-1zM1049 198h1v1h-1zM1028 203h1v1h-1zM1059 195h1v1h-1zM1064 278h1v1h-1zM1029 256h1v1h-1zM1018 266h1v1h-1zM1060 237h1v1h-1zM1024 199h1v1h-1zM1074 303h1v1h-1zM1044 272h1v1h-1zM1050 194h1v1h-1zM1028 239h1v1h-1zM1073 266h1v1h-1zM1035 219h1v1h-1zM1041 200h1v1h-1zM1054 283h1v1h-1zM1038 292h1v1h-1zM1031 201h1v1h-1zM1054 213h1v1h-1zM1075 228h1v1h-1zM1026 206h1v1h-1zM1035 301h1v1h-1zM1056 236h1v1h-1zM1059 249h1v1h-1zM1045 228h1v1h-1zM1026 235h1v1h-1zM1030 274h1v1h-1zM1060 202h1v1h-1zM1057 217h1v1h-1zM1064 199h1v1h-1zM1032 222h1v1h-1zM1066 292h1v1h-1zM1035 265h1v1h-1zM1062 196h1v1h-1zM1037 196h1v1h-1zM1040 260h1v1h-1zM1066 291h1v1h-1zM1071 302h1v1h-1zM1058 206h1v1h-1zM1036 235h1v1h-1zM1030 167h1v1h-1zM1040 293h1v1h-1zM1071 270h1v1h-1zM1045 216h1v1h-1zM1062 277h1v1h-1zM1051 295h1v1h-1zM1032 194h1v1h-1zM1036 182h1v1h-1zM1031 199h1v1h-1zM1063 241h1v1h-1zM1028 277h1v1h-1zM1055 301h1v1h-1zM1047 257h1v1h-1zM1050 281h1v1h-1zM1068 225h1v1h-1zM1059 202h1v1h-1zM1064 184h1v1h-1zM1041 179h1v1h-1zM1037 283h1v1h-1zM1066 207h1v1h-1zM1054 291h1v1h-1zM1035 294h1v1h-1zM1062 233h1v1h-1zM1061 209h1v1h-1zM1065 248h1v1h-1zM1051 209h1v1h-1zM1065 241h1v1h-1zM1053 287h1v1h-1zM1037 192h1v1h-1zM1047 290h1v1h-1zM1028 197h1v1h-1zM1045 244h1v1h-1zM1022 199h1v1h-1zM1023 159h1v1h-1zM1020 276h1v1h-1zM1076 241h1v1h-1zM1024 262h1v1h-1zM1034 304h1v1h-1zM1041 186h1v1h-1zM1054 272h1v1h-1zM1057 290h1v1h-1zM1034 267h1v1h-1zM1028 227h1v1h-1zM1067 246h1v1h-1zM1064 292h1v1h-1zM1056 202h1v1h-1zM1034 250h1v1h-1zM1024 195h1v1h-1zM1065 242h1v1h-1zM1033 304h1v1h-1zM1038 232h1v1h-1zM1058 206h1v1h-1zM1056 224h1v1h-1zM1070 222h1v1h-1zM1015 205h1v1h-1zM1036 254h1v1h-1zM1045 170h1v1h-1zM1067 283h1v1h-1zM1034 281h1v1h-1zM1041 294h1v1h-1zM1064 278h1v1h-1zM1033 223h1v1h-1zM1022 275h1v1h-1zM1071 235h1v1h-1zM1038 246h1v1h-1zM1029 238h1v1h-1zM1034 190h1v1h-1zM1069 247h1v1h-1zM1041 293h1v1h-1zM1032 193h1v1h-1zM1018 279h1v1h-1zM1063 292h1v1h-1zM1056 215h1v1h-1zM1035 187h1v1h-1zM1025 237h1v1h-1zM1014 196h1v1h-1zM1067 306h1v1h-1zM1073 293h1v1h-1zM1061 320h1v1h-1zM1055 224h1v1h-1zM1065 260h1v1h-1zM1042 301h1v1h-1zM1067 245h1v1h-1zM1034 300h1v1h-1zM1054 251h1v1h-1zM1061 279h1v1h-1zM1025 194h1v1h-1zM1033 210h1v1h-1zM1047 182h1v1h-1zM1067 287h1v1h-1zM1066 289h1v1h-1zM1022 189h1v1h-1zM1014 199h1v1h-1zM1066 263h1v1h-1zM1069 295h1v1h-1zM1031 216h1v1h-1zM1035 280h1v1h-1zM1025 263h1v1h-1zM1037 304h1v1h-1zM1025 273h1v1h-1zM1030 211h1v1h-1zM1023 174h1v1h-1zM1033 180h1v1h-1zM1049 274h1v1h-1zM1041 211h1v1h-1zM1049 300h1v1h-1zM1033 312h1v1h-1zM1048 300h1v1h-1zM1076 270h1v1h-1zM1023 271h1v1h-1zM1076 265h1v1h-1zM1049 236h1v1h-1zM1031 265h1v1h-1zM1070 273h1v1h-1zM1030 183h1v1h-1zM1040 273h1v1h-1zM1061 279h1v1h-1zM1046 300h1v1h-1zM1044 176h1v1h-1zM1022 292h1v1h-1zM1070 231h1v1h-1zM1021 176h1v1h-1zM1061 243h1v1h-1zM1039 239h1v1h-1zM1048 209h1v1h-1zM1058 263h1v1h-1zM1035 271h1v1h-1zM1045 257h1v1h-1zM1065 190h1v1h-1zM1067 276h1v1h-1zM1026 169h1v1h-1zM1050 171h1v1h-1zM1027 186h1v1h-1zM1044 251h1v1h-1zM1040 222h1v1h-1zM1045 268h1v1h-1zM1019 175h1v1h-1zM1017 225h1v1h-1zM1071 224h1v1h-1zM1036 176h1v1h-1zM1052 195h1v1h-1zM1027 215h1v1h-1zM1053 196h1v1h-1zM1045 240h1v1h-1zM1039 191h1v1h-1zM1062 181h1v1h-1zM1031 180h1v1h-1zM1054 249h1v1h-1zM1045 274h1v1h-1zM1057 271h1v1h-1zM1051 283h1v1h-1zM1032 235h1v1h-1zM1033 283h1v1h-1zM1041 242h1v1h-1zM1019 235h1v1h-1zM1066 262h1v1h-1zM1031 171h1v1h-1zM1061 256h1v1h-1zM1043 194h1v1h-1zM1029 290h1v1h-1zM1042 238h1v1h-1zM1018 206h1v1h-1zM1058 191h1v1h-1zM1013 193h1v1h-1zM1036 241h1v1h-1zM1045 276h1v1h-1zM1025 210h1v1h-1zM1042 212h1v1h-1zM1032 195h1v1h-1zM1065 193h1v1h-1zM1042 301h1v1h-1zM1023 191h1v1h-1zM1068 246h1v1h-1zM1030 271h1v1h-1zM1048 218h1v1h-1zM1062 258h1v1h-1zM1051 267h1v1h-1zM1043 235h1v1h-1zM1031 277h1v1h-1zM1036 299h1v1h-1zM1039 226h1v1h-1zM1070 219h1v1h-1zM1060 296h1v1h-1zM1016 189h1v1h-1zM1057 221h1v1h-1zM1042 290h1v1h-1zM1031 294h1v1h-1zM1075 242h1v1h-1zM1050 284h1v1h-1zM1043 230h1v1h-1zM1058 185h1v1h-1zM1053 209h1v1h-1zM1021 237h1v1h-1zM1038 223h1v1h-1zM1027 231h1v1h-1zM1064 290h1v1h-1zM1019 251h1v1h-1zM1051 224h1v1h-1zM1053 203h1v1h-1zM1031 188h1v1h-1zM1044 192h1v1h-1zM1065 236h1v1h-1zM1031 186h1v1h-1zM1045 176h1v1h-1zM1070 206h1v1h-1zM1062 257h1v1h-1zM1053 221h1v1h-1zM1034 245h1v1h-1zM1025 212h1v1h-1zM1019 194h1v1h-1zM1049 234h1v1h-1zM1025 179h1v1h-1zM1054 304h1v1h-1zM1036 250h1v1h-1zM1044 280h1v1h-1zM1038 200h1v1h-1zM1028 209h1v1h-1zM1039 280h1v1h-1zM1044 299h1v1h-1zM1063 270h1v1h-1zM1034 264h1v1h-1zM1032 223h1v1h-1zM1022 201h1v1h-1zM1075 240h1v1h-1zM1065 248h1v1h-1zM1040 237h1v1h-1zM1031 206h1v1h-1zM1019 244h1v1h-1zM1016 198h1v1h-1zM1030 201h1v1h-1zM1055 221h1v1h-1zM1055 200h1v1h-1zM1068 315h1v1h-1zM1027 214h1v1h-1zM1027 176h1v1h-1zM1028 181h1v1h-1zM1067 286h1v1h-1zM1060 195h1v1h-1zM1062 227h1v1h-1zM1054 300h1v1h-1zM1016 206h1v1h-1zM1023 222h1v1h-1zM1047 302h1v1h-1zM1051 201h1v1h-1zM1067 267h1v1h-1zM1061 301h1v1h-1zM1040 197h1v1h-1zM1018 205h1v1h-1zM1041 252h1v1h-1zM1045 294h1v1h-1zM1045 183h1v1h-1zM1078 268h1v1h-1zM1036 220h1v1h-1zM1060 221h1v1h-1zM1019 261h1v1h-1zM1033 195h1v1h-1zM1046 264h1v1h-1zM1036 258h1v1h-1zM1043 241h1v1h-1zM1068 242h1v1h-1zM1027 267h1v1h-1zM1026 216h1v1h-1zM1034 175h1v1h-1zM1033 233h1v1h-1zM1050 230h1v1h-1zM1019 192h1v1h-1zM1065 296h1v1h-1zM1055 207h1v1h-1zM1037 262h1v1h-1zM1068 301h1v1h-1zM1052 226h1v1h-1zM1046 264h1v1h-1zM1066 282h1v1h-1zM1045 189h1v1h-1zM1063 267h1v1h-1zM1021 224h1v1h-1zM1021 213h1v1h-1zM1035 186h1v1h-1zM1041 190h1v1h-1zM1042 268h1v1h-1zM1075 231h1v1h-1zM1021 215h1v1h-1zM1039 186h1v1h-1zM1044 214h1v1h-1zM1039 293h1v1h-1zM1015 199h1v1h-1zM1024 270h1v1h-1zM1057 304h1v1h-1zM1033 183h1v1h-1zM1054 302h1v1h-1zM1055 254h1v1h-1zM1027 314h1v1h-1zM1025 239h1v1h-1zM1066 285h1v1h-1zM1028 280h1v1h-1zM1031 222h1v1h-1zM1056 190h1v1h-1zM1047 247h1v1h-1zM1064 208h1v1h-1zM1023 285h1v1h-1zM1036 183h1v1h-1zM1054 200h1v1h-1zM1055 229h1v1h-1zM1052 279h1v1h-1zM1037 273h1v1h-1zM1027 201h1v1h-1zM1048 223h1v1h-1zM1041 191h1v1h-1zM1042 292h1v1h-1zM1020 196h1v1h-1zM1025 229h1v1h-1zM1046 201h1v1h-1zM1028 303h1v1h-1zM1058 265h1v1h-1zM1031 299h1v1h-1zM1053 273h1v1h-1zM1065 264h1v1h-1zM1052 270h1v1h-1zM1042 201h1v1h-1zM1074 298h1v1h-1zM1041 260h1v1h-1zM1028 174h1v1h-1zM1065 304h1v1h-1zM1056 272h1v1h-1zM1062 290h1v1h-1zM1024 187h1v1h-1zM1022 247h1v1h-1zM1054 321h1v1h-1zM1051 315h1v1h-1zM1033 189h1v1h-1zM1066 173h1v1h-1zM1058 237h1v1h-1zM1059 171h1v1h-1zM1037 257h1v1h-1zM1038 250h1v1h-1zM1049 200h1v1h-1zM1033 256h1v1h-1zM1067 258h1v1h-1zM1050 194h1v1h-1zM1053 309h1v1h-1zM1058 239h1v1h-1zM1072 272h1v1h-1zM1029 236h1v1h-1zM1075 256h1v1h-1zM1054 207h1v1h-1zM1037 293h1v1h-1zM1060 183h1v1h-1zM1038 198h1v1h-1zM1060 190h1v1h-1zM1033 242h1v1h-1zM1047 270h1v1h-1zM1048 195h1v1h-1zM1054 214h1v1h-1zM1042 285h1v1h-1zM1022 186h1v1h-1zM1048 281h1v1h-1zM1050 175h1v1h-1zM1046 282h1v1h-1zM1052 259h1v1h-1zM1038 175h1v1h-1zM1026 218h1v1h-1zM1032 251h1v1h-1zM1064 204h1v1h-1zM1056 292h1v1h-1zM1026 247h1v1h-1zM1054 213h1v1h-1zM1045 206h1v1h-1zM1063 322h1v1h-1zM1062 296h1v1h-1zM1070 290h1v1h-1zM1037 201h1v1h-1zM1067 216h1v1h-1zM1051 162h1v1h-1zM1027 171h1v1h-1zM1026 310h1v1h-1zM1030 170h1v1h-1zM1029 282h1v1h-1zM1075 249h1v1h-1zM1054 178h1v1h-1zM1061 222h1v1h-1zM1020 172h1v1h-1zM1063 207h1v1h-1zM1035 260h1v1h-1zM1058 286h1v1h-1zM1022 228h1v1h-1zM1029 179h1v1h-1zM1033 236h1v1h-1zM1044 219h1v1h-1zM1053 273h1v1h-1zM1034 181h1v1h-1zM1038 181h1v1h-1zM1023 233h1v1h-1zM1030 193h1v1h-1zM1030 185h1v1h-1zM1067 266h1v1h-1zM1026 255h1v1h-1zM1042 219h1v1h-1zM1057 164h1v1h-1zM1024 252h1v1h-1zM1053 286h1v1h-1zM1074 208h1v1h-1zM1033 232h1v1h-1zM1066 288h1v1h-1zM1069 224h1v1h-1zM1056 198h1v1h-1zM1036 199h1v1h-1zM1070 291h1v1h-1zM1043 179h1v1h-1zM1024 275h1v1h-1zM1048 176h1v1h-1zM1034 211h1v1h-1zM1066 195h1v1h-1zM1058 232h1v1h-1zM1029 232h1v1h-1zM1064 183h1v1h-1zM1041 250h1v1h-1zM1041 192h1v1h-1zM1066 292h1v1h-1zM1043 287h1v1h-1zM1069 267h1v1h-1zM1064 304h1v1h-1zM1071 317h1v1h-1zM1055 221h1v1h-1zM1066 229h1v1h-1zM1038 179h1v1h-1zM1024 210h1v1h-1zM1047 174h1v1h-1zM1044 286h1v1h-1zM1040 289h1v1h-1zM1057 207h1v1h-1zM1059 226h1v1h-1zM1065 309h1v1h-1zM1034 181h1v1h-1zM1037 226h1v1h-1zM1024 247h1v1h-1zM1068 197h1v1h-1zM1020 239h1v1h-1zM1028 200h1v1h-1zM1065 290h1v1h-1zM1029 272h1v1h-1zM1064 248h1v1h-1zM1073 279h1v1h-1zM1045 237h1v1h-1zM1072 256h1v1h-1zM1026 214h1v1h-1zM1030 192h1v1h-1zM1052 252h1v1h-1zM1043 266h1v1h-1zM1040 314h1v1h-1zM1052 300h1v1h-1zM1043 189h1v1h-1zM1057 192h1v1h-1zM1037 223h1v1h-1zM1038 308h1v1h-1zM1048 303h1v1h-1zM1051 170h1v1h-1zM1070 281h1v1h-1zM1020 229h1v1h-1zM1007 197h1v1h-1zM1019 193h1v1h-1zM1036 218h1v1h-1zM1033 264h1v1h-1zM1052 307h1v1h-1zM1065 302h1v1h-1zM1064 230h1v1h-1zM1038 262h1v1h-1zM1070 239h1v1h-1zM1054 224h1v1h-1zM1047 277h1v1h-1zM1038 308h1v1h-1zM1048 180h1v1h-1zM1020 237h1v1h-1zM1043 255h1v1h-1zM1064 288h1v1h-1zM1016 229h1v1h-1zM1022 216h1v1h-1zM1053 221h1v1h-1zM1055 294h1v1h-1zM1047 314h1v1h-1zM1057 284h1v1h-1zM1027 170h1v1h-1zM1014 182h1v1h-1zM1052 246h1v1h-1zM1052 292h1v1h-1zM1043 199h1v1h-1zM1046 306h1v1h-1zM1043 190h1v1h-1zM1031 297h1v1h-1zM1070 306h1v1h-1zM1073 224h1v1h-1zM1042 173h1v1h-1zM1047 228h1v1h-1zM1029 282h1v1h-1zM1032 229h1v1h-1zM1067 300h1v1h-1zM1060 198h1v1h-1zM1051 202h1v1h-1zM1060 275h1v1h-1zM1047 259h1v1h-1zM1046 190h1v1h-1zM1041 227h1v1h-1zM1028 236h1v1h-1zM1066 231h1v1h-1zM1066 294h1v1h-1zM1020 255h1v1h-1zM1044 196h1v1h-1zM1023 288h1v1h-1zM1055 296h1v1h-1zM1055 306h1v1h-1zM1042 171h1v1h-1zM1070 234h1v1h-1zM1044 170h1v1h-1zM1022 222h1v1h-1zM1067 278h1v1h-1zM1027 227h1v1h-1zM1065 251h1v1h-1zM1027 241h1v1h-1zM1044 207h1v1h-1zM1028 175h1v1h-1zM1049 232h1v1h-1zM1028 228h1v1h-1zM1036 191h1v1h-1zM1042 205h1v1h-1zM1034 262h1v1h-1zM1035 286h1v1h-1zM1047 249h1v1h-1zM1030 242h1v1h-1zM1063 293h1v1h-1zM1032 172h1v1h-1zM1036 281h1v1h-1zM1043 267h1v1h-1zM1069 261h1v1h-1zM1027 201h1v1h-1zM1014 232h1v1h-1zM1032 227h1v1h-1zM1056 206h1v1h-1zM1059 199h1v1h-1zM1069 280h1v1h-1zM1044 248h1v1h-1zM1057 289h1v1h-1zM1052 283h1v1h-1zM1035 178h1v1h-1zM1069 295h1v1h-1zM1021 179h1v1h-1zM1073 279h1v1h-1zM1048 176h1v1h-1zM1058 270h1v1h-1zM1041 294h1v1h-1zM1070 293h1v1h-1zM1052 216h1v1h-1zM1066 193h1v1h-1zM1039 205h1v1h-1zM1023 228h1v1h-1zM1034 230h1v1h-1zM1030 295h1v1h-1zM1064 218h1v1h-1zM1046 229h1v1h-1zM1073 230h1v1h-1zM1037 259h1v1h-1zM1043 301h1v1h-1zM1013 203h1v1h-1zM1045 203h1v1h-1zM1029 211h1v1h-1zM1059 315h1v1h-1zM1028 302h1v1h-1zM1039 189h1v1h-1zM1044 269h1v1h-1zM1043 265h1v1h-1zM1067 274h1v1h-1zM1038 289h1v1h-1zM1038 279h1v1h-1zM1020 224h1v1h-1zM1015 213h1v1h-1zM1065 280h1v1h-1zM1038 174h1v1h-1zM1030 283h1v1h-1zM1029 175h1v1h-1zM1032 240h1v1h-1zM1057 202h1v1h-1zM1027 233h1v1h-1zM1045 194h1v1h-1zM1050 172h1v1h-1zM1054 300h1v1h-1zM1068 247h1v1h-1zM1027 198h1v1h-1zM1067 269h1v1h-1zM1034 271h1v1h-1zM1063 243h1v1h-1zM1074 244h1v1h-1zM1028 184h1v1h-1zM1041 297h1v1h-1zM1067 276h1v1h-1zM1032 238h1v1h-1zM1017 228h1v1h-1zM1060 302h1v1h-1zM1024 218h1v1h-1zM1035 298h1v1h-1zM1057 234h1v1h-1zM1041 303h1v1h-1zM1049 225h1v1h-1zM1049 295h1v1h-1zM1039 242h1v1h-1zM1034 201h1v1h-1zM1032 223h1v1h-1zM1061 245h1v1h-1zM1057 302h1v1h-1zM1056 208h1v1h-1zM1014 220h1v1h-1zM1019 216h1v1h-1zM1058 255h1v1h-1zM1039 309h1v1h-1zM1071 208h1v1h-1zM1069 285h1v1h-1zM1067 240h1v1h-1zM1060 171h1v1h-1zM1054 244h1v1h-1zM1034 183h1v1h-1zM1061 226h1v1h-1zM1073 277h1v1h-1zM1026 194h1v1h-1zM1050 211h1v1h-1zM1060 181h1v1h-1zM1052 292h1v1h-1zM1043 179h1v1h-1zM1029 295h1v1h-1zM1065 187h1v1h-1zM1052 185h1v1h-1zM1018 237h1v1h-1zM1049 246h1v1h-1zM1067 283h1v1h-1zM1036 239h1v1h-1zM1058 247h1v1h-1zM1061 211h1v1h-1zM1017 259h1v1h-1zM1038 219h1v1h-1zM1035 220h1v1h-1zM1066 247h1v1h-1zM1038 219h1v1h-1zM1053 290h1v1h-1zM1057 279h1v1h-1zM1047 301h1v1h-1zM1031 213h1v1h-1zM1063 221h1v1h-1zM1060 267h1v1h-1zM1033 167h1v1h-1zM1040 303h1v1h-1zM1066 263h1v1h-1zM1056 240h1v1h-1zM1068 210h1v1h-1zM1060 206h1v1h-1zM1070 289h1v1h-1zM1025 290h1v1h-1zM1026 259h1v1h-1zM1063 220h1v1h-1zM1046 258h1v1h-1zM1062 239h1v1h-1zM1021 240h1v1h-1zM1044 180h1v1h-1zM1061 184h1v1h-1zM1060 267h1v1h-1zM1066 283h1v1h-1zM1069 231h1v1h-1zM1037 227h1v1h-1zM1022 189h1v1h-1zM1045 176h1v1h-1zM1012 249h1v1h-1zM1025 209h1v1h-1zM1036 294h1v1h-1zM1023 254h1v1h-1zM1043 231h1v1h-1zM1029 159h1v1h-1zM1025 240h1v1h-1zM1037 253h1v1h-1zM1073 223h1v1h-1zM1072 297h1v1h-1zM1060 298h1v1h-1zM1046 303h1v1h-1zM1020 179h1v1h-1zM1044 237h1v1h-1zM1058 175h1v1h-1zM1037 278h1v1h-1zM1064 307h1v1h-1zM1027 293h1v1h-1zM1042 284h1v1h-1zM1061 260h1v1h-1zM1041 277h1v1h-1zM1034 175h1v1h-1zM1019 234h1v1h-1zM1028 233h1v1h-1zM1066 213h1v1h-1zM1054 203h1v1h-1zM1031 248h1v1h-1zM1050 300h1v1h-1zM1060 279h1v1h-1zM1027 220h1v1h-1zM1073 265h1v1h-1zM1074 291h1v1h-1zM1031 247h1v1h-1zM1035 255h1v1h-1zM1047 256h1v1h-1zM1020 247h1v1h-1zM1041 196h1v1h-1zM1044 292h1v1h-1zM1025 178h1v1h-1zM1046 219h1v1h-1zM1070 255h1v1h-1zM1037 290h1v1h-1zM1048 295h1v1h-1zM1043 197h1v1h-1zM1070 302h1v1h-1zM1035 214h1v1h-1zM1052 268h1v1h-1zM1018 212h1v1h-1zM1019 224h1v1h-1zM1018 243h1v1h-1zM1070 274h1v1h-1zM1060 194h1v1h-1zM1029 259h1v1h-1zM1047 278h1v1h-1zM1063 301h1v1h-1zM1027 259h1v1h-1zM1034 187h1v1h-1zM1048 219h1v1h-1zM1072 304h1v1h-1zM1051 213h1v1h-1zM1063 248h1v1h-1zM1065 264h1v1h-1zM1066 293h1v1h-1zM1043 266h1v1h-1zM1049 202h1v1h-1zM1049 205h1v1h-1zM1045 297h1v1h-1zM1021 229h1v1h-1zM1059 246h1v1h-1zM1031 294h1v1h-1zM1047 255h1v1h-1zM1037 262h1v1h-1zM1034 195h1v1h-1zM1056 299h1v1h-1zM1027 177h1v1h-1zM1017 233h1v1h-1zM1065 236h1v1h-1zM1067 311h1v1h-1zM1061 289h1v1h-1zM1044 215h1v1h-1zM1030 231h1v1h-1zM1016 245h1v1h-1zM1075 294h1v1h-1zM1065 225h1v1h-1zM1034 288h1v1h-1zM1031 185h1v1h-1zM1059 272h1v1h-1zM1023 195h1v1h-1zM1049 208h1v1h-1zM1040 193h1v1h-1zM1033 209h1v1h-1zM1064 308h1v1h-1zM1038 231h1v1h-1zM1023 217h1v1h-1zM1035 191h1v1h-1zM1038 214h1v1h-1zM1047 291h1v1h-1zM1038 189h1v1h-1zM1064 266h1v1h-1zM1032 302h1v1h-1zM1034 295h1v1h-1zM1078 259h1v1h-1zM1047 261h1v1h-1zM1056 195h1v1h-1zM1057 222h1v1h-1zM1073 301h1v1h-1zM1056 292h1v1h-1zM1060 243h1v1h-1zM1071 281h1v1h-1zM1054 261h1v1h-1zM1068 255h1v1h-1zM1018 187h1v1h-1zM1023 221h1v1h-1zM1034 243h1v1h-1zM1050 161h1v1h-1zM1028 282h1v1h-1zM1054 249h1v1h-1zM1075 230h1v1h-1zM1028 222h1v1h-1zM1037 194h1v1h-1zM1050 290h1v1h-1zM1040 261h1v1h-1zM1063 274h1v1h-1zM1059 183h1v1h-1zM1041 266h1v1h-1zM1030 240h1v1h-1zM1042 214h1v1h-1zM1048 186h1v1h-1zM1075 244h1v1h-1zM1052 310h1v1h-1zM1065 241h1v1h-1zM1032 209h1v1h-1zM1036 182h1v1h-1zM1037 256h1v1h-1zM1019 214h1v1h-1zM1053 283h1v1h-1zM1046 217h1v1h-1zM1064 243h1v1h-1zM1034 239h1v1h-1zM1058 254h1v1h-1zM1040 291h1v1h-1zM1054 268h1v1h-1zM1069 247h1v1h-1zM1050 310h1v1h-1zM1064 219h1v1h-1zM1049 224h1v1h-1zM1044 181h1v1h-1zM1072 287h1v1h-1zM1066 296h1v1h-1zM1064 191h1v1h-1zM1051 297h1v1h-1zM1068 301h1v1h-1zM1050 172h1v1h-1zM1055 293h1v1h-1zM1033 181h1v1h-1zM1077 230h1v1h-1zM1038 298h1v1h-1zM1019 220h1v1h-1zM1039 173h1v1h-1zM1053 216h1v1h-1zM1059 246h1v1h-1zM1045 213h1v1h-1zM1050 259h1v1h-1zM1065 313h1v1h-1zM1059 289h1v1h-1zM1053 176h1v1h-1zM1054 297h1v1h-1zM1051 272h1v1h-1zM1063 290h1v1h-1zM1027 236h1v1h-1zM1019 174h1v1h-1zM1049 308h1v1h-1zM1081 222h1v1h-1zM1030 293h1v1h-1zM1059 183h1v1h-1zM1029 273h1v1h-1zM1022 204h1v1h-1zM1042 218h1v1h-1zM1055 218h1v1h-1zM1032 211h1v1h-1zM1071 212h1v1h-1zM1058 244h1v1h-1zM1025 294h1v1h-1zM1064 213h1v1h-1zM1056 307h1v1h-1zM1028 279h1v1h-1zM1030 286h1v1h-1zM1033 283h1v1h-1zM1045 271h1v1h-1zM1034 308h1v1h-1zM1070 277h1v1h-1zM1045 307h1v1h-1zM1063 296h1v1h-1zM1032 311h1v1h-1zM1033 185h1v1h-1zM1040 270h1v1h-1zM1042 230h1v1h-1zM1058 241h1v1h-1zM1074 232h1v1h-1zM1029 192h1v1h-1zM1043 214h1v1h-1zM1058 316h1v1h-1zM1029 244h1v1h-1zM1021 170h1v1h-1zM1024 229h1v1h-1zM1030 209h1v1h-1zM1051 288h1v1h-1zM1024 232h1v1h-1zM1041 263h1v1h-1zM1022 283h1v1h-1zM1061 258h1v1h-1zM1041 214h1v1h-1zM1043 257h1v1h-1zM1041 189h1v1h-1zM1066 259h1v1h-1zM1024 239h1v1h-1zM1034 178h1v1h-1zM1051 177h1v1h-1zM1048 300h1v1h-1zM1027 188h1v1h-1zM1064 193h1v1h-1zM1053 173h1v1h-1zM1063 210h1v1h-1zM1048 228h1v1h-1zM1034 298h1v1h-1zM1056 306h1v1h-1zM1066 209h1v1h-1zM1036 309h1v1h-1zM1030 282h1v1h-1zM1042 256h1v1h-1zM1055 188h1v1h-1zM1064 184h1v1h-1zM1062 310h1v1h-1zM1026 232h1v1h-1zM1072 273h1v1h-1zM1050 285h1v1h-1zM1066 238h1v1h-1zM1042 195h1v1h-1zM1067 227h1v1h-1zM1065 256h1v1h-1zM1050 295h1v1h-1zM1039 252h1v1h-1zM1054 239h1v1h-1zM1026 231h1v1h-1zM1041 177h1v1h-1zM1023 222h1v1h-1zM1044 250h1v1h-1zM1034 299h1v1h-1zM1039 205h1v1h-1zM1036 210h1v1h-1zM1029 232h1v1h-1zM1042 193h1v1h-1zM1026 242h1v1h-1zM1057 263h1v1h-1zM1037 189h1v1h-1zM1022 256h1v1h-1zM1052 246h1v1h-1zM1016 195h1v1h-1zM1062 178h1v1h-1zM1056 261h1v1h-1zM1044 307h1v1h-1zM1021 208h1v1h-1zM1060 253h1v1h-1zM1054 293h1v1h-1zM1066 259h1v1h-1zM1065 218h1v1h-1zM1056 230h1v1h-1zM1027 274h1v1h-1zM1050 252h1v1h-1zM1013 202h1v1h-1zM1043 174h1v1h-1zM1043 215h1v1h-1zM1037 298h1v1h-1zM1035 184h1v1h-1zM1044 266h1v1h-1zM1076 265h1v1h-1zM1022 248h1v1h-1zM1059 264h1v1h-1zM1040 215h1v1h-1zM1055 267h1v1h-1zM1059 283h1v1h-1zM1037 178h1v1h-1zM1055 242h1v1h-1zM1059 237h1v1h-1zM1037 202h1v1h-1zM1070 204h1v1h-1zM1053 271h1v1h-1zM1018 245h1v1h-1zM1046 279h1v1h-1zM1031 267h1v1h-1zM1031 272h1v1h-1zM1047 188h1v1h-1zM1027 192h1v1h-1zM1041 190h1v1h-1zM1048 262h1v1h-1zM1017 199h1v1h-1zM1026 215h1v1h-1zM1020 250h1v1h-1zM1035 195h1v1h-1zM1063 204h1v1h-1zM1055 260h1v1h-1zM1059 299h1v1h-1zM1060 304h1v1h-1zM1025 189h1v1h-1zM1022 201h1v1h-1zM1063 228h1v1h-1zM1037 299h1v1h-1zM1047 230h1v1h-1zM1065 294h1v1h-1zM1076 295h1v1h-1zM1070 281h1v1h-1zM1075 267h1v1h-1zM1050 262h1v1h-1zM1051 299h1v1h-1zM1030 268h1v1h-1zM1056 225h1v1h-1zM1032 206h1v1h-1zM1061 299h1v1h-1zM1030 294h1v1h-1zM1062 312h1v1h-1zM1038 273h1v1h-1zM1021 208h1v1h-1zM1040 277h1v1h-1zM1069 257h1v1h-1zM1062 287h1v1h-1zM1023 252h1v1h-1zM1057 311h1v1h-1zM1027 185h1v1h-1zM1070 225h1v1h-1zM1054 273h1v1h-1zM1052 185h1v1h-1zM1050 198h1v1h-1zM1064 204h1v1h-1zM1022 285h1v1h-1zM1050 180h1v1h-1zM1074 272h1v1h-1zM1038 172h1v1h-1zM1062 260h1v1h-1zM1066 291h1v1h-1zM1037 253h1v1h-1zM1024 236h1v1h-1zM1043 258h1v1h-1zM1026 220h1v1h-1zM1048 191h1v1h-1zM1036 231h1v1h-1zM1053 297h1v1h-1zM1060 308h1v1h-1zM1069 304h1v1h-1zM1059 233h1v1h-1zM1039 198h1v1h-1zM1037 271h1v1h-1zM1042 232h1v1h-1zM1067 255h1v1h-1zM1032 299h1v1h-1zM1042 212h1v1h-1zM1025 268h1v1h-1zM1034 197h1v1h-1zM1033 275h1v1h-1zM1053 250h1v1h-1zM1058 270h1v1h-1zM1034 177h1v1h-1zM1070 277h1v1h-1zM1027 163h1v1h-1zM1026 259h1v1h-1zM1028 269h1v1h-1zM1038 185h1v1h-1zM1053 200h1v1h-1zM1018 228h1v1h-1zM1049 223h1v1h-1zM1071 266h1v1h-1zM1045 171h1v1h-1zM1040 278h1v1h-1zM1028 298h1v1h-1zM1051 199h1v1h-1zM1048 255h1v1h-1zM1021 222h1v1h-1zM1037 309h1v1h-1zM1057 227h1v1h-1zM1055 227h1v1h-1zM1050 226h1v1h-1zM1051 269h1v1h-1zM1036 197h1v1h-1zM1033 209h1v1h-1zM1070 279h1v1h-1zM1043 254h1v1h-1zM1044 305h1v1h-1zM1032 185h1v1h-1zM1045 175h1v1h-1zM1041 308h1v1h-1zM1024 211h1v1h-1zM1032 210h1v1h-1zM1054 291h1v1h-1zM1035 210h1v1h-1zM1054 197h1v1h-1zM1035 203h1v1h-1zM1045 208h1v1h-1zM1018 232h1v1h-1zM1048 243h1v1h-1zM1057 199h1v1h-1zM1063 239h1v1h-1zM1040 230h1v1h-1zM1049 218h1v1h-1zM1065 220h1v1h-1zM1039 219h1v1h-1zM1042 199h1v1h-1zM1044 276h1v1h-1zM1023 185h1v1h-1zM1026 282h1v1h-1zM1042 212h1v1h-1zM1043 288h1v1h-1zM1051 195h1v1h-1zM1019 208h1v1h-1zM1067 266h1v1h-1zM1054 295h1v1h-1zM1063 227h1v1h-1zM1067 300h1v1h-1zM1053 245h1v1h-1zM1024 286h1v1h-1zM1060 302h1v1h-1zM1070 280h1v1h-1zM1028 267h1v1h-1zM1039 270h1v1h-1zM1011 216h1v1h-1zM1025 263h1v1h-1zM1012 198h1v1h-1zM1048 197h1v1h-1zM1065 288h1v1h-1zM1023 200h1v1h-1zM1063 235h1v1h-1zM1042 220h1v1h-1zM1036 285h1v1h-1zM1069 268h1v1h-1zM1056 226h1v1h-1zM1066 254h1v1h-1zM1024 264h1v1h-1zM1048 170h1v1h-1zM1062 267h1v1h-1zM1066 257h1v1h-1zM1050 193h1v1h-1zM1057 288h1v1h-1zM1053 184h1v1h-1zM1040 266h1v1h-1zM1046 264h1v1h-1zM1060 208h1v1h-1zM1033 304h1v1h-1zM1035 285h1v1h-1zM1047 265h1v1h-1zM1048 302h1v1h-1zM1027 289h1v1h-1zM1031 231h1v1h-1zM1065 279h1v1h-1zM1044 227h1v1h-1zM1038 209h1v1h-1zM1025 260h1v1h-1zM1062 299h1v1h-1zM1040 313h1v1h-1zM1031 310h1v1h-1zM1036 287h1v1h-1zM1072 261h1v1h-1zM1057 303h1v1h-1zM1026 197h1v1h-1zM1073 295h1v1h-1zM1048 219h1v1h-1zM1018 234h1v1h-1zM1030 247h1v1h-1zM1050 174h1v1h-1zM1043 185h1v1h-1zM1060 205h1v1h-1zM1061 216h1v1h-1zM1052 307h1v1h-1zM1063 278h1v1h-1zM1066 288h1v1h-1zM1050 298h1v1h-1zM1047 225h1v1h-1zM1026 240h1v1h-1zM1074 237h1v1h-1zM1045 269h1v1h-1zM1032 217h1v1h-1zM1059 216h1v1h-1zM1071 244h1v1h-1zM1032 267h1v1h-1zM1057 293h1v1h-1zM1063 196h1v1h-1zM1028 245h1v1h-1zM1050 194h1v1h-1zM1057 198h1v1h-1zM1040 193h1v1h-1zM1024 188h1v1h-1zM1035 240h1v1h-1zM1032 162h1v1h-1zM1059 216h1v1h-1zM1053 216h1v1h-1zM1062 184h1v1h-1zM1030 255h1v1h-1zM1049 211h1v1h-1zM1049 231h1v1h-1zM1049 310h1v1h-1zM1034 230h1v1h-1zM1042 177h1v1h-1zM1027 180h1v1h-1zM1040 213h1v1h-1zM1022 173h1v1h-1zM1054 262h1v1h-1zM1047 198h1v1h-1zM1056 283h1v1h-1zM1033 205h1v1h-1zM1031 165h1v1h-1zM1062 227h1v1h-1zM1021 209h1v1h-1zM1027 196h1v1h-1zM1069 290h1v1h-1zM1037 294h1v1h-1zM1033 182h1v1h-1zM1038 168h1v1h-1zM1036 280h1v1h-1zM1062 174h1v1h-1zM1038 260h1v1h-1zM1052 279h1v1h-1zM1068 268h1v1h-1zM1043 249h1v1h-1zM1055 248h1v1h-1zM1046 214h1v1h-1zM1063 202h1v1h-1zM1036 206h1v1h-1zM1068 244h1v1h-1zM1054 254h1v1h-1zM1040 264h1v1h-1zM1039 273h1v1h-1zM1044 271h1v1h-1zM1052 283h1v1h-1zM1072 222h1v1h-1zM1024 276h1v1h-1zM1030 245h1v1h-1zM1039 270h1v1h-1zM1035 165h1v1h-1zM1040 228h1v1h-1zM1070 286h1v1h-1zM1052 245h1v1h-1zM1035 218h1v1h-1zM1062 261h1v1h-1zM1020 232h1v1h-1zM1034 192h1v1h-1zM1030 255h1v1h-1zM1035 177h1v1h-1zM1054 256h1v1h-1zM1033 293h1v1h-1zM1039 246h1v1h-1zM1040 266h1v1h-1zM1065 288h1v1h-1zM1049 174h1v1h-1zM1058 187h1v1h-1zM1060 231h1v1h-1zM1046 212h1v1h-1zM1025 195h1v1h-1zM1017 207h1v1h-1zM1047 209h1v1h-1zM1051 173h1v1h-1zM1061 185h1v1h-1zM1072 283h1v1h-1zM1023 176h1v1h-1zM1042 183h1v1h-1zM1069 300h1v1h-1zM1045 203h1v1h-1zM1026 188h1v1h-1zM1060 305h1v1h-1zM1046 172h1v1h-1zM1061 189h1v1h-1zM1041 244h1v1h-1zM1033 273h1v1h-1zM1057 199h1v1h-1zM1041 295h1v1h-1zM1038 277h1v1h-1zM1056 289h1v1h-1zM1056 262h1v1h-1zM1027 210h1v1h-1zM1065 297h1v1h-1zM1046 232h1v1h-1zM1026 194h1v1h-1zM1032 201h1v1h-1zM1033 208h1v1h-1zM1037 290h1v1h-1zM1021 217h1v1h-1zM1070 283h1v1h-1zM1047 310h1v1h-1zM1029 212h1v1h-1zM1032 254h1v1h-1zM1052 247h1v1h-1zM1035 257h1v1h-1zM1049 186h1v1h-1zM1052 257h1v1h-1zM1021 219h1v1h-1zM1051 273h1v1h-1zM1070 302h1v1h-1zM1025 176h1v1h-1zM1047 288h1v1h-1zM1053 306h1v1h-1zM1067 211h1v1h-1zM1048 254h1v1h-1zM1046 304h1v1h-1zM1054 194h1v1h-1zM1029 177h1v1h-1zM1024 259h1v1h-1zM1053 245h1v1h-1zM1020 224h1v1h-1zM1066 203h1v1h-1zM1026 203h1v1h-1zM1069 245h1v1h-1zM1035 219h1v1h-1zM1026 228h1v1h-1zM1027 260h1v1h-1zM1035 205h1v1h-1zM1027 189h1v1h-1zM1050 230h1v1h-1zM1041 281h1v1h-1zM1053 261h1v1h-1zM1046 188h1v1h-1zM1064 252h1v1h-1zM1031 251h1v1h-1zM1032 272h1v1h-1zM1039 305h1v1h-1zM1030 234h1v1h-1zM1034 301h1v1h-1zM1056 182h1v1h-1zM1041 305h1v1h-1zM1033 278h1v1h-1zM1048 241h1v1h-1zM1062 276h1v1h-1zM1073 208h1v1h-1zM1050 204h1v1h-1zM1029 225h1v1h-1zM1033 221h1v1h-1zM1048 226h1v1h-1zM1033 233h1v1h-1zM1014 225h1v1h-1zM1025 249h1v1h-1zM1047 224h1v1h-1zM1044 188h1v1h-1zM1065 242h1v1h-1zM1042 240h1v1h-1zM1037 212h1v1h-1zM1053 230h1v1h-1zM1058 211h1v1h-1zM1045 238h1v1h-1zM1023 224h1v1h-1zM1040 312h1v1h-1zM1044 226h1v1h-1zM1042 225h1v1h-1zM1026 180h1v1h-1zM1077 290h1v1h-1zM1055 199h1v1h-1zM1033 277h1v1h-1zM1043 253h1v1h-1zM1060 256h1v1h-1zM1037 245h1v1h-1zM1063 235h1v1h-1zM1031 190h1v1h-1zM1060 227h1v1h-1zM1036 288h1v1h-1zM1048 278h1v1h-1zM1054 287h1v1h-1zM1061 244h1v1h-1zM1059 181h1v1h-1zM1054 178h1v1h-1zM1055 177h1v1h-1zM1047 172h1v1h-1zM1070 242h1v1h-1zM1066 249h1v1h-1zM1030 239h1v1h-1zM1057 223h1v1h-1zM1034 195h1v1h-1zM1037 293h1v1h-1zM1035 219h1v1h-1zM1050 303h1v1h-1zM1022 218h1v1h-1zM1039 202h1v1h-1zM1032 283h1v1h-1zM1058 302h1v1h-1zM1049 190h1v1h-1zM1065 226h1v1h-1zM1048 190h1v1h-1zM1047 263h1v1h-1zM1060 223h1v1h-1zM1070 294h1v1h-1zM1028 173h1v1h-1zM1033 270h1v1h-1zM1043 215h1v1h-1zM1034 179h1v1h-1zM1053 193h1v1h-1zM1057 281h1v1h-1zM1057 201h1v1h-1zM1024 188h1v1h-1zM1042 203h1v1h-1zM1025 185h1v1h-1zM1061 258h1v1h-1zM1040 307h1v1h-1zM1053 268h1v1h-1zM1067 264h1v1h-1zM1075 243h1v1h-1zM1064 251h1v1h-1zM1053 273h1v1h-1zM1065 226h1v1h-1zM1062 229h1v1h-1zM1016 249h1v1h-1zM1034 274h1v1h-1zM1026 186h1v1h-1zM1067 235h1v1h-1zM1043 206h1v1h-1zM1046 227h1v1h-1zM1049 264h1v1h-1zM1057 283h1v1h-1zM1028 299h1v1h-1zM1045 180h1v1h-1zM1064 307h1v1h-1zM1037 228h1v1h-1zM1072 246h1v1h-1zM1040 278h1v1h-1zM1042 323h1v1h-1zM1038 239h1v1h-1zM1042 281h1v1h-1zM1039 185h1v1h-1zM1058 268h1v1h-1zM1040 180h1v1h-1zM1060 187h1v1h-1zM1031 231h1v1h-1zM1072 246h1v1h-1zM1062 179h1v1h-1zM1072 229h1v1h-1zM1043 194h1v1h-1zM1028 301h1v1h-1zM1043 222h1v1h-1zM1034 315h1v1h-1zM1047 303h1v1h-1zM1029 237h1v1h-1zM1074 271h1v1h-1zM1020 252h1v1h-1zM1023 185h1v1h-1zM1050 180h1v1h-1zM1041 252h1v1h-1zM1044 181h1v1h-1zM1018 222h1v1h-1zM1058 205h1v1h-1zM1038 185h1v1h-1zM1074 258h1v1h-1zM1034 296h1v1h-1zM1042 210h1v1h-1zM1019 238h1v1h-1zM1045 276h1v1h-1zM1014 240h1v1h-1zM1070 251h1v1h-1zM1054 255h1v1h-1zM1023 224h1v1h-1zM1030 171h1v1h-1zM1061 292h1v1h-1zM1052 193h1v1h-1zM1017 256h1v1h-1zM1047 178h1v1h-1zM1044 263h1v1h-1zM1046 288h1v1h-1zM1026 196h1v1h-1zM1048 229h1v1h-1zM1058 305h1v1h-1zM1051 226h1v1h-1zM1050 213h1v1h-1zM1031 176h1v1h-1zM1064 216h1v1h-1zM1067 263h1v1h-1zM1021 210h1v1h-1zM1022 233h1v1h-1zM1034 247h1v1h-1zM1067 295h1v1h-1zM1050 199h1v1h-1zM1050 284h1v1h-1zM1029 235h1v1h-1zM1042 181h1v1h-1zM1048 286h1v1h-1zM1065 292h1v1h-1zM1063 292h1v1h-1zM1038 307h1v1h-1zM1068 281h1v1h-1zM1035 196h1v1h-1zM1074 293h1v1h-1zM1065 184h1v1h-1zM1050 230h1v1h-1zM1022 192h1v1h-1zM1029 191h1v1h-1zM1052 200h1v1h-1zM1061 255h1v1h-1zM1024 279h1v1h-1zM1043 169h1v1h-1zM1048 303h1v1h-1zM1033 285h1v1h-1zM1049 182h1v1h-1zM1052 198h1v1h-1zM1026 262h1v1h-1zM1038 181h1v1h-1zM1045 298h1v1h-1zM1028 253h1v1h-1zM1053 257h1v1h-1zM1040 300h1v1h-1zM1049 204h1v1h-1zM1028 267h1v1h-1zM1051 252h1v1h-1zM1032 186h1v1h-1zM1064 214h1v1h-1zM1056 246h1v1h-1zM1062 296h1v1h-1zM1047 215h1v1h-1zM1036 325h1v1h-1zM1060 180h1v1h-1zM1044 210h1v1h-1zM1053 331h1v1h-1zM1043 173h1v1h-1zM1048 244h1v1h-1zM1018 178h1v1h-1zM1032 238h1v1h-1zM1065 205h1v1h-1zM1059 320h1v1h-1zM1022 189h1v1h-1zM1035 265h1v1h-1zM1029 290h1v1h-1zM1030 209h1v1h-1zM1057 280h1v1h-1zM1036 234h1v1h-1zM1069 324h1v1h-1zM1037 281h1v1h-1zM1069 271h1v1h-1zM1050 253h1v1h-1zM1023 232h1v1h-1zM1028 215h1v1h-1zM1057 334h1v1h-1zM1051 222h1v1h-1zM1067 195h1v1h-1zM1062 203h1v1h-1zM1059 333h1v1h-1zM1041 208h1v1h-1zM1044 268h1v1h-1zM1025 262h1v1h-1zM1056 203h1v1h-1zM1044 292h1v1h-1zM1039 272h1v1h-1zM1044 238h1v1h-1zM1050 256h1v1h-1zM1044 291h1v1h-1zM1047 247h1v1h-1zM1064 273h1v1h-1zM1056 297h1v1h-1zM1008 233h1v1h-1zM1063 280h1v1h-1zM1070 277h1v1h-1zM1048 306h1v1h-1zM1031 224h1v1h-1zM1080 227h1v1h-1zM1072 204h1v1h-1zM1049 287h1v1h-1zM1012 236h1v1h-1zM1043 240h1v1h-1zM1062 194h1v1h-1zM1079 224h1v1h-1zM1025 256h1v1h-1zM1063 281h1v1h-1zM1054 201h1v1h-1zM1013 318h1v1h-1zM1051 259h1v1h-1zM1072 284h1v1h-1zM1017 164h1v1h-1zM1003 169h1v1h-1zM1058 244h1v1h-1zM1043 198h1v1h-1zM1046 222h1v1h-1zM1046 268h1v1h-1zM1048 270h1v1h-1zM1046 303h1v1h-1zM1081 229h1v1h-1zM1048 234h1v1h-1zM1041 294h1v1h-1zM1073 273h1v1h-1zM1017 248h1v1h-1zM1040 252h1v1h-1zM1067 228h1v1h-1zM1078 321h1v1h-1zM1039 266h1v1h-1zM1062 272h1v1h-1zM1057 155h1v1h-1zM1071 292h1v1h-1zM1046 320h1v1h-1zM1056 338h1v1h-1zM1055 268h1v1h-1zM1062 266h1v1h-1zM1072 213h1v1h-1zM1029 207h1v1h-1zM1064 223h1v1h-1zM1053 222h1v1h-1zM1027 220h1v1h-1zM1043 216h1v1h-1zM1076 272h1v1h-1zM1062 252h1v1h-1zM1040 159h1v1h-1zM1044 207h1v1h-1zM1062 237h1v1h-1zM1045 166h1v1h-1zM1062 257h1v1h-1zM1032 258h1v1h-1zM1083 288h1v1h-1zM1034 188h1v1h-1zM1031 257h1v1h-1zM1046 274h1v1h-1zM1053 242h1v1h-1zM1047 266h1v1h-1zM1034 241h1v1h-1zM1032 259h1v1h-1zM1062 283h1v1h-1zM1042 205h1v1h-1zM1038 271h1v1h-1zM1035 254h1v1h-1zM1056 282h1v1h-1zM1033 308h1v1h-1zM1021 294h1v1h-1zM1058 302h1v1h-1zM1041 261h1v1h-1zM1029 222h1v1h-1zM1015 254h1v1h-1zM1042 300h1v1h-1zM1080 194h1v1h-1zM1076 264h1v1h-1zM1020 166h1v1h-1zM1046 224h1v1h-1zM1067 218h1v1h-1zM1075 175h1v1h-1zM1049 259h1v1h-1zM1084 283h1v1h-1zM1040 270h1v1h-1zM1057 263h1v1h-1zM1035 217h1v1h-1zM1020 189h1v1h-1zM1055 273h1v1h-1zM1037 283h1v1h-1zM1021 218h1v1h-1zM1033 193h1v1h-1zM1025 256h1v1h-1zM1039 242h1v1h-1zM1042 201h1v1h-1zM1071 229h1v1h-1zM1069 219h1v1h-1zM1059 206h1v1h-1zM1057 245h1v1h-1zM1077 280h1v1h-1zM1044 275h1v1h-1zM1067 230h1v1h-1zM1060 304h1v1h-1zM1019 257h1v1h-1zM1058 289h1v1h-1zM1054 266h1v1h-1zM1066 322h1v1h-1zM1047 261h1v1h-1zM1043 285h1v1h-1zM1030 172h1v1h-1zM1022 221h1v1h-1zM1024 225h1v1h-1zM1048 252h1v1h-1zM1037 303h1v1h-1zM1064 253h1v1h-1zM1067 238h1v1h-1zM1055 298h1v1h-1zM1058 248h1v1h-1zM1016 227h1v1h-1zM1035 276h1v1h-1zM1051 257h1v1h-1zM1016 265h1v1h-1zM1062 311h1v1h-1zM1071 259h1v1h-1zM1037 193h1v1h-1zM1050 306h1v1h-1zM1059 253h1v1h-1zM1048 201h1v1h-1zM1010 262h1v1h-1zM1023 244h1v1h-1zM1067 218h1v1h-1zM1026 247h1v1h-1zM1035 234h1v1h-1zM1053 240h1v1h-1zM1068 321h1v1h-1zM1030 157h1v1h-1zM1027 301h1v1h-1zM1044 242h1v1h-1zM1043 289h1v1h-1zM1073 169h1v1h-1zM1069 239h1v1h-1zM1010 189h1v1h-1zM1050 257h1v1h-1zM1031 285h1v1h-1zM1043 263h1v1h-1zM1021 237h1v1h-1zM1079 172h1v1h-1zM1052 238h1v1h-1zM1064 273h1v1h-1zM1068 255h1v1h-1zM1015 303h1v1h-1zM1040 266h1v1h-1zM1018 250h1v1h-1zM1053 244h1v1h-1zM1047 287h1v1h-1zM1047 306h1v1h-1zM1037 210h1v1h-1zM1068 279h1v1h-1zM1014 190h1v1h-1zM1047 281h1v1h-1zM1041 226h1v1h-1zM1047 304h1v1h-1zM1007 221h1v1h-1zM1031 265h1v1h-1zM1083 303h1v1h-1zM1051 232h1v1h-1zM1070 230h1v1h-1zM1035 275h1v1h-1zM1066 287h1v1h-1zM1015 227h1v1h-1zM1041 254h1v1h-1zM1046 188h1v1h-1zM1016 192h1v1h-1zM1022 324h1v1h-1zM1042 152h1v1h-1zM1027 249h1v1h-1zM1070 314h1v1h-1zM1061 195h1v1h-1zM1054 195h1v1h-1zM1054 237h1v1h-1zM1075 210h1v1h-1zM1075 281h1v1h-1zM1018 179h1v1h-1zM1053 263h1v1h-1zM1022 262h1v1h-1zM1015 312h1v1h-1zM1030 262h1v1h-1zM1040 277h1v1h-1zM1057 169h1v1h-1zM1057 250h1v1h-1zM1035 278h1v1h-1zM1061 288h1v1h-1zM1009 260h1v1h-1zM1040 243h1v1h-1zM1085 269h1v1h-1zM1070 212h1v1h-1zM1038 206h1v1h-1zM1041 235h1v1h-1zM1068 212h1v1h-1z" fill="#44de44" opacity="0.85"/>
<path d="M1000.0 359h1v11h-1zM1002.5 359h1v11h-1zM1006.5 359h1v11h-1zM1009.5 359h1v11h-1zM1011.5 359h1v11h-1zM1013.5 359h1v11h-1zM1019.5 359h1v11h-1zM1023.5 359h1v11h-1zM1025.5 359h1v11h-1zM1030.5 359h1v11h-1zM1032.0 359h1v11h-1zM1036.0 359h1v11h-1zM1038.0 359h1v11h-1zM1039.5 359h1v11h-1zM1046.0 359h1v11h-1zM1048.0 359h1v11h-1zM1050.0 359h1v11h-1zM1055.0 359h1v11h-1zM1057.5 359h1v11h-1zM1059.5 359h1v11h-1zM1062.0 359h1v11h-1zM1072.5 359h1v11h-1zM1082.0 359h1v11h-1zM1097.5 359h1v11h-1zM1101.5 359h1v11h-1z" fill="#0e900e"/>
<path d="M1009.5 359h1.5v11h-1.5zM1012.5 359h3v11h-3zM1017 359h2.5v11h-2.5zM1020.5 359h1v11h-1zM1024 359h2v11h-2zM1029 359h1.5v11h-1.5zM1032.5 359h1v11h-1zM1038.5 359h2.5v11h-2.5zM1042 359h1v11h-1z" fill="#22ee22"/>
<rect x="944" y="389" width="81" height="8" fill="#c00c0c" />
<rect x="1025" y="389" width="39" height="8" fill="#e0d020" />
<rect x="1064" y="389" width="80" height="8" fill="#0e9a0e" />
<rect x="1054" y="389" width="1.5" height="8" fill="#f8f8f8" />
<rect x="1102" y="386" width="2.5" height="13" fill="#fff" />
<text x="944" y="414" fill="#a81414" font-size="13.9" text-anchor="start" >–1</text>
<text x="1044" y="414" fill="#d8c820" font-size="13.9" text-anchor="middle" >0</text>
<text x="1144" y="414" fill="#14901a" font-size="13.9" text-anchor="end" >+1</text>
<line x1="117" y1="441.5" x2="1142" y2="441.5" stroke="#4a4a4a" stroke-width="1" />
<line x1="117" y1="467.5" x2="1142" y2="467.5" stroke="#4a4a4a" stroke-width="1" />
<line x1="117" y1="492.5" x2="1142" y2="492.5" stroke="#4a4a4a" stroke-width="1" />
<line x1="117" y1="527.5" x2="1142" y2="527.5" stroke="#4a4a4a" stroke-width="1" />
<line x1="117" y1="570.5" x2="1142" y2="570.5" stroke="#4a4a4a" stroke-width="1" />
<line x1="117" y1="652.5" x2="1142" y2="652.5" stroke="#4a4a4a" stroke-width="1" />
<text x="113" y="446.0" fill="#e8e8e8" font-size="13.9" text-anchor="end" >0</text>
<text x="113" y="472.0" fill="#e8e8e8" font-size="13.9" text-anchor="end" >–12</text>
<text x="113" y="497.0" fill="#e8e8e8" font-size="13.9" text-anchor="end" >–24</text>
<text x="113" y="532.0" fill="#e8e8e8" font-size="13.9" text-anchor="end" >–40</text>
<text x="113" y="575.0" fill="#e8e8e8" font-size="13.9" text-anchor="end" >–60</text>
<text x="113" y="657.0" fill="#e8e8e8" font-size="13.9" text-anchor="end" >–100</text>
<text x="113" y="690.5" fill="#e8e8e8" font-size="13.9" text-anchor="end" >–144</text>
<text x="81" y="446" fill="#777" font-size="13.9" text-anchor="start" >dB</text>
<polygon points="117,687 117.0,484.6 117.5,484.1 118.0,480.9 118.5,480.7 119.0,470.5 119.5,471.6 120.0,479.3 120.5,483.8 121.0,493.7 121.5,496.3 122.0,497.6 122.5,500.5 123.0,505.6 123.5,507.2 124.0,505.4 124.5,503.1 125.0,501.2 125.5,501.5 126.0,506.2 126.5,504.2 127.0,502.8 127.5,505.2 128.0,500.9 128.5,495.0 129.0,490.0 129.5,493.3 130.0,496.6 130.5,495.9 131.0,492.4 131.5,500.1 132.0,503.1 132.5,504.3 133.0,501.1 133.5,502.5 134.0,501.5 134.5,499.7 135.0,500.6 135.5,501.3 136.0,498.2 136.5,496.3 137.0,497.1 137.5,497.4 138.0,500.5 138.5,502.0 139.0,513.4 139.5,516.0 140.0,517.5 140.5,522.0 141.0,526.5 141.5,530.9 142.0,530.6 142.5,531.5 143.0,530.6 143.5,532.2 144.0,528.4 144.5,531.7 145.0,527.9 145.5,527.1 146.0,525.9 146.5,524.4 147.0,524.7 147.5,519.3 148.0,516.4 148.5,515.9 149.0,511.4 149.5,520.3 150.0,521.2 150.5,519.0 151.0,515.6 151.5,515.4 152.0,517.3 152.5,517.2 153.0,520.2 153.5,520.3 154.0,519.7 154.5,519.4 155.0,519.0 155.5,520.5 156.0,519.3 156.5,523.4 157.0,522.8 157.5,519.8 158.0,524.6 158.5,525.4 159.0,527.4 159.5,531.0 160.0,530.5 160.5,531.6 161.0,533.6 161.5,533.0 162.0,535.1 162.5,535.8 163.0,536.5 163.5,532.8 164.0,534.1 164.5,537.5 165.0,542.2 165.5,543.4 166.0,545.5 166.5,545.4 167.0,544.7 167.5,537.0 168.0,540.1 168.5,542.0 169.0,542.2 169.5,542.6 170.0,541.0 170.5,537.4 171.0,539.0 171.5,541.5 172.0,541.5 172.5,540.3 173.0,538.8 173.5,534.6 174.0,536.3 174.5,534.0 175.0,534.9 175.5,534.4 176.0,532.6 176.5,533.4 177.0,538.6 177.5,540.4 178.0,543.4 178.5,546.2 179.0,549.3 179.5,547.4 180.0,551.0 180.5,549.8 181.0,548.6 181.5,548.1 182.0,550.1 182.5,553.8 183.0,554.5 183.5,553.0 184.0,549.7 184.5,554.4 185.0,552.3 185.5,551.0 186.0,551.0 186.5,552.2 187.0,553.1 187.5,542.8 188.0,550.9 188.5,553.3 189.0,557.3 189.5,558.1 190.0,555.3 190.5,559.9 191.0,563.2 191.5,559.0 192.0,560.9 192.5,562.9 193.0,563.3 193.5,558.4 194.0,561.9 194.5,561.4 195.0,560.6 195.5,556.7 196.0,558.9 196.5,556.3 197.0,557.9 197.5,556.3 198.0,556.2 198.5,559.5 199.0,560.7 199.5,559.8 200.0,557.9 200.5,557.4 201.0,555.0 201.5,551.9 202.0,554.9 202.5,553.0 203.0,552.4 203.5,549.7 204.0,550.5 204.5,551.1 205.0,549.8 205.5,548.8 206.0,550.9 206.5,553.0 207.0,550.1 207.5,547.5 208.0,542.8 208.5,543.3 209.0,550.1 209.5,544.4 210.0,547.7 210.5,548.1 211.0,553.1 211.5,557.9 212.0,559.0 212.5,565.1 213.0,561.9 213.5,556.8 214.0,557.6 214.5,560.3 215.0,561.0 215.5,563.4 216.0,564.0 216.5,565.1 217.0,570.0 217.5,572.5 218.0,570.6 218.5,570.3 219.0,568.3 219.5,566.9 220.0,569.0 220.5,572.5 221.0,572.3 221.5,575.1 222.0,575.6 222.5,572.6 223.0,572.7 223.5,567.5 224.0,574.1 224.5,575.1 225.0,577.1 225.5,577.1 226.0,578.2 226.5,574.7 227.0,575.6 227.5,572.5 228.0,570.6 228.5,569.1 229.0,569.9 229.5,568.0 230.0,569.7 230.5,564.6 231.0,566.4 231.5,565.9 232.0,568.1 232.5,569.6 233.0,566.6 233.5,566.3 234.0,564.1 234.5,561.5 235.0,559.9 235.5,558.2 236.0,561.3 236.5,560.9 237.0,561.3 237.5,557.0 238.0,554.4 238.5,553.2 239.0,551.4 239.5,558.2 240.0,559.6 240.5,566.6 241.0,567.8 241.5,566.3 242.0,573.4 242.5,574.2 243.0,576.0 243.5,576.1 244.0,573.9 244.5,575.0 245.0,574.2 245.5,574.3 246.0,573.3 246.5,573.3 247.0,569.4 247.5,571.8 248.0,570.3 248.5,569.9 249.0,570.8 249.5,570.8 250.0,563.0 250.5,567.2 251.0,569.2 251.5,567.5 252.0,563.2 252.5,564.9 253.0,567.5 253.5,571.0 254.0,569.1 254.5,564.1 255.0,562.8 255.5,565.9 256.0,565.1 256.5,563.7 257.0,561.7 257.5,565.2 258.0,563.4 258.5,564.7 259.0,565.1 259.5,567.3 260.0,566.0 260.5,564.0 261.0,565.0 261.5,567.8 262.0,568.1 262.5,570.3 263.0,571.0 263.5,572.0 264.0,570.9 264.5,573.0 265.0,568.0 265.5,569.0 266.0,567.6 266.5,569.5 267.0,565.7 267.5,565.2 268.0,566.1 268.5,566.7 269.0,568.2 269.5,563.7 270.0,560.8 270.5,561.4 271.0,557.3 271.5,558.6 272.0,557.9 272.5,553.7 273.0,556.5 273.5,552.9 274.0,551.0 274.5,553.3 275.0,553.4 275.5,553.1 276.0,556.2 276.5,554.8 277.0,554.6 277.5,557.0 278.0,559.4 278.5,560.5 279.0,559.3 279.5,557.2 280.0,559.6 280.5,560.9 281.0,562.1 281.5,561.1 282.0,559.8 282.5,556.7 283.0,560.5 283.5,561.2 284.0,558.3 284.5,567.5 285.0,566.7 285.5,568.7 286.0,570.5 286.5,573.1 287.0,574.4 287.5,571.7 288.0,576.9 288.5,579.2 289.0,578.7 289.5,580.6 290.0,580.2 290.5,577.3 291.0,578.8 291.5,582.9 292.0,588.2 292.5,589.8 293.0,587.4 293.5,584.5 294.0,590.9 294.5,590.4 295.0,589.0 295.5,585.8 296.0,584.9 296.5,584.7 297.0,586.1 297.5,585.2 298.0,583.4 298.5,582.0 299.0,578.9 299.5,580.2 300.0,577.8 300.5,579.1 301.0,577.1 301.5,580.9 302.0,580.9 302.5,579.3 303.0,579.0 303.5,580.9 304.0,579.5 304.5,579.4 305.0,579.6 305.5,581.5 306.0,579.6 306.5,578.0 307.0,577.9 307.5,581.6 308.0,581.3 308.5,579.4 309.0,579.2 309.5,577.5 310.0,584.6 310.5,588.3 311.0,586.9 311.5,590.1 312.0,593.2 312.5,591.5 313.0,591.2 313.5,597.4 314.0,595.1 314.5,592.5 315.0,593.8 315.5,592.9 316.0,592.7 316.5,591.3 317.0,593.0 317.5,594.5 318.0,596.4 318.5,599.3 319.0,595.6 319.5,593.5 320.0,595.8 320.5,596.3 321.0,596.0 321.5,598.9 322.0,600.2 322.5,599.3 323.0,599.7 323.5,598.3 324.0,596.3 324.5,596.0 325.0,601.3 325.5,599.4 326.0,598.5 326.5,598.2 327.0,598.2 327.5,598.9 328.0,596.7 328.5,596.5 329.0,599.6 329.5,599.1 330.0,598.1 330.5,598.6 331.0,600.5 331.5,601.3 332.0,601.2 332.5,598.2 333.0,596.1 333.5,600.0 334.0,600.3 334.5,602.6 335.0,603.8 335.5,604.2 336.0,603.7 336.5,599.2 337.0,600.7 337.5,601.5 338.0,602.5 338.5,605.7 339.0,602.2 339.5,605.2 340.0,604.1 340.5,606.3 341.0,607.1 341.5,608.9 342.0,607.8 342.5,609.9 343.0,608.7 343.5,611.6 344.0,607.0 344.5,608.8 345.0,609.3 345.5,611.0 346.0,606.0 346.5,606.5 347.0,603.0 347.5,605.3 348.0,610.4 348.5,608.7 349.0,605.4 349.5,611.1 350.0,609.9 350.5,611.4 351.0,613.1 351.5,615.4 352.0,611.2 352.5,609.8 353.0,612.1 353.5,615.2 354.0,621.2 354.5,620.3 355.0,620.9 355.5,624.2 356.0,621.8 356.5,623.3 357.0,621.4 357.5,621.0 358.0,619.6 358.5,619.3 359.0,622.2 359.5,620.1 360.0,623.4 360.5,623.1 361.0,623.7 361.5,624.1 362.0,621.9 362.5,624.9 363.0,624.0 363.5,616.7 364.0,618.7 364.5,615.5 365.0,617.6 365.5,616.8 366.0,618.7 366.5,617.6 367.0,619.4 367.5,621.0 368.0,621.0 368.5,619.6 369.0,619.7 369.5,624.8 370.0,626.3 370.5,625.3 371.0,626.9 371.5,624.3 372.0,625.6 372.5,624.2 373.0,623.9 373.5,627.0 374.0,626.3 374.5,628.2 375.0,629.7 375.5,628.3 376.0,629.1 376.5,631.8 377.0,628.4 377.5,630.4 378.0,632.7 378.5,631.3 379.0,632.0 379.5,633.2 380.0,632.5 380.5,628.7 381.0,631.2 381.5,633.3 382.0,626.4 382.5,627.9 383.0,627.7 383.5,628.9 384.0,627.7 384.5,628.5 385.0,628.0 385.5,626.2 386.0,624.1 386.5,627.8 387.0,623.6 387.5,626.6 388.0,626.3 388.5,629.4 389.0,633.9 389.5,631.7 390.0,627.1 390.5,629.0 391.0,634.1 391.5,636.5 392.0,633.7 392.5,635.6 393.0,638.2 393.5,636.6 394.0,640.3 394.5,641.0 395.0,643.3 395.5,646.2 396.0,642.9 396.5,638.2 397.0,637.7 397.5,638.0 398.0,643.3 398.5,641.1 399.0,639.6 399.5,636.4 400.0,642.2 400.5,636.6 401.0,636.7 401.5,641.4 402.0,636.9 402.5,634.3 403.0,637.9 403.5,640.7 404.0,640.4 404.5,642.8 405.0,640.2 405.5,638.4 406.0,641.3 406.5,638.9 407.0,637.0 407.5,635.2 408.0,636.2 408.5,637.4 409.0,634.8 409.5,637.1 410.0,635.6 410.5,641.1 411.0,638.0 411.5,642.0 412.0,643.7 412.5,642.6 413.0,643.4 413.5,646.1 414.0,649.2 414.5,647.7 415.0,646.2 415.5,649.0 416.0,648.8 416.5,652.1 417.0,652.1 417.5,657.0 418.0,653.5 418.5,651.6 419.0,653.2 419.5,653.0 420.0,650.1 420.5,651.0 421.0,649.2 421.5,648.8 422.0,646.5 422.5,643.9 423.0,646.2 423.5,651.6 424.0,645.1 424.5,646.9 425.0,646.1 425.5,646.7 426.0,640.2 426.5,645.7 427.0,648.5 427.5,648.7 428.0,645.7 428.5,646.4 429.0,648.2 429.5,652.0 430.0,649.2 430.5,651.7 431.0,655.9 431.5,650.8 432.0,651.6 432.5,650.2 433.0,653.1 433.5,652.3 434.0,655.5 434.5,652.3 435.0,650.5 435.5,654.3 436.0,653.8 436.5,654.2 437.0,651.3 437.5,655.1 438.0,654.5 438.5,656.3 439.0,653.5 439.5,653.2 440.0,647.7 440.5,653.7 441.0,651.7 441.5,648.9 442.0,650.7 442.5,655.0 443.0,655.3 443.5,659.4 444.0,657.3 444.5,656.0 445.0,658.0 445.5,654.7 446.0,653.4 446.5,653.4 447.0,651.2 447.5,651.9 448.0,652.9 448.5,653.1 449.0,656.0 449.5,655.0 450.0,651.9 450.5,657.2 451.0,650.7 451.5,653.0 452.0,650.3 452.5,648.9 453.0,651.1 453.5,651.7 454.0,653.9 454.5,653.9 455.0,648.5 455.5,652.1 456.0,647.8 456.5,650.2 457.0,647.1 457.5,648.7 458.0,649.7 458.5,649.1 459.0,648.0 459.5,648.3 460.0,651.5 460.5,649.8 461.0,647.8 461.5,646.9 462.0,646.1 462.5,650.3 463.0,650.3 463.5,650.4 464.0,653.2 464.5,651.2 465.0,654.6 465.5,651.3 466.0,656.7 466.5,654.4 467.0,653.9 467.5,654.4 468.0,658.9 468.5,655.9 469.0,656.7 469.5,658.0 470.0,656.9 470.5,660.7 471.0,662.3 471.5,658.6 472.0,655.4 472.5,657.0 473.0,660.2 473.5,660.7 474.0,661.1 474.5,664.2 475.0,662.5 475.5,656.5 476.0,656.8 476.5,655.1 477.0,658.3 477.5,654.8 478.0,658.3 478.5,659.4 479.0,659.9 479.5,658.3 480.0,657.0 480.5,657.8 481.0,658.0 481.5,659.4 482.0,659.2 482.5,658.0 483.0,658.4 483.5,658.8 484.0,659.3 484.5,657.7 485.0,660.5 485.5,659.2 486.0,657.4 486.5,654.5 487.0,652.9 487.5,652.7 488.0,655.1 488.5,649.6 489.0,650.9 489.5,651.8 490.0,648.4 490.5,649.1 491.0,652.0 491.5,654.0 492.0,654.9 492.5,657.4 493.0,653.6 493.5,656.3 494.0,657.0 494.5,653.9 495.0,656.5 495.5,653.5 496.0,651.8 496.5,650.9 497.0,652.6 497.5,651.4 498.0,652.0 498.5,651.2 499.0,652.2 499.5,651.2 500.0,652.4 500.5,653.0 501.0,650.4 501.5,654.7 502.0,654.9 502.5,653.0 503.0,657.4 503.5,659.9 504.0,658.6 504.5,657.6 505.0,657.5 505.5,656.4 506.0,658.7 506.5,657.9 507.0,656.1 507.5,656.5 508.0,654.3 508.5,655.3 509.0,656.1 509.5,653.7 510.0,650.3 510.5,652.2 511.0,650.6 511.5,652.5 512.0,652.8 512.5,651.1 513.0,648.9 513.5,650.4 514.0,651.5 514.5,651.0 515.0,653.9 515.5,654.5 516.0,654.9 516.5,657.7 517.0,654.3 517.5,655.3 518.0,657.9 518.5,654.2 519.0,652.4 519.5,658.5 520.0,658.7 520.5,661.1 521.0,658.8 521.5,657.9 522.0,660.5 522.5,658.2 523.0,654.8 523.5,654.6 524.0,654.1 524.5,654.8 525.0,656.5 525.5,658.0 526.0,659.7 526.5,660.4 527.0,656.5 527.5,651.8 528.0,652.6 528.5,653.1 529.0,656.3 529.5,653.3 530.0,652.5 530.5,652.7 531.0,655.9 531.5,652.6 532.0,649.8 532.5,651.4 533.0,650.8 533.5,651.3 534.0,651.7 534.5,652.2 535.0,652.5 535.5,649.4 536.0,650.7 536.5,646.7 537.0,648.6 537.5,650.1 538.0,648.3 538.5,649.5 539.0,653.6 539.5,653.0 540.0,653.8 540.5,651.5 541.0,649.8 541.5,652.7 542.0,653.0 542.5,654.1 543.0,654.0 543.5,656.4 544.0,659.2 544.5,657.5 545.0,658.3 545.5,658.8 546.0,658.0 546.5,653.8 547.0,653.7 547.5,653.7 548.0,653.3 548.5,655.0 549.0,657.3 549.5,652.5 550.0,650.9 550.5,648.2 551.0,647.6 551.5,644.4 552.0,646.4 552.5,648.8 553.0,647.7 553.5,644.5 554.0,643.4 554.5,644.4 555.0,646.6 555.5,649.2 556.0,646.3 556.5,647.2 557.0,643.8 557.5,642.2 558.0,644.1 558.5,647.5 559.0,646.0 559.5,646.6 560.0,650.5 560.5,651.5 561.0,651.9 561.5,652.1 562.0,646.5 562.5,644.3 563.0,646.6 563.5,648.0 564.0,648.9 564.5,644.6 565.0,651.3 565.5,651.2 566.0,653.1 566.5,656.3 567.0,654.4 567.5,653.2 568.0,652.3 568.5,656.7 569.0,658.2 569.5,660.6 570.0,658.1 570.5,658.5 571.0,653.9 571.5,656.2 572.0,652.6 572.5,651.5 573.0,652.8 573.5,651.7 574.0,649.4 574.5,653.2 575.0,648.1 575.5,645.6 576.0,647.0 576.5,642.3 577.0,639.7 577.5,642.6 578.0,646.3 578.5,647.9 579.0,643.8 579.5,645.7 580.0,648.9 580.5,646.8 581.0,645.9 581.5,647.6 582.0,649.1 582.5,643.5 583.0,640.5 583.5,634.3 584.0,630.7 584.5,627.0 585.0,621.4 585.5,616.5 586.0,611.6 586.5,604.3 587.0,602.7 587.5,595.7 588.0,590.8 588.5,593.5 589.0,601.2 589.5,606.3 590.0,612.7 590.5,617.8 591.0,621.6 591.5,623.4 592.0,628.0 592.5,632.3 593.0,635.3 593.5,637.5 594.0,644.1 594.5,645.0 595.0,648.0 595.5,646.9 596.0,644.9 596.5,645.4 597.0,647.6 597.5,650.0 598.0,645.8 598.5,643.6 599.0,643.0 599.5,637.2 600.0,639.5 600.5,640.0 601.0,641.9 601.5,642.3 602.0,641.4 602.5,641.4 603.0,645.1 603.5,645.9 604.0,648.2 604.5,647.4 605.0,645.8 605.5,645.8 606.0,646.4 606.5,645.7 607.0,647.1 607.5,647.3 608.0,648.0 608.5,649.0 609.0,651.2 609.5,653.0 610.0,652.3 610.5,647.5 611.0,646.8 611.5,650.6 612.0,654.4 612.5,654.7 613.0,653.0 613.5,653.6 614.0,657.3 614.5,658.4 615.0,653.2 615.5,656.4 616.0,658.6 616.5,658.5 617.0,661.2 617.5,659.0 618.0,660.9 618.5,660.1 619.0,657.8 619.5,650.3 620.0,648.9 620.5,652.5 621.0,653.7 621.5,648.0 622.0,650.8 622.5,650.2 623.0,649.0 623.5,650.7 624.0,650.2 624.5,645.4 625.0,645.2 625.5,649.2 626.0,643.4 626.5,645.0 627.0,646.9 627.5,647.6 628.0,645.1 628.5,645.7 629.0,644.8 629.5,647.2 630.0,646.7 630.5,648.3 631.0,646.5 631.5,643.6 632.0,641.4 632.5,642.7 633.0,642.9 633.5,645.7 634.0,640.4 634.5,641.8 635.0,642.1 635.5,640.9 636.0,639.3 636.5,640.4 637.0,640.7 637.5,644.2 638.0,644.0 638.5,643.0 639.0,642.0 639.5,643.8 640.0,640.7 640.5,640.4 641.0,639.5 641.5,641.9 642.0,641.3 642.5,642.1 643.0,639.3 643.5,636.4 644.0,637.7 644.5,637.6 645.0,640.2 645.5,641.8 646.0,641.0 646.5,636.2 647.0,639.4 647.5,636.9 648.0,632.0 648.5,635.5 649.0,635.6 649.5,637.9 650.0,637.1 650.5,638.9 651.0,637.5 651.5,641.0 652.0,643.3 652.5,631.4 653.0,634.6 653.5,632.8 654.0,630.8 654.5,630.9 655.0,631.1 655.5,635.1 656.0,631.4 656.5,628.0 657.0,630.0 657.5,630.0 658.0,630.1 658.5,629.2 659.0,634.8 659.5,632.9 660.0,627.7 660.5,637.8 661.0,638.6 661.5,635.7 662.0,635.6 662.5,633.6 663.0,635.3 663.5,636.0 664.0,638.5 664.5,640.2 665.0,639.6 665.5,640.3 666.0,638.2 666.5,636.1 667.0,634.6 667.5,639.7 668.0,641.2 668.5,640.9 669.0,638.9 669.5,638.8 670.0,638.1 670.5,639.8 671.0,637.1 671.5,637.9 672.0,638.9 672.5,639.4 673.0,643.1 673.5,642.6 674.0,640.8 674.5,639.8 675.0,640.2 675.5,637.4 676.0,638.8 676.5,638.5 677.0,638.4 677.5,638.9 678.0,639.9 678.5,637.8 679.0,634.8 679.5,629.7 680.0,637.8 680.5,637.2 681.0,635.6 681.5,633.1 682.0,632.4 682.5,632.7 683.0,633.9 683.5,632.3 684.0,634.3 684.5,634.2 685.0,634.2 685.5,634.7 686.0,638.7 686.5,635.9 687.0,634.8 687.5,634.6 688.0,633.3 688.5,639.0 689.0,635.4 689.5,637.0 690.0,630.5 690.5,625.6 691.0,629.7 691.5,629.5 692.0,633.5 692.5,632.8 693.0,632.4 693.5,631.0 694.0,634.2 694.5,630.4 695.0,633.3 695.5,631.5 696.0,634.5 696.5,639.3 697.0,639.4 697.5,637.3 698.0,640.5 698.5,639.9 699.0,640.5 699.5,636.0 700.0,636.3 700.5,633.2 701.0,640.5 701.5,649.2 702.0,639.4 702.5,636.1 703.0,638.4 703.5,642.1 704.0,636.4 704.5,636.3 705.0,638.7 705.5,638.1 706.0,632.5 706.5,636.5 707.0,632.8 707.5,632.9 708.0,634.1 708.5,638.1 709.0,639.5 709.5,633.9 710.0,638.0 710.5,637.6 711.0,630.0 711.5,635.8 712.0,631.1 712.5,628.2 713.0,641.8 713.5,637.9 714.0,641.7 714.5,639.9 715.0,640.6 715.5,642.1 716.0,638.4 716.5,640.4 717.0,639.4 717.5,635.6 718.0,634.3 718.5,631.3 719.0,633.0 719.5,632.3 720.0,639.6 720.5,638.4 721.0,638.4 721.5,638.3 722.0,641.6 722.5,636.3 723.0,632.7 723.5,630.6 724.0,631.5 724.5,632.1 725.0,639.8 725.5,631.5 726.0,633.3 726.5,633.3 727.0,637.1 727.5,637.3 728.0,636.8 728.5,630.7 729.0,630.2 729.5,632.7 730.0,633.9 730.5,630.6 731.0,634.1 731.5,633.3 732.0,641.8 732.5,635.6 733.0,637.2 733.5,634.7 734.0,632.4 734.5,640.3 735.0,639.3 735.5,636.1 736.0,637.5 736.5,636.6 737.0,631.0 737.5,629.5 738.0,623.3 738.5,627.7 739.0,631.6 739.5,634.8 740.0,632.3 740.5,634.9 741.0,632.4 741.5,629.2 742.0,629.2 742.5,628.1 743.0,629.4 743.5,632.8 744.0,627.9 744.5,639.5 745.0,634.2 745.5,633.9 746.0,626.9 746.5,629.5 747.0,634.3 747.5,632.0 748.0,628.1 748.5,630.9 749.0,636.4 749.5,636.9 750.0,636.3 750.5,637.7 751.0,637.4 751.5,631.3 752.0,633.5 752.5,630.9 753.0,634.1 753.5,633.4 754.0,635.9 754.5,637.5 755.0,635.2 755.5,636.9 756.0,633.7 756.5,632.2 757.0,630.5 757.5,630.4 758.0,629.8 758.5,633.3 759.0,634.2 759.5,635.0 760.0,633.5 760.5,635.8 761.0,640.2 761.5,640.0 762.0,629.6 762.5,637.9 763.0,641.9 763.5,637.4 764.0,637.6 764.5,634.1 765.0,631.8 765.5,630.7 766.0,633.1 766.5,636.8 767.0,632.4 767.5,636.7 768.0,639.4 768.5,638.6 769.0,628.4 769.5,636.5 770.0,636.5 770.5,638.2 771.0,636.3 771.5,634.8 772.0,637.9 772.5,636.7 773.0,635.0 773.5,632.9 774.0,633.5 774.5,636.2 775.0,637.6 775.5,633.7 776.0,635.7 776.5,633.4 777.0,631.6 777.5,628.0 778.0,631.8 778.5,629.0 779.0,627.9 779.5,624.1 780.0,624.3 780.5,630.6 781.0,633.6 781.5,636.0 782.0,637.0 782.5,630.1 783.0,633.2 783.5,635.5 784.0,642.5 784.5,646.8 785.0,644.4 785.5,636.6 786.0,636.2 786.5,639.5 787.0,637.1 787.5,633.5 788.0,626.1 788.5,629.0 789.0,631.3 789.5,629.9 790.0,626.2 790.5,624.7 791.0,630.5 791.5,625.6 792.0,622.3 792.5,622.6 793.0,635.0 793.5,634.7 794.0,636.9 794.5,651.2 795.0,650.5 795.5,640.7 796.0,638.3 796.5,638.2 797.0,635.3 797.5,642.5 798.0,641.0 798.5,635.8 799.0,640.5 799.5,628.0 800.0,636.7 800.5,637.2 801.0,636.3 801.5,636.4 802.0,639.2 802.5,639.1 803.0,633.6 803.5,636.8 804.0,630.8 804.5,629.9 805.0,629.3 805.5,637.7 806.0,636.4 806.5,627.0 807.0,636.7 807.5,631.0 808.0,634.0 808.5,632.6 809.0,629.7 809.5,631.5 810.0,631.2 810.5,634.5 811.0,628.4 811.5,630.9 812.0,646.9 812.5,638.1 813.0,635.0 813.5,633.9 814.0,647.4 814.5,639.0 815.0,633.5 815.5,634.6 816.0,636.5 816.5,634.6 817.0,629.7 817.5,627.2 818.0,626.5 818.5,627.1 819.0,629.2 819.5,631.1 820.0,630.4 820.5,633.7 821.0,632.1 821.5,631.1 822.0,632.6 822.5,626.1 823.0,628.6 823.5,625.1 824.0,625.8 824.5,628.4 825.0,632.6 825.5,630.5 826.0,637.0 826.5,638.0 827.0,634.4 827.5,636.6 828.0,632.9 828.5,637.1 829.0,634.5 829.5,634.7 830.0,635.2 830.5,635.4 831.0,634.2 831.5,631.0 832.0,630.9 832.5,634.4 833.0,637.8 833.5,639.4 834.0,635.7 834.5,633.4 835.0,630.6 835.5,630.7 836.0,629.6 836.5,627.3 837.0,627.6 837.5,641.4 838.0,628.1 838.5,632.8 839.0,634.4 839.5,630.7 840.0,630.7 840.5,637.5 841.0,631.7 841.5,630.4 842.0,634.1 842.5,637.2 843.0,630.7 843.5,629.7 844.0,627.9 844.5,631.7 845.0,631.1 845.5,628.6 846.0,630.5 846.5,637.1 847.0,632.3 847.5,631.6 848.0,630.9 848.5,636.2 849.0,637.1 849.5,638.8 850.0,636.2 850.5,637.6 851.0,638.8 851.5,640.2 852.0,639.9 852.5,634.5 853.0,646.2 853.5,644.7 854.0,644.5 854.5,640.7 855.0,636.8 855.5,639.1 856.0,639.1 856.5,638.0 857.0,638.3 857.5,639.0 858.0,639.6 858.5,638.3 859.0,638.8 859.5,636.6 860.0,646.5 860.5,635.3 861.0,636.4 861.5,634.6 862.0,635.8 862.5,635.8 863.0,647.4 863.5,641.2 864.0,637.7 864.5,636.4 865.0,639.7 865.5,637.3 866.0,644.2 866.5,639.7 867.0,644.0 867.5,636.7 868.0,639.9 868.5,643.4 869.0,635.8 869.5,634.9 870.0,635.4 870.5,630.6 871.0,627.5 871.5,629.3 872.0,634.2 872.5,632.7 873.0,633.1 873.5,631.7 874.0,633.6 874.5,639.6 875.0,643.2 875.5,639.6 876.0,638.0 876.5,638.1 877.0,634.7 877.5,630.8 878.0,628.9 878.5,633.6 879.0,633.0 879.5,631.0 880.0,629.2 880.5,633.2 881.0,629.5 881.5,632.0 882.0,633.1 882.5,640.9 883.0,635.6 883.5,637.4 884.0,637.2 884.5,635.1 885.0,632.0 885.5,632.7 886.0,633.7 886.5,631.8 887.0,637.3 887.5,638.3 888.0,643.8 888.5,636.0 889.0,636.2 889.5,632.8 890.0,636.0 890.5,634.0 891.0,635.9 891.5,637.6 892.0,642.1 892.5,635.3 893.0,639.5 893.5,640.9 894.0,634.4 894.5,631.8 895.0,632.7 895.5,635.5 896.0,635.5 896.5,633.3 897.0,631.1 897.5,630.6 898.0,624.9 898.5,632.6 899.0,635.8 899.5,630.1 900.0,625.6 900.5,629.1 901.0,630.9 901.5,633.1 902.0,632.7 902.5,629.0 903.0,625.2 903.5,635.4 904.0,637.9 904.5,637.7 905.0,635.7 905.5,636.0 906.0,641.2 906.5,641.6 907.0,644.0 907.5,638.2 908.0,640.7 908.5,642.0 909.0,639.4 909.5,636.6 910.0,632.6 910.5,633.0 911.0,633.8 911.5,639.1 912.0,642.0 912.5,641.4 913.0,639.0 913.5,640.4 914.0,641.4 914.5,639.8 915.0,647.2 915.5,633.3 916.0,627.9 916.5,633.6 917.0,636.7 917.5,638.2 918.0,642.2 918.5,635.3 919.0,635.3 919.5,631.5 920.0,632.8 920.5,628.4 921.0,632.5 921.5,630.3 922.0,632.3 922.5,629.8 923.0,628.6 923.5,632.4 924.0,631.3 924.5,626.8 925.0,624.8 925.5,627.5 926.0,628.6 926.5,631.4 927.0,630.2 927.5,629.3 928.0,633.0 928.5,628.8 929.0,632.1 929.5,632.3 930.0,629.0 930.5,629.0 931.0,631.2 931.5,632.2 932.0,638.2 932.5,631.5 933.0,636.4 933.5,632.2 934.0,634.7 934.5,628.2 935.0,629.5 935.5,626.0 936.0,628.6 936.5,628.4 937.0,629.7 937.5,631.8 938.0,632.2 938.5,633.2 939.0,639.0 939.5,638.6 940.0,632.4 940.5,633.8 941.0,637.6 941.5,632.0 942.0,633.5 942.5,637.0 943.0,638.5 943.5,643.4 944.0,638.7 944.5,640.8 945.0,639.5 945.5,634.7 946.0,636.4 946.5,642.4 947.0,640.5 947.5,636.4 948.0,640.4 948.5,637.3 949.0,640.3 949.5,635.8 950.0,634.2 950.5,634.6 951.0,634.9 951.5,638.8 952.0,632.2 952.5,631.9 953.0,631.3 953.5,634.3 954.0,635.5 954.5,636.8 955.0,630.3 955.5,629.8 956.0,629.6 956.5,635.5 957.0,634.9 957.5,639.0 958.0,636.0 958.5,634.4 959.0,635.2 959.5,630.8 960.0,628.5 960.5,634.3 961.0,634.8 961.5,631.8 962.0,633.9 962.5,636.1 963.0,633.0 963.5,632.1 964.0,631.2 964.5,634.5 965.0,634.5 965.5,637.9 966.0,631.7 966.5,631.8 967.0,631.4 967.5,628.1 968.0,626.4 968.5,629.0 969.0,628.6 969.5,632.9 970.0,635.7 970.5,643.5 971.0,638.7 971.5,631.0 972.0,629.0 972.5,630.7 973.0,632.4 973.5,630.8 974.0,634.2 974.5,635.0 975.0,637.5 975.5,634.6 976.0,631.8 976.5,635.0 977.0,635.3 977.5,632.2 978.0,634.0 978.5,638.7 979.0,641.8 979.5,631.7 980.0,635.2 980.5,640.0 981.0,639.2 981.5,633.7 982.0,633.4 982.5,633.3 983.0,629.3 983.5,634.5 984.0,633.9 984.5,634.7 985.0,636.1 985.5,636.4 986.0,633.5 986.5,634.8 987.0,636.2 987.5,642.5 988.0,643.3 988.5,640.2 989.0,635.1 989.5,634.1 990.0,644.2 990.5,642.8 991.0,642.1 991.5,641.7 992.0,643.5 992.5,637.3 993.0,634.3 993.5,636.1 994.0,635.4 994.5,635.3 995.0,635.2 995.5,639.6 996.0,638.1 996.5,635.4 997.0,632.7 997.5,631.2 998.0,628.1 998.5,631.9 999.0,634.9 999.5,635.3 1000.0,637.0 1000.5,636.6 1001.0,635.3 1001.5,639.4 1002.0,636.2 1002.5,630.1 1003.0,639.0 1003.5,639.2 1004.0,636.8 1004.5,652.0 1005.0,639.2 1005.5,637.3 1006.0,642.4 1006.5,631.9 1007.0,633.9 1007.5,628.6 1008.0,629.9 1008.5,632.7 1009.0,634.2 1009.5,633.1 1010.0,634.4 1010.5,636.3 1011.0,633.2 1011.5,631.4 1012.0,634.3 1012.5,640.8 1013.0,640.8 1013.5,643.2 1014.0,641.4 1014.5,636.7 1015.0,635.6 1015.5,634.9 1016.0,636.5 1016.5,637.2 1017.0,637.1 1017.5,638.4 1018.0,639.0 1018.5,640.2 1019.0,634.7 1019.5,639.8 1020.0,638.6 1020.5,637.0 1021.0,639.7 1021.5,643.8 1022.0,639.0 1022.5,640.1 1023.0,641.0 1023.5,634.3 1024.0,635.1 1024.5,632.4 1025.0,628.0 1025.5,635.7 1026.0,635.4 1026.5,634.7 1027.0,635.0 1027.5,636.7 1028.0,636.1 1028.5,634.2 1029.0,633.0 1029.5,629.8 1030.0,631.5 1030.5,633.4 1031.0,632.0 1031.5,630.0 1032.0,632.5 1032.5,627.4 1033.0,627.6 1033.5,622.7 1034.0,628.1 1034.5,628.1 1035.0,631.2 1035.5,628.4 1036.0,629.7 1036.5,636.6 1037.0,624.7 1037.5,626.5 1038.0,622.3 1038.5,618.0 1039.0,623.6 1039.5,626.2 1040.0,629.0 1040.5,629.4 1041.0,630.4 1041.5,633.5 1042.0,632.4 1042.5,626.6 1043.0,628.6 1043.5,627.2 1044.0,632.4 1044.5,621.8 1045.0,632.0 1045.5,626.0 1046.0,630.8 1046.5,634.5 1047.0,633.5 1047.5,631.8 1048.0,634.0 1048.5,635.1 1049.0,633.3 1049.5,630.0 1050.0,629.7 1050.5,629.4 1051.0,633.8 1051.5,637.9 1052.0,639.1 1052.5,631.3 1053.0,637.2 1053.5,639.3 1054.0,639.6 1054.5,642.2 1055.0,635.2 1055.5,642.5 1056.0,638.3 1056.5,639.5 1057.0,637.0 1057.5,639.4 1058.0,642.7 1058.5,645.0 1059.0,640.3 1059.5,645.9 1060.0,642.5 1060.5,643.8 1061.0,642.8 1061.5,646.3 1062.0,640.3 1062.5,636.4 1063.0,641.4 1063.5,641.5 1064.0,631.5 1064.5,630.6 1065.0,631.4 1065.5,628.6 1066.0,628.4 1066.5,624.9 1067.0,631.5 1067.5,634.7 1068.0,637.0 1068.5,632.1 1069.0,630.5 1069.5,628.8 1070.0,640.4 1070.5,635.7 1071.0,635.1 1071.5,634.8 1072.0,638.0 1072.5,632.0 1073.0,633.7 1073.5,632.7 1074.0,630.5 1074.5,627.1 1075.0,626.6 1075.5,630.9 1076.0,636.6 1076.5,637.9 1077.0,633.6 1077.5,634.4 1078.0,638.8 1078.5,638.6 1079.0,640.7 1079.5,637.7 1080.0,636.0 1080.5,638.2 1081.0,634.1 1081.5,627.8 1082.0,628.5 1082.5,630.0 1083.0,632.6 1083.5,628.9 1084.0,636.5 1084.5,635.3 1085.0,636.9 1085.5,638.2 1086.0,637.6 1086.5,638.0 1087.0,635.6 1087.5,634.5 1088.0,638.6 1088.5,638.1 1089.0,637.9 1089.5,636.6 1090.0,630.9 1090.5,631.1 1091.0,629.2 1091.5,633.3 1092.0,638.8 1092.5,636.2 1093.0,638.9 1093.5,636.2 1094.0,637.5 1094.5,646.7 1095.0,638.6 1095.5,639.7 1096.0,638.9 1096.5,638.5 1097.0,641.6 1097.5,633.3 1098.0,640.9 1098.5,643.9 1099.0,638.6 1099.5,634.1 1100.0,630.8 1100.5,629.2 1101.0,633.3 1101.5,635.5 1102.0,636.2 1102.5,629.9 1103.0,630.8 1103.5,637.0 1104.0,634.8 1104.5,632.5 1105.0,629.9 1105.5,633.3 1106.0,636.1 1106.5,637.8 1107.0,638.1 1107.5,641.3 1108.0,635.9 1108.5,636.5 1109.0,633.1 1109.5,636.1 1110.0,641.3 1110.5,639.3 1111.0,645.8 1111.5,636.1 1112.0,637.1 1112.5,632.9 1113.0,630.7 1113.5,634.5 1114.0,633.6 1114.5,627.2 1115.0,631.9 1115.5,635.0 1116.0,636.1 1116.5,636.5 1117.0,635.9 1117.5,634.5 1118.0,636.8 1118.5,640.0 1119.0,633.0 1119.5,634.5 1120.0,630.8 1120.5,631.5 1121.0,628.7 1121.5,635.9 1122.0,638.3 1122.5,635.8 1123.0,638.6 1123.5,638.6 1124.0,635.7 1124.5,635.9 1125.0,634.9 1125.5,635.7 1126.0,638.9 1126.5,638.1 1127.0,637.5 1127.5,634.3 1128.0,624.9 1128.5,633.0 1129.0,637.4 1129.5,634.1 1130.0,632.8 1130.5,633.1 1131.0,632.8 1131.5,633.3 1132.0,633.5 1132.5,629.9 1133.0,629.2 1133.5,628.5 1134.0,632.3 1134.5,628.4 1135.0,633.0 1135.5,631.8 1136.0,633.3 1136.5,632.2 1137.0,636.2 1137.5,632.6 1138.0,631.2 1138.5,631.0 1139.0,633.3 1139.5,633.7 1140.0,634.7 1140.5,629.0 1141.0,630.1 1141,687" fill="#00a900"/>
<path d="M118 455h1v1h-1zM120 467h1v1h-1zM121 471h1v1h-1zM124 478h1v1h-1zM125 479h1v1h-1zM127 481h1v1h-1zM129 480h1v1h-1zM131 482h1v1h-1zM132 483h1v1h-1zM133 483h1v1h-1zM134 482h1v1h-1zM137 481h1v1h-1zM138 480h1v1h-1zM140 487h1v1h-1zM141 494h1v1h-1zM142 500h1v1h-1zM143 501h1v1h-1zM145 502h1v1h-1zM149 503h1v1h-1zM150 502h1v1h-1zM151 504h1v1h-1zM152 506h1v1h-1zM154 507h1v1h-1zM156 508h1v1h-1zM157 507h1v1h-1zM158 506h1v1h-1zM159 506h1v1h-1zM161 507h1v1h-1zM162 509h1v1h-1zM164 510h1v1h-1zM167 514h1v1h-1zM169 515h1v1h-1zM170 514h1v1h-1zM171 514h1v1h-1zM173 513h1v1h-1zM174 514h1v1h-1zM175 516h1v1h-1zM176 515h1v1h-1zM177 517h1v1h-1zM178 517h1v1h-1zM181 523h1v1h-1zM182 523h1v1h-1zM183 523h1v1h-1zM185 525h1v1h-1zM186 524h1v1h-1zM187 526h1v1h-1zM189 528h1v1h-1zM191 528h1v1h-1zM193 532h1v1h-1zM194 531h1v1h-1zM195 532h1v1h-1zM196 530h1v1h-1zM198 531h1v1h-1zM200 533h1v1h-1zM201 532h1v1h-1zM202 530h1v1h-1zM203 532h1v1h-1zM205 532h1v1h-1zM206 533h1v1h-1zM208 535h1v1h-1zM210 535h1v1h-1zM211 537h1v1h-1zM212 538h1v1h-1zM213 538h1v1h-1zM214 537h1v1h-1zM216 541h1v1h-1zM217 540h1v1h-1zM218 540h1v1h-1zM219 540h1v1h-1zM220 539h1v1h-1zM221 541h1v1h-1zM222 542h1v1h-1zM223 543h1v1h-1zM224 545h1v1h-1zM225 543h1v1h-1zM228 542h1v1h-1zM229 544h1v1h-1zM230 545h1v1h-1zM231 546h1v1h-1zM232 545h1v1h-1zM233 543h1v1h-1zM234 542h1v1h-1zM235 544h1v1h-1zM236 543h1v1h-1zM237 544h1v1h-1zM238 545h1v1h-1zM239 546h1v1h-1zM242 544h1v1h-1zM244 546h1v1h-1zM245 545h1v1h-1zM246 543h1v1h-1zM247 542h1v1h-1zM248 543h1v1h-1zM251 544h1v1h-1zM252 543h1v1h-1zM254 541h1v1h-1zM255 543h1v1h-1zM256 544h1v1h-1zM257 543h1v1h-1zM258 541h1v1h-1zM259 542h1v1h-1zM264 542h1v1h-1zM266 541h1v1h-1zM267 540h1v1h-1zM268 541h1v1h-1zM269 543h1v1h-1zM271 544h1v1h-1zM272 544h1v1h-1zM273 544h1v1h-1zM274 547h1v1h-1zM275 549h1v1h-1zM276 551h1v1h-1zM278 550h1v1h-1zM279 548h1v1h-1zM282 548h1v1h-1zM283 547h1v1h-1zM284 548h1v1h-1zM286 550h1v1h-1zM287 551h1v1h-1zM289 548h1v1h-1zM290 546h1v1h-1zM291 548h1v1h-1zM292 547h1v1h-1zM294 547h1v1h-1zM295 545h1v1h-1zM298 549h1v1h-1zM300 545h1v1h-1zM302 546h1v1h-1zM303 548h1v1h-1zM304 550h1v1h-1zM305 552h1v1h-1zM306 552h1v1h-1zM307 550h1v1h-1zM308 550h1v1h-1zM309 553h1v1h-1zM312 555h1v1h-1zM313 558h1v1h-1zM314 558h1v1h-1zM315 556h1v1h-1zM316 556h1v1h-1zM317 559h1v1h-1zM320 562h1v1h-1zM321 564h1v1h-1zM322 564h1v1h-1zM325 567h1v1h-1zM326 566h1v1h-1zM327 566h1v1h-1zM330 571h1v1h-1zM331 572h1v1h-1zM332 572h1v1h-1zM333 571h1v1h-1zM335 570h1v1h-1zM337 574h1v1h-1zM338 575h1v1h-1zM342 575h1v1h-1zM346 573h1v1h-1zM348 577h1v1h-1zM349 579h1v1h-1zM350 579h1v1h-1zM352 580h1v1h-1zM353 582h1v1h-1zM354 582h1v1h-1zM357 582h1v1h-1zM358 585h1v1h-1zM361 586h1v1h-1zM362 586h1v1h-1zM363 586h1v1h-1zM364 588h1v1h-1zM365 589h1v1h-1zM367 590h1v1h-1zM370 593h1v1h-1zM371 592h1v1h-1zM372 594h1v1h-1zM373 593h1v1h-1zM374 593h1v1h-1zM376 592h1v1h-1zM377 595h1v1h-1zM378 596h1v1h-1zM379 596h1v1h-1zM380 594h1v1h-1zM381 597h1v1h-1zM382 599h1v1h-1zM383 598h1v1h-1zM384 598h1v1h-1zM386 602h1v1h-1zM387 600h1v1h-1zM388 600h1v1h-1zM390 606h1v1h-1zM391 605h1v1h-1zM392 605h1v1h-1zM393 605h1v1h-1zM394 607h1v1h-1zM395 607h1v1h-1zM396 608h1v1h-1zM398 608h1v1h-1zM399 611h1v1h-1zM400 612h1v1h-1zM401 612h1v1h-1zM402 611h1v1h-1zM403 611h1v1h-1zM404 613h1v1h-1zM406 612h1v1h-1zM407 614h1v1h-1zM408 615h1v1h-1zM409 618h1v1h-1zM411 619h1v1h-1zM413 620h1v1h-1zM414 618h1v1h-1zM415 617h1v1h-1zM417 620h1v1h-1zM418 621h1v1h-1zM419 621h1v1h-1zM420 619h1v1h-1zM421 621h1v1h-1zM423 625h1v1h-1zM424 624h1v1h-1zM425 624h1v1h-1zM426 623h1v1h-1zM427 623h1v1h-1zM429 626h1v1h-1zM430 628h1v1h-1zM431 630h1v1h-1zM432 629h1v1h-1zM433 628h1v1h-1zM434 628h1v1h-1zM435 629h1v1h-1zM436 631h1v1h-1zM437 634h1v1h-1zM438 633h1v1h-1zM439 633h1v1h-1zM440 635h1v1h-1zM441 637h1v1h-1zM443 636h1v1h-1zM445 636h1v1h-1zM447 637h1v1h-1zM448 638h1v1h-1zM450 641h1v1h-1zM453 638h1v1h-1zM455 641h1v1h-1zM456 640h1v1h-1zM458 643h1v1h-1zM461 645h1v1h-1zM464 642h1v1h-1zM465 643h1v1h-1zM467 644h1v1h-1zM468 645h1v1h-1zM470 647h1v1h-1zM471 646h1v1h-1zM472 645h1v1h-1zM473 645h1v1h-1zM474 647h1v1h-1zM475 648h1v1h-1zM476 649h1v1h-1zM477 648h1v1h-1zM478 647h1v1h-1zM479 647h1v1h-1zM484 644h1v1h-1zM488 644h1v1h-1zM491 646h1v1h-1zM493 644h1v1h-1zM495 644h1v1h-1zM496 645h1v1h-1zM497 646h1v1h-1zM498 645h1v1h-1zM499 644h1v1h-1zM500 643h1v1h-1zM501 642h1v1h-1zM504 645h1v1h-1zM505 646h1v1h-1zM506 645h1v1h-1zM507 646h1v1h-1zM508 644h1v1h-1zM509 642h1v1h-1zM512 644h1v1h-1zM513 645h1v1h-1zM514 643h1v1h-1zM515 645h1v1h-1zM516 646h1v1h-1zM517 645h1v1h-1zM519 643h1v1h-1zM520 642h1v1h-1zM523 641h1v1h-1zM525 644h1v1h-1zM527 643h1v1h-1zM528 642h1v1h-1zM533 641h1v1h-1zM534 639h1v1h-1zM536 639h1v1h-1zM538 639h1v1h-1zM539 638h1v1h-1zM541 637h1v1h-1zM542 639h1v1h-1zM543 640h1v1h-1zM545 637h1v1h-1zM546 636h1v1h-1zM548 637h1v1h-1zM549 638h1v1h-1zM550 637h1v1h-1zM551 636h1v1h-1zM554 633h1v1h-1zM558 633h1v1h-1zM559 634h1v1h-1zM560 633h1v1h-1zM561 635h1v1h-1zM562 637h1v1h-1zM564 633h1v1h-1zM565 635h1v1h-1zM568 637h1v1h-1zM569 636h1v1h-1zM571 638h1v1h-1zM572 637h1v1h-1zM573 638h1v1h-1zM577 635h1v1h-1zM579 638h1v1h-1zM582 634h1v1h-1zM583 635h1v1h-1zM584 636h1v1h-1zM585 638h1v1h-1zM586 637h1v1h-1zM587 636h1v1h-1zM588 634h1v1h-1zM589 635h1v1h-1zM591 636h1v1h-1zM592 637h1v1h-1zM593 638h1v1h-1zM594 637h1v1h-1zM595 635h1v1h-1zM596 634h1v1h-1zM597 636h1v1h-1zM599 635h1v1h-1zM600 634h1v1h-1zM601 633h1v1h-1zM603 637h1v1h-1zM605 634h1v1h-1zM606 635h1v1h-1zM608 637h1v1h-1zM612 633h1v1h-1zM613 634h1v1h-1zM614 635h1v1h-1zM615 636h1v1h-1zM617 633h1v1h-1zM618 632h1v1h-1zM620 634h1v1h-1zM621 632h1v1h-1zM624 631h1v1h-1zM625 631h1v1h-1zM626 632h1v1h-1zM627 630h1v1h-1zM628 631h1v1h-1zM629 632h1v1h-1zM631 631h1v1h-1zM632 629h1v1h-1zM633 630h1v1h-1zM635 632h1v1h-1zM636 630h1v1h-1zM637 631h1v1h-1zM638 632h1v1h-1zM639 630h1v1h-1zM640 628h1v1h-1zM641 627h1v1h-1zM642 629h1v1h-1zM643 630h1v1h-1zM644 631h1v1h-1zM645 629h1v1h-1zM646 630h1v1h-1zM648 628h1v1h-1zM649 626h1v1h-1zM650 628h1v1h-1zM651 629h1v1h-1zM652 630h1v1h-1zM653 628h1v1h-1zM654 627h1v1h-1zM656 627h1v1h-1zM658 630h1v1h-1zM659 629h1v1h-1zM661 626h1v1h-1zM662 628h1v1h-1zM663 629h1v1h-1zM664 630h1v1h-1zM665 628h1v1h-1zM666 627h1v1h-1zM667 626h1v1h-1zM668 627h1v1h-1zM669 629h1v1h-1zM670 630h1v1h-1zM672 630h1v1h-1zM673 629h1v1h-1zM674 627h1v1h-1zM677 629h1v1h-1zM679 629h1v1h-1zM680 627h1v1h-1zM682 629h1v1h-1zM683 630h1v1h-1zM685 628h1v1h-1zM686 627h1v1h-1zM687 626h1v1h-1zM689 629h1v1h-1zM690 630h1v1h-1zM691 628h1v1h-1zM693 626h1v1h-1zM694 628h1v1h-1zM695 629h1v1h-1zM696 630h1v1h-1zM697 628h1v1h-1zM699 627h1v1h-1zM700 629h1v1h-1zM701 628h1v1h-1zM702 629h1v1h-1zM703 628h1v1h-1zM705 626h1v1h-1zM706 625h1v1h-1zM707 627h1v1h-1zM708 629h1v1h-1zM709 627h1v1h-1zM710 626h1v1h-1zM712 626h1v1h-1zM713 626h1v1h-1zM714 628h1v1h-1zM715 626h1v1h-1zM718 625h1v1h-1zM719 626h1v1h-1zM720 627h1v1h-1zM722 627h1v1h-1zM723 626h1v1h-1zM724 624h1v1h-1zM725 626h1v1h-1zM726 628h1v1h-1zM732 627h1v1h-1zM733 626h1v1h-1zM734 624h1v1h-1zM736 624h1v1h-1zM737 625h1v1h-1zM738 624h1v1h-1zM739 623h1v1h-1zM740 624h1v1h-1zM744 627h1v1h-1zM745 625h1v1h-1zM746 624h1v1h-1zM748 623h1v1h-1zM749 622h1v1h-1zM750 624h1v1h-1zM751 625h1v1h-1zM753 624h1v1h-1zM754 623h1v1h-1zM756 623h1v1h-1zM757 625h1v1h-1zM758 626h1v1h-1zM762 621h1v1h-1zM763 623h1v1h-1zM764 624h1v1h-1zM765 622h1v1h-1zM766 621h1v1h-1zM768 624h1v1h-1zM769 625h1v1h-1zM770 623h1v1h-1zM771 622h1v1h-1zM772 621h1v1h-1zM774 623h1v1h-1zM775 624h1v1h-1zM777 623h1v1h-1zM778 622h1v1h-1zM779 621h1v1h-1zM780 620h1v1h-1zM781 621h1v1h-1zM783 623h1v1h-1zM785 623h1v1h-1zM786 621h1v1h-1zM788 622h1v1h-1zM789 624h1v1h-1zM790 623h1v1h-1zM791 622h1v1h-1zM794 622h1v1h-1zM795 620h1v1h-1zM796 621h1v1h-1zM797 620h1v1h-1zM798 619h1v1h-1zM799 620h1v1h-1zM801 622h1v1h-1zM803 620h1v1h-1zM805 620h1v1h-1zM806 619h1v1h-1zM807 620h1v1h-1zM808 621h1v1h-1zM811 622h1v1h-1zM812 623h1v1h-1zM815 619h1v1h-1zM816 620h1v1h-1zM818 622h1v1h-1zM819 621h1v1h-1zM820 619h1v1h-1zM822 622h1v1h-1zM823 623h1v1h-1zM827 621h1v1h-1zM828 622h1v1h-1zM829 621h1v1h-1zM831 619h1v1h-1zM832 621h1v1h-1zM834 620h1v1h-1zM835 618h1v1h-1zM836 620h1v1h-1zM837 622h1v1h-1zM838 620h1v1h-1zM840 620h1v1h-1zM841 622h1v1h-1zM842 621h1v1h-1zM843 620h1v1h-1zM844 618h1v1h-1zM845 620h1v1h-1zM846 621h1v1h-1zM847 622h1v1h-1zM848 621h1v1h-1zM850 619h1v1h-1zM851 620h1v1h-1zM852 621h1v1h-1zM853 620h1v1h-1zM855 618h1v1h-1zM856 619h1v1h-1zM857 620h1v1h-1zM858 621h1v1h-1zM859 622h1v1h-1zM860 621h1v1h-1zM861 619h1v1h-1zM862 618h1v1h-1zM864 621h1v1h-1zM865 622h1v1h-1zM866 621h1v1h-1zM867 619h1v1h-1zM870 622h1v1h-1zM871 620h1v1h-1zM872 619h1v1h-1zM875 620h1v1h-1zM876 621h1v1h-1zM877 622h1v1h-1zM881 620h1v1h-1zM882 618h1v1h-1zM883 619h1v1h-1zM884 620h1v1h-1zM885 621h1v1h-1zM886 622h1v1h-1zM887 621h1v1h-1zM888 622h1v1h-1zM889 621h1v1h-1zM891 617h1v1h-1zM892 618h1v1h-1zM893 619h1v1h-1zM894 621h1v1h-1zM895 620h1v1h-1zM897 617h1v1h-1zM898 619h1v1h-1zM899 620h1v1h-1zM900 621h1v1h-1zM901 620h1v1h-1zM905 620h1v1h-1zM906 621h1v1h-1zM908 619h1v1h-1zM910 617h1v1h-1zM913 619h1v1h-1zM914 618h1v1h-1zM915 617h1v1h-1zM916 618h1v1h-1zM918 618h1v1h-1zM919 619h1v1h-1zM920 621h1v1h-1zM922 618h1v1h-1zM924 619h1v1h-1zM925 620h1v1h-1zM926 621h1v1h-1zM927 620h1v1h-1zM929 617h1v1h-1zM930 619h1v1h-1zM931 620h1v1h-1zM932 621h1v1h-1zM935 620h1v1h-1zM936 618h1v1h-1zM937 617h1v1h-1zM938 618h1v1h-1zM941 617h1v1h-1zM942 618h1v1h-1zM943 620h1v1h-1zM944 621h1v1h-1zM945 619h1v1h-1zM946 618h1v1h-1zM947 618h1v1h-1zM949 618h1v1h-1zM951 622h1v1h-1zM952 621h1v1h-1zM953 620h1v1h-1zM955 618h1v1h-1zM958 619h1v1h-1zM959 620h1v1h-1zM960 619h1v1h-1zM961 620h1v1h-1zM962 621h1v1h-1zM966 621h1v1h-1zM968 621h1v1h-1zM969 620h1v1h-1zM970 619h1v1h-1zM971 618h1v1h-1zM973 620h1v1h-1zM974 622h1v1h-1zM975 620h1v1h-1zM976 619h1v1h-1zM978 621h1v1h-1zM979 622h1v1h-1zM980 620h1v1h-1zM981 618h1v1h-1zM982 619h1v1h-1zM983 621h1v1h-1zM984 622h1v1h-1zM985 621h1v1h-1zM986 620h1v1h-1zM987 619h1v1h-1zM989 619h1v1h-1zM991 622h1v1h-1zM992 621h1v1h-1zM994 621h1v1h-1zM997 620h1v1h-1zM998 619h1v1h-1zM999 618h1v1h-1zM1000 620h1v1h-1zM1002 622h1v1h-1zM1003 621h1v1h-1zM1005 619h1v1h-1zM1007 621h1v1h-1zM1008 622h1v1h-1zM1009 623h1v1h-1zM1013 620h1v1h-1zM1014 622h1v1h-1zM1015 623h1v1h-1zM1016 622h1v1h-1zM1018 620h1v1h-1zM1020 620h1v1h-1zM1021 621h1v1h-1zM1023 623h1v1h-1zM1024 622h1v1h-1zM1025 621h1v1h-1zM1026 620h1v1h-1zM1027 619h1v1h-1zM1028 620h1v1h-1zM1029 619h1v1h-1zM1030 621h1v1h-1zM1031 620h1v1h-1zM1032 620h1v1h-1zM1035 623h1v1h-1zM1037 623h1v1h-1zM1038 622h1v1h-1zM1039 620h1v1h-1zM1040 621h1v1h-1zM1041 623h1v1h-1zM1042 624h1v1h-1zM1043 623h1v1h-1zM1046 620h1v1h-1zM1047 622h1v1h-1zM1048 623h1v1h-1zM1049 624h1v1h-1zM1051 622h1v1h-1zM1052 620h1v1h-1zM1056 622h1v1h-1zM1058 621h1v1h-1zM1061 623h1v1h-1zM1062 622h1v1h-1zM1065 621h1v1h-1zM1066 623h1v1h-1zM1067 624h1v1h-1zM1068 623h1v1h-1zM1071 624h1v1h-1zM1072 622h1v1h-1zM1073 624h1v1h-1zM1074 622h1v1h-1zM1075 623h1v1h-1zM1076 624h1v1h-1zM1077 623h1v1h-1zM1078 624h1v1h-1zM1079 625h1v1h-1zM1080 623h1v1h-1zM1081 621h1v1h-1zM1082 623h1v1h-1zM1083 622h1v1h-1zM1084 621h1v1h-1zM1085 623h1v1h-1zM1086 622h1v1h-1zM1087 621h1v1h-1zM1088 622h1v1h-1zM1090 625h1v1h-1zM1091 624h1v1h-1zM1092 623h1v1h-1zM1093 622h1v1h-1zM1094 622h1v1h-1zM1096 626h1v1h-1zM1097 625h1v1h-1zM1098 623h1v1h-1zM1099 622h1v1h-1zM1100 624h1v1h-1zM1101 625h1v1h-1zM1102 626h1v1h-1zM1104 624h1v1h-1zM1105 626h1v1h-1zM1106 625h1v1h-1zM1107 624h1v1h-1zM1109 623h1v1h-1zM1110 625h1v1h-1zM1112 625h1v1h-1zM1113 623h1v1h-1zM1114 622h1v1h-1zM1115 624h1v1h-1zM1116 625h1v1h-1zM1117 626h1v1h-1zM1118 624h1v1h-1zM1120 624h1v1h-1zM1121 625h1v1h-1zM1122 626h1v1h-1zM1123 624h1v1h-1zM1124 625h1v1h-1zM1127 624h1v1h-1zM1129 624h1v1h-1zM1130 625h1v1h-1zM1131 623h1v1h-1zM1133 626h1v1h-1zM1134 627h1v1h-1zM1136 624h1v1h-1zM1138 624h1v1h-1zM1139 626h1v1h-1zM1140 627h1v1h-1zM1141 625h1v1h-1z" fill="#ecb676"/>
<line x1="683.5" y1="441" x2="683.5" y2="687" stroke="#1818b0" stroke-width="1.6" />
<text x="677" y="645" fill="#f0f0f0" font-size="13.9" text-anchor="end" stroke="#000" stroke-opacity="0.7" stroke-width="2" paint-order="stroke">53.1 kHz</text>
<text x="667" y="660" fill="#d8d020" font-size="13.9" text-anchor="end" >–87 dB</text>
<text x="121" y="703" fill="#2ec02e" font-size="13.9" text-anchor="start" >Linear Frequency Spectrum [kHz]</text>
<text x="373" y="706" fill="#f0f0f0" font-size="13.9" text-anchor="middle" >24.0</text>
<line x1="373.5" y1="687" x2="373.5" y2="692" stroke="#f0f0f0" stroke-width="1" />
<text x="629" y="706" fill="#f0f0f0" font-size="13.9" text-anchor="middle" >48.0</text>
<line x1="629.5" y1="687" x2="629.5" y2="692" stroke="#f0f0f0" stroke-width="1" />
<text x="885" y="706" fill="#f0f0f0" font-size="13.9" text-anchor="middle" >72.0</text>
<line x1="885.5" y1="687" x2="885.5" y2="692" stroke="#f0f0f0" stroke-width="1" />
<text x="1141" y="706" fill="#f0f0f0" font-size="13.9" text-anchor="middle" >96.0</text>
<line x1="1141.5" y1="687" x2="1141.5" y2="692" stroke="#f0f0f0" stroke-width="1" />
<text x="411" y="703" fill="#6a6a6a" font-size="13.9" text-anchor="start" >Left/Right</text>
<text x="511" y="703" fill="#6a6a6a" font-size="13.9" text-anchor="start" >Pano/Phase</text>
<text x="707" y="703" fill="#6a6a6a" font-size="13.9" text-anchor="start" >–200dB Mode</text>
<defs><linearGradient id="sg" x1="117" x2="1141" y1="0" y2="0" gradientUnits="userSpaceOnUse"><stop offset="0" stop-color="#ffc828"/><stop offset="0.003" stop-color="#f8a030"/><stop offset="0.01" stop-color="#f88c38"/><stop offset="0.045" stop-color="#f87c40"/><stop offset="0.075" stop-color="#f84868"/><stop offset="0.11" stop-color="#f02c98"/><stop offset="0.15" stop-color="#d020c0"/><stop offset="0.19" stop-color="#9c20e4"/><stop offset="0.224" stop-color="#6018e0"/><stop offset="0.258" stop-color="#3810c8"/><stop offset="0.3" stop-color="#200ca8"/><stop offset="0.356" stop-color="#180a98"/><stop offset="0.42" stop-color="#1a0aa0"/><stop offset="0.527" stop-color="#2010b0"/><stop offset="0.75" stop-color="#3010bc"/><stop offset="1.0" stop-color="#4012c8"/></linearGradient></defs>
<rect x="117" y="735" width="1024" height="19" fill="url(#sg)" />
<g opacity="0.6"><rect x="119" y="735" width="10" height="1" fill="#f88b38"/><rect x="131" y="735" width="8" height="1" fill="#f8863a"/><rect x="150" y="735" width="33" height="1" fill="#f8565c"/><rect x="186" y="735" width="24" height="1" fill="#f6436e"/><rect x="212" y="735" width="10" height="1" fill="#f33685"/><rect x="233" y="735" width="34" height="1" fill="#d020bf"/><rect x="277" y="735" width="13" height="1" fill="#bd20cc"/><rect x="297" y="735" width="31" height="1" fill="#751ae1"/><rect x="338" y="735" width="9" height="1" fill="#5515d9"/><rect x="355" y="735" width="23" height="1" fill="#4b13d3"/><rect x="384" y="735" width="9" height="1" fill="#260db0"/><rect x="404" y="735" width="25" height="1" fill="#230cac"/><rect x="439" y="735" width="25" height="1" fill="#180a99"/><rect x="475" y="735" width="23" height="1" fill="#180a99"/><rect x="505" y="735" width="21" height="1" fill="#190a9c"/><rect x="530" y="735" width="34" height="1" fill="#1a0aa0"/><rect x="564" y="735" width="27" height="1" fill="#1b0ba5"/><rect x="597" y="735" width="22" height="1" fill="#1d0da9"/><rect x="631" y="735" width="13" height="1" fill="#1f0fae"/><rect x="647" y="735" width="28" height="1" fill="#2010b0"/><rect x="678" y="735" width="31" height="1" fill="#2310b2"/><rect x="126" y="736" width="9" height="1" fill="#f89733"/><rect x="138" y="736" width="32" height="1" fill="#f87644"/><rect x="173" y="736" width="17" height="1" fill="#f86253"/><rect x="196" y="736" width="7" height="1" fill="#f33783"/><rect x="214" y="736" width="38" height="1" fill="#e026ab"/><rect x="264" y="736" width="7" height="1" fill="#d220bd"/><rect x="282" y="736" width="32" height="1" fill="#a620dc"/><rect x="326" y="736" width="27" height="1" fill="#5115d7"/><rect x="357" y="736" width="13" height="1" fill="#4612d0"/><rect x="371" y="736" width="19" height="1" fill="#2a0db6"/><rect x="394" y="736" width="6" height="1" fill="#330fc2"/><rect x="402" y="736" width="33" height="1" fill="#210caa"/><rect x="438" y="736" width="9" height="1" fill="#190a9b"/><rect x="453" y="736" width="13" height="1" fill="#1c0ba0"/><rect x="466" y="736" width="12" height="1" fill="#180a98"/><rect x="480" y="736" width="7" height="1" fill="#180a99"/><rect x="490" y="736" width="40" height="1" fill="#180a9b"/><rect x="536" y="736" width="32" height="1" fill="#1a0aa1"/><rect x="581" y="736" width="22" height="1" fill="#1c0ca7"/><rect x="608" y="736" width="7" height="1" fill="#1d0daa"/><rect x="618" y="736" width="36" height="1" fill="#1f0fae"/><rect x="660" y="736" width="7" height="1" fill="#2010b0"/><rect x="670" y="736" width="13" height="1" fill="#2110b1"/><rect x="694" y="736" width="11" height="1" fill="#2310b2"/><rect x="123" y="737" width="40" height="1" fill="#f8833c"/><rect x="173" y="737" width="28" height="1" fill="#f53f76"/><rect x="210" y="737" width="23" height="1" fill="#f33883"/><rect x="236" y="737" width="36" height="1" fill="#ca20c3"/><rect x="282" y="737" width="17" height="1" fill="#a520dd"/><rect x="309" y="737" width="28" height="1" fill="#6719e0"/><rect x="344" y="737" width="28" height="1" fill="#4312ce"/><rect x="375" y="737" width="37" height="1" fill="#230cad"/><rect x="413" y="737" width="39" height="1" fill="#1b0a9e"/><rect x="460" y="737" width="8" height="1" fill="#180a99"/><rect x="470" y="737" width="39" height="1" fill="#180a9a"/><rect x="509" y="737" width="12" height="1" fill="#190a9d"/><rect x="528" y="737" width="31" height="1" fill="#1a0aa1"/><rect x="562" y="737" width="6" height="1" fill="#1b0ba4"/><rect x="568" y="737" width="36" height="1" fill="#1c0ca5"/><rect x="613" y="737" width="33" height="1" fill="#1f0fad"/><rect x="653" y="737" width="36" height="1" fill="#2110b0"/><rect x="697" y="737" width="17" height="1" fill="#2410b3"/><rect x="122" y="738" width="24" height="1" fill="#f89832"/><rect x="146" y="738" width="26" height="1" fill="#f87942"/><rect x="183" y="738" width="27" height="1" fill="#f85061"/><rect x="214" y="738" width="32" height="1" fill="#ea299e"/><rect x="246" y="738" width="34" height="1" fill="#c220c9"/><rect x="281" y="738" width="24" height="1" fill="#b020d5"/><rect x="315" y="738" width="17" height="1" fill="#8d1ee3"/><rect x="338" y="738" width="39" height="1" fill="#5d17de"/><rect x="378" y="738" width="27" height="1" fill="#270db1"/><rect x="411" y="738" width="21" height="1" fill="#1d0ba3"/><rect x="441" y="738" width="8" height="1" fill="#1a0a9c"/><rect x="452" y="738" width="16" height="1" fill="#180a98"/><rect x="473" y="738" width="33" height="1" fill="#180a99"/><rect x="517" y="738" width="12" height="1" fill="#190a9d"/><rect x="535" y="738" width="18" height="1" fill="#1a0aa0"/><rect x="563" y="738" width="30" height="1" fill="#1b0ba4"/><rect x="597" y="738" width="25" height="1" fill="#1d0da9"/><rect x="630" y="738" width="22" height="1" fill="#1f0fad"/><rect x="656" y="738" width="35" height="1" fill="#2110b1"/><rect x="700" y="738" width="40" height="1" fill="#2410b3"/><rect x="123" y="739" width="17" height="1" fill="#f8813d"/><rect x="145" y="739" width="37" height="1" fill="#f87c3f"/><rect x="193" y="739" width="33" height="1" fill="#f23488"/><rect x="231" y="739" width="11" height="1" fill="#df25ac"/><rect x="246" y="739" width="29" height="1" fill="#de25ad"/><rect x="275" y="739" width="11" height="1" fill="#ae20d7"/><rect x="288" y="739" width="37" height="1" fill="#a120e0"/><rect x="332" y="739" width="18" height="1" fill="#5b17dd"/><rect x="351" y="739" width="20" height="1" fill="#370fc7"/><rect x="373" y="739" width="28" height="1" fill="#350fc4"/><rect x="405" y="739" width="7" height="1" fill="#2f0ebd"/><rect x="423" y="739" width="34" height="1" fill="#1b0a9f"/><rect x="467" y="739" width="38" height="1" fill="#180a98"/><rect x="512" y="739" width="23" height="1" fill="#190a9d"/><rect x="546" y="739" width="32" height="1" fill="#1b0ba3"/><rect x="580" y="739" width="28" height="1" fill="#1c0ca7"/><rect x="617" y="739" width="27" height="1" fill="#1f0fad"/><rect x="647" y="739" width="38" height="1" fill="#2010b0"/><rect x="692" y="739" width="36" height="1" fill="#2410b3"/><rect x="119" y="740" width="17" height="1" fill="#f8873a"/><rect x="148" y="740" width="37" height="1" fill="#f87545"/><rect x="190" y="740" width="34" height="1" fill="#f54074"/><rect x="228" y="740" width="6" height="1" fill="#f13090"/><rect x="241" y="740" width="30" height="1" fill="#d421b9"/><rect x="275" y="740" width="38" height="1" fill="#a620dc"/><rect x="316" y="740" width="8" height="1" fill="#6919e0"/><rect x="336" y="740" width="37" height="1" fill="#4d14d5"/><rect x="377" y="740" width="9" height="1" fill="#3d11cb"/><rect x="389" y="740" width="38" height="1" fill="#1f0ba7"/><rect x="435" y="740" width="11" height="1" fill="#1e0ba4"/><rect x="450" y="740" width="38" height="1" fill="#1a0a9d"/><rect x="498" y="740" width="29" height="1" fill="#190a9c"/><rect x="538" y="740" width="15" height="1" fill="#1a0aa0"/><rect x="555" y="740" width="9" height="1" fill="#1a0aa1"/><rect x="568" y="740" width="10" height="1" fill="#1b0ba3"/><rect x="590" y="740" width="16" height="1" fill="#1d0da8"/><rect x="615" y="740" width="31" height="1" fill="#1e0ead"/><rect x="657" y="740" width="36" height="1" fill="#2110b1"/><rect x="700" y="740" width="30" height="1" fill="#2410b3"/><rect x="122" y="741" width="11" height="1" fill="#f8843b"/><rect x="139" y="741" width="8" height="1" fill="#f88839"/><rect x="158" y="741" width="15" height="1" fill="#f87941"/><rect x="181" y="741" width="35" height="1" fill="#f74669"/><rect x="221" y="741" width="20" height="1" fill="#f23586"/><rect x="252" y="741" width="7" height="1" fill="#cb20c3"/><rect x="260" y="741" width="11" height="1" fill="#c220c9"/><rect x="281" y="741" width="14" height="1" fill="#b320d3"/><rect x="301" y="741" width="30" height="1" fill="#a020e0"/><rect x="341" y="741" width="40" height="1" fill="#4312ce"/><rect x="392" y="741" width="38" height="1" fill="#280db2"/><rect x="440" y="741" width="34" height="1" fill="#1a0a9d"/><rect x="476" y="741" width="27" height="1" fill="#180a9a"/><rect x="507" y="741" width="28" height="1" fill="#190a9d"/><rect x="542" y="741" width="7" height="1" fill="#1a0aa0"/><rect x="552" y="741" width="35" height="1" fill="#1b0ba4"/><rect x="591" y="741" width="36" height="1" fill="#1d0da9"/><rect x="631" y="741" width="34" height="1" fill="#2010b0"/><rect x="677" y="741" width="36" height="1" fill="#2310b2"/><rect x="123" y="742" width="24" height="1" fill="#f87f3e"/><rect x="151" y="742" width="9" height="1" fill="#f87842"/><rect x="166" y="742" width="25" height="1" fill="#f8595a"/><rect x="194" y="742" width="13" height="1" fill="#f8545e"/><rect x="216" y="742" width="37" height="1" fill="#e528a5"/><rect x="254" y="742" width="39" height="1" fill="#ba20ce"/><rect x="299" y="742" width="6" height="1" fill="#931ee3"/><rect x="313" y="742" width="27" height="1" fill="#9c20e3"/><rect x="349" y="742" width="7" height="1" fill="#5716da"/><rect x="358" y="742" width="18" height="1" fill="#370fc6"/><rect x="385" y="742" width="34" height="1" fill="#2f0ebc"/><rect x="423" y="742" width="27" height="1" fill="#210ca9"/><rect x="455" y="742" width="39" height="1" fill="#180a98"/><rect x="504" y="742" width="16" height="1" fill="#190a9c"/><rect x="530" y="742" width="30" height="1" fill="#190a9f"/><rect x="562" y="742" width="7" height="1" fill="#1b0ba3"/><rect x="580" y="742" width="15" height="1" fill="#1c0ca6"/><rect x="600" y="742" width="27" height="1" fill="#1e0eaa"/><rect x="631" y="742" width="27" height="1" fill="#1f0fae"/><rect x="665" y="742" width="7" height="1" fill="#2010b0"/><rect x="675" y="742" width="37" height="1" fill="#2210b1"/><rect x="118" y="743" width="40" height="1" fill="#f88d37"/><rect x="159" y="743" width="13" height="1" fill="#f85c58"/><rect x="180" y="743" width="36" height="1" fill="#f6446e"/><rect x="217" y="743" width="18" height="1" fill="#f02f92"/><rect x="247" y="743" width="12" height="1" fill="#e427a6"/><rect x="269" y="743" width="10" height="1" fill="#b520d2"/><rect x="282" y="743" width="25" height="1" fill="#a820db"/><rect x="318" y="743" width="9" height="1" fill="#711ae1"/><rect x="329" y="743" width="30" height="1" fill="#7f1ce2"/><rect x="369" y="743" width="12" height="1" fill="#4a13d3"/><rect x="381" y="743" width="17" height="1" fill="#360fc5"/><rect x="410" y="743" width="27" height="1" fill="#220cab"/><rect x="448" y="743" width="12" height="1" fill="#1d0ba2"/><rect x="472" y="743" width="38" height="1" fill="#180a99"/><rect x="522" y="743" width="8" height="1" fill="#190a9e"/><rect x="538" y="743" width="29" height="1" fill="#1a0aa1"/><rect x="568" y="743" width="13" height="1" fill="#1b0ba3"/><rect x="587" y="743" width="25" height="1" fill="#1c0ca7"/><rect x="616" y="743" width="31" height="1" fill="#1e0ead"/><rect x="656" y="743" width="7" height="1" fill="#1f0faf"/><rect x="666" y="743" width="14" height="1" fill="#2110b0"/><rect x="682" y="743" width="27" height="1" fill="#2210b2"/><rect x="124" y="744" width="38" height="1" fill="#f88939"/><rect x="166" y="744" width="39" height="1" fill="#f86650"/><rect x="206" y="744" width="12" height="1" fill="#f13090"/><rect x="227" y="744" width="38" height="1" fill="#e327a8"/><rect x="266" y="744" width="16" height="1" fill="#c120c9"/><rect x="287" y="744" width="11" height="1" fill="#ba20cf"/><rect x="303" y="744" width="18" height="1" fill="#9d20e2"/><rect x="323" y="744" width="7" height="1" fill="#701ae1"/><rect x="339" y="744" width="20" height="1" fill="#731ae1"/><rect x="362" y="744" width="25" height="1" fill="#330fc2"/><rect x="393" y="744" width="39" height="1" fill="#250caf"/><rect x="435" y="744" width="27" height="1" fill="#1c0ba0"/><rect x="469" y="744" width="31" height="1" fill="#180a99"/><rect x="505" y="744" width="33" height="1" fill="#190a9c"/><rect x="538" y="744" width="12" height="1" fill="#190a9f"/><rect x="556" y="744" width="17" height="1" fill="#1b0ba2"/><rect x="574" y="744" width="18" height="1" fill="#1c0ca5"/><rect x="599" y="744" width="39" height="1" fill="#1e0eab"/><rect x="640" y="744" width="17" height="1" fill="#1f0fae"/><rect x="664" y="744" width="18" height="1" fill="#2110b1"/><rect x="685" y="744" width="22" height="1" fill="#2210b1"/><rect x="123" y="745" width="40" height="1" fill="#f88b38"/><rect x="171" y="745" width="26" height="1" fill="#f87545"/><rect x="207" y="745" width="36" height="1" fill="#f43c7c"/><rect x="254" y="745" width="33" height="1" fill="#cc20c2"/><rect x="293" y="745" width="15" height="1" fill="#bf20cb"/><rect x="314" y="745" width="35" height="1" fill="#8c1de2"/><rect x="355" y="745" width="16" height="1" fill="#4612d0"/><rect x="382" y="745" width="36" height="1" fill="#320fc0"/><rect x="424" y="745" width="6" height="1" fill="#1f0ba7"/><rect x="440" y="745" width="35" height="1" fill="#1d0ba3"/><rect x="480" y="745" width="9" height="1" fill="#180a98"/><rect x="499" y="745" width="16" height="1" fill="#180a9b"/><rect x="527" y="745" width="34" height="1" fill="#190a9e"/><rect x="571" y="745" width="37" height="1" fill="#1c0ca7"/><rect x="609" y="745" width="6" height="1" fill="#1d0da8"/><rect x="621" y="745" width="20" height="1" fill="#1e0eab"/><rect x="649" y="745" width="29" height="1" fill="#2010b0"/><rect x="684" y="745" width="25" height="1" fill="#2210b2"/><rect x="121" y="746" width="11" height="1" fill="#ffc828"/><rect x="141" y="746" width="17" height="1" fill="#f8853b"/><rect x="161" y="746" width="26" height="1" fill="#f87d3f"/><rect x="195" y="746" width="8" height="1" fill="#f33882"/><rect x="205" y="746" width="32" height="1" fill="#f1328c"/><rect x="243" y="746" width="16" height="1" fill="#e527a5"/><rect x="268" y="746" width="24" height="1" fill="#c420c7"/><rect x="295" y="746" width="27" height="1" fill="#b120d5"/><rect x="328" y="746" width="28" height="1" fill="#6819e0"/><rect x="363" y="746" width="25" height="1" fill="#4d14d4"/><rect x="400" y="746" width="29" height="1" fill="#210caa"/><rect x="441" y="746" width="21" height="1" fill="#1d0ba2"/><rect x="466" y="746" width="17" height="1" fill="#190a9b"/><rect x="486" y="746" width="13" height="1" fill="#180a99"/><rect x="503" y="746" width="19" height="1" fill="#180a9b"/><rect x="525" y="746" width="35" height="1" fill="#190a9f"/><rect x="564" y="746" width="34" height="1" fill="#1b0ba4"/><rect x="600" y="746" width="40" height="1" fill="#1d0da9"/><rect x="640" y="746" width="35" height="1" fill="#1f0fae"/><rect x="683" y="746" width="25" height="1" fill="#2210b1"/><rect x="127" y="747" width="19" height="1" fill="#f89434"/><rect x="151" y="747" width="31" height="1" fill="#f87f3e"/><rect x="183" y="747" width="33" height="1" fill="#f85b58"/><rect x="217" y="747" width="6" height="1" fill="#ec2a9c"/><rect x="228" y="747" width="31" height="1" fill="#e528a4"/><rect x="271" y="747" width="18" height="1" fill="#ce20c0"/><rect x="297" y="747" width="6" height="1" fill="#b420d2"/><rect x="312" y="747" width="25" height="1" fill="#8b1de2"/><rect x="349" y="747" width="21" height="1" fill="#4b13d3"/><rect x="374" y="747" width="9" height="1" fill="#4312ce"/><rect x="386" y="747" width="7" height="1" fill="#3b10c9"/><rect x="394" y="747" width="22" height="1" fill="#270db2"/><rect x="425" y="747" width="36" height="1" fill="#1e0ba5"/><rect x="469" y="747" width="36" height="1" fill="#180a98"/><rect x="516" y="747" width="9" height="1" fill="#190a9d"/><rect x="536" y="747" width="39" height="1" fill="#1a0aa1"/><rect x="584" y="747" width="21" height="1" fill="#1c0ca6"/><rect x="615" y="747" width="26" height="1" fill="#1e0eab"/><rect x="652" y="747" width="16" height="1" fill="#1f0faf"/><rect x="668" y="747" width="36" height="1" fill="#2110b1"/><rect x="119" y="748" width="12" height="1" fill="#f89e30"/><rect x="142" y="748" width="18" height="1" fill="#f8843b"/><rect x="165" y="748" width="35" height="1" fill="#f87842"/><rect x="210" y="748" width="6" height="1" fill="#f23686"/><rect x="226" y="748" width="22" height="1" fill="#e628a3"/><rect x="251" y="748" width="11" height="1" fill="#e126a9"/><rect x="265" y="748" width="30" height="1" fill="#c520c7"/><rect x="304" y="748" width="39" height="1" fill="#7e1ce2"/><rect x="352" y="748" width="39" height="1" fill="#360fc6"/><rect x="400" y="748" width="18" height="1" fill="#2a0db6"/><rect x="427" y="748" width="33" height="1" fill="#1b0a9f"/><rect x="469" y="748" width="29" height="1" fill="#180a99"/><rect x="505" y="748" width="12" height="1" fill="#180a9b"/><rect x="519" y="748" width="7" height="1" fill="#190a9d"/><rect x="536" y="748" width="16" height="1" fill="#190a9e"/><rect x="563" y="748" width="32" height="1" fill="#1b0ba3"/><rect x="605" y="748" width="35" height="1" fill="#1d0daa"/><rect x="642" y="748" width="8" height="1" fill="#1e0eac"/><rect x="656" y="748" width="31" height="1" fill="#2010b0"/><rect x="689" y="748" width="33" height="1" fill="#2210b2"/><rect x="119" y="749" width="6" height="1" fill="#ffc828"/><rect x="134" y="749" width="13" height="1" fill="#fbb12c"/><rect x="154" y="749" width="18" height="1" fill="#f87d3f"/><rect x="179" y="749" width="30" height="1" fill="#f54075"/><rect x="213" y="749" width="28" height="1" fill="#f43d7a"/><rect x="243" y="749" width="9" height="1" fill="#db24b1"/><rect x="257" y="749" width="30" height="1" fill="#c320c8"/><rect x="291" y="749" width="13" height="1" fill="#bf20cb"/><rect x="310" y="749" width="19" height="1" fill="#ab20d9"/><rect x="340" y="749" width="28" height="1" fill="#4e14d5"/><rect x="378" y="749" width="31" height="1" fill="#2d0eba"/><rect x="417" y="749" width="21" height="1" fill="#1e0ba5"/><rect x="448" y="749" width="10" height="1" fill="#1e0ba4"/><rect x="460" y="749" width="21" height="1" fill="#180a98"/><rect x="488" y="749" width="35" height="1" fill="#180a9a"/><rect x="530" y="749" width="14" height="1" fill="#190a9e"/><rect x="547" y="749" width="6" height="1" fill="#190a9f"/><rect x="560" y="749" width="36" height="1" fill="#1b0ba3"/><rect x="607" y="749" width="34" height="1" fill="#1d0da9"/><rect x="650" y="749" width="38" height="1" fill="#2010b0"/><rect x="696" y="749" width="19" height="1" fill="#2310b2"/><rect x="123" y="750" width="12" height="1" fill="#f8873a"/><rect x="142" y="750" width="8" height="1" fill="#f88939"/><rect x="151" y="750" width="22" height="1" fill="#f8853b"/><rect x="179" y="750" width="15" height="1" fill="#f84966"/><rect x="204" y="750" width="12" height="1" fill="#f33685"/><rect x="224" y="750" width="15" height="1" fill="#e728a2"/><rect x="239" y="750" width="20" height="1" fill="#e327a8"/><rect x="260" y="750" width="23" height="1" fill="#c420c7"/><rect x="287" y="750" width="30" height="1" fill="#bd20cc"/><rect x="329" y="750" width="39" height="1" fill="#7b1be1"/><rect x="377" y="750" width="17" height="1" fill="#4d14d4"/><rect x="397" y="750" width="31" height="1" fill="#2a0db6"/><rect x="434" y="750" width="10" height="1" fill="#210caa"/><rect x="449" y="750" width="23" height="1" fill="#1a0a9c"/><rect x="477" y="750" width="17" height="1" fill="#180a98"/><rect x="503" y="750" width="32" height="1" fill="#190a9c"/><rect x="540" y="750" width="15" height="1" fill="#190a9e"/><rect x="563" y="750" width="31" height="1" fill="#1b0ba4"/><rect x="606" y="750" width="23" height="1" fill="#1d0da9"/><rect x="640" y="750" width="9" height="1" fill="#1e0ead"/><rect x="656" y="750" width="26" height="1" fill="#2010b0"/><rect x="684" y="750" width="23" height="1" fill="#2110b1"/><rect x="119" y="751" width="17" height="1" fill="#f89235"/><rect x="140" y="751" width="12" height="1" fill="#f8873a"/><rect x="160" y="751" width="16" height="1" fill="#f8803d"/><rect x="182" y="751" width="30" height="1" fill="#f86b4c"/><rect x="219" y="751" width="8" height="1" fill="#ef2b98"/><rect x="230" y="751" width="34" height="1" fill="#f1318e"/><rect x="270" y="751" width="15" height="1" fill="#c420c8"/><rect x="293" y="751" width="10" height="1" fill="#c920c4"/><rect x="313" y="751" width="20" height="1" fill="#9c20e3"/><rect x="337" y="751" width="18" height="1" fill="#6719e0"/><rect x="360" y="751" width="10" height="1" fill="#5315d8"/><rect x="382" y="751" width="32" height="1" fill="#2d0eba"/><rect x="426" y="751" width="21" height="1" fill="#200ca8"/><rect x="456" y="751" width="9" height="1" fill="#1a0a9d"/><rect x="467" y="751" width="27" height="1" fill="#190a9a"/><rect x="504" y="751" width="8" height="1" fill="#180a9a"/><rect x="522" y="751" width="7" height="1" fill="#190a9c"/><rect x="533" y="751" width="31" height="1" fill="#1a0aa0"/><rect x="564" y="751" width="20" height="1" fill="#1b0ba2"/><rect x="596" y="751" width="37" height="1" fill="#1c0ca7"/><rect x="635" y="751" width="20" height="1" fill="#1f0fad"/><rect x="664" y="751" width="25" height="1" fill="#2110b0"/><rect x="699" y="751" width="36" height="1" fill="#2310b2"/><rect x="124" y="752" width="30" height="1" fill="#f8833c"/><rect x="157" y="752" width="7" height="1" fill="#f8833c"/><rect x="167" y="752" width="19" height="1" fill="#f8803d"/><rect x="193" y="752" width="21" height="1" fill="#f8535e"/><rect x="215" y="752" width="26" height="1" fill="#f53f77"/><rect x="251" y="752" width="15" height="1" fill="#d421ba"/><rect x="268" y="752" width="19" height="1" fill="#c520c7"/><rect x="293" y="752" width="21" height="1" fill="#9e20e2"/><rect x="316" y="752" width="35" height="1" fill="#821ce2"/><rect x="355" y="752" width="18" height="1" fill="#5e17df"/><rect x="380" y="752" width="21" height="1" fill="#360fc6"/><rect x="409" y="752" width="35" height="1" fill="#1f0ba7"/><rect x="448" y="752" width="29" height="1" fill="#1a0a9d"/><rect x="487" y="752" width="19" height="1" fill="#180a98"/><rect x="515" y="752" width="17" height="1" fill="#180a9b"/><rect x="540" y="752" width="19" height="1" fill="#190a9f"/><rect x="563" y="752" width="13" height="1" fill="#1a0aa2"/><rect x="584" y="752" width="40" height="1" fill="#1d0da8"/><rect x="628" y="752" width="21" height="1" fill="#1e0eac"/><rect x="656" y="752" width="26" height="1" fill="#2010b0"/><rect x="692" y="752" width="36" height="1" fill="#2310b2"/><rect x="126" y="753" width="15" height="1" fill="#f8863a"/><rect x="143" y="753" width="9" height="1" fill="#f8863a"/><rect x="154" y="753" width="15" height="1" fill="#f87e3e"/><rect x="171" y="753" width="20" height="1" fill="#f87544"/><rect x="202" y="753" width="9" height="1" fill="#f7456c"/><rect x="216" y="753" width="12" height="1" fill="#f53d79"/><rect x="232" y="753" width="18" height="1" fill="#ec2a9c"/><rect x="257" y="753" width="22" height="1" fill="#db24b2"/><rect x="286" y="753" width="22" height="1" fill="#ca20c3"/><rect x="316" y="753" width="20" height="1" fill="#7c1be1"/><rect x="338" y="753" width="25" height="1" fill="#751ae1"/><rect x="370" y="753" width="34" height="1" fill="#360fc6"/><rect x="411" y="753" width="38" height="1" fill="#270db2"/><rect x="460" y="753" width="21" height="1" fill="#1a0a9d"/><rect x="483" y="753" width="7" height="1" fill="#190a9a"/><rect x="496" y="753" width="14" height="1" fill="#180a9a"/><rect x="512" y="753" width="29" height="1" fill="#190a9d"/><rect x="549" y="753" width="37" height="1" fill="#1a0aa2"/><rect x="597" y="753" width="7" height="1" fill="#1c0ca6"/><rect x="608" y="753" width="21" height="1" fill="#1d0da9"/><rect x="637" y="753" width="13" height="1" fill="#1e0eac"/><rect x="651" y="753" width="31" height="1" fill="#2010b0"/><rect x="683" y="753" width="11" height="1" fill="#2110b0"/></g>
<rect x="585.5" y="735" width="4" height="19" fill="#8a28f8" />
<rect x="647" y="735" width="3" height="19" fill="#4a18d0" opacity="0.7"/>
<line x1="117" y1="796.5" x2="1142" y2="796.5" stroke="#4a4a4a" stroke-width="1" />
<text x="113" y="801.5" fill="#e8e8e8" font-size="13.9" text-anchor="end" >25</text>
<line x1="117" y1="859.5" x2="1142" y2="859.5" stroke="#4a4a4a" stroke-width="1" />
<text x="113" y="864.5" fill="#e8e8e8" font-size="13.9" text-anchor="end" >50</text>
<line x1="117" y1="921.5" x2="1142" y2="921.5" stroke="#4a4a4a" stroke-width="1" />
<text x="113" y="926.5" fill="#e8e8e8" font-size="13.9" text-anchor="end" >75</text>
<line x1="117" y1="984.5" x2="1142" y2="984.5" stroke="#4a4a4a" stroke-width="1" />
<text x="113" y="984" fill="#e8e8e8" font-size="13.9" text-anchor="end" >100</text>
<text x="113" y="745" fill="#e8e8e8" font-size="13.9" text-anchor="end" >0</text>
<text x="85" y="745" fill="#777" font-size="13.9" text-anchor="start" >%</text>
<text x="86" y="771" fill="#27d627" font-size="13.9" text-anchor="start" >MAX</text>
<text x="87" y="833.5" fill="#27d627" font-size="13.9" text-anchor="start" >BRY</text>
<text x="87" y="895.5" fill="#6a6a6a" font-size="13.9" text-anchor="start" >COF</text>
<line x1="683.5" y1="735" x2="683.5" y2="984" stroke="#1818b0" stroke-width="1.4" />
<line x1="673" y1="831.5" x2="693" y2="831.5" stroke="#1616c4" stroke-width="1" />
<text x="662.5" y="846" fill="#f0f0f0" font-size="13.9" text-anchor="end" >0:01:03</text>
<text x="662.5" y="861" fill="#f0f0f0" font-size="13.9" text-anchor="end" >–200 dB</text>
<text x="662.5" y="876" fill="#f0f0f0" font-size="13.9" text-anchor="end" >ND: (93.8 Hz) –170 dB</text>
</svg>
</body></html>
